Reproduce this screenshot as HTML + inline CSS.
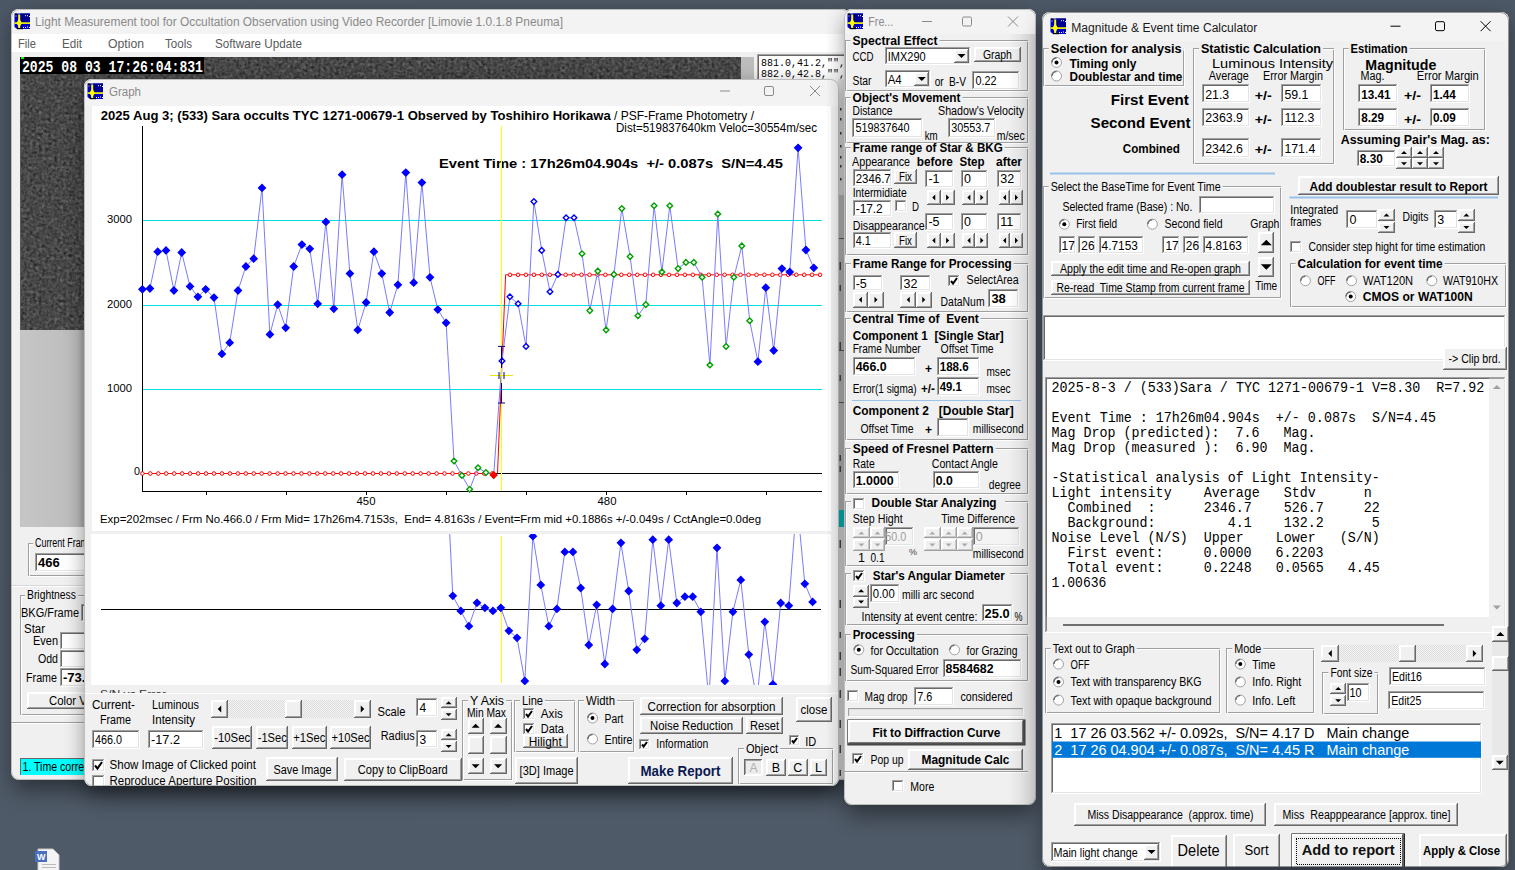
<!DOCTYPE html>
<html><head><meta charset="utf-8"><title>Limovie</title>
<style>
html,body{margin:0;padding:0;width:1515px;height:870px;overflow:hidden;background:#4b5664;}
svg{display:block;font-family:"Liberation Sans", sans-serif;} text{white-space:pre;}
</style></head><body>
<svg width="1515" height="870" viewBox="0 0 1515 870">
<defs>
<linearGradient id="desk" x1="0" y1="0" x2="0.3" y2="1">
<stop offset="0" stop-color="#4d5866"/><stop offset="1" stop-color="#4f5a68"/>
</linearGradient>
<filter id="shadow" x="-10%" y="-10%" width="120%" height="120%"><feGaussianBlur stdDeviation="11"/></filter>
<filter id="noise" x="0" y="0" width="100%" height="100%" color-interpolation-filters="sRGB">
<feTurbulence type="fractalNoise" baseFrequency="0.33" numOctaves="2" seed="3" result="t"/>
<feColorMatrix type="matrix" values="0.33 0.33 0.33 0 0  0.33 0.33 0.33 0 0  0.33 0.33 0.33 0 0  0 0 0 0 1"/>
<feComponentTransfer><feFuncR type="linear" slope="0.62" intercept="-0.025"/><feFuncG type="linear" slope="0.62" intercept="-0.025"/><feFuncB type="linear" slope="0.62" intercept="-0.025"/></feComponentTransfer>
</filter>
</defs>
<rect x="0" y="0" width="1515" height="870" fill="url(#desk)" />
<rect x="13" y="17" width="835" height="773" rx="8" fill="#000" opacity="0.45" filter="url(#shadow)"/>
<clipPath id="cmain"><rect x="11" y="9" width="839" height="771" rx="8"/></clipPath>
<g clip-path="url(#cmain)">
<rect x="11" y="9" width="839" height="771" fill="#f0f0f0" />
<rect x="11" y="9" width="839" height="25" fill="#f3f3f3" />
<g transform="translate(14,13) scale(1.0)"><path d="M0.5,0.5 H16 V16 H3 L0.5,14 Z" fill="#0000c0"/><rect x="6" y="0.5" width="10" height="9" fill="#000090"/><rect x="0.5" y="9.3" width="15.5" height="1.6" fill="#ffff00"/><rect x="4.2" y="1.5" width="2" height="14" fill="#ffff00"/><polygon points="5.2,5.5 8,10 5.2,14.5 2.4,10" fill="#ffff00"/><rect x="1" y="0.5" width="2" height="1.5" fill="#000"/><rect x="3" y="15" width="6" height="1.2" fill="#000"/><rect x="1.5" y="2.5" width="1" height="1" fill="#dde"/><rect x="11" y="2.2" width="1" height="1" fill="#fff"/><rect x="13" y="2.2" width="1" height="1" fill="#fff"/><rect x="15" y="3" width="1" height="1" fill="#fff"/><rect x="9" y="14" width="1" height="1" fill="#fff"/><rect x="11" y="14" width="1" height="1" fill="#fff"/><rect x="13" y="13.5" width="1" height="1" fill="#fff"/><rect x="15" y="14" width="1" height="1" fill="#fff"/></g>
<text x="4" y="724" font-size="11" fill="#fff" font-weight="bold">G</text>
<text x="35.0" y="26.0" font-size="12.5" fill="#8a8a8a" textLength="528.0" lengthAdjust="spacingAndGlyphs" >Light Measurement tool for Occultation Observation using Video Recorder [Limovie 1.0.1.8 Pneuma]</text>
<rect x="11" y="34" width="839" height="18" fill="#ffffff" />
<text x="18.0" y="47.8" font-size="12" fill="#5a5a5a" textLength="18.0" lengthAdjust="spacingAndGlyphs" >File</text>
<text x="62.0" y="47.8" font-size="12" fill="#5a5a5a" textLength="20.0" lengthAdjust="spacingAndGlyphs" >Edit</text>
<text x="108.0" y="47.8" font-size="12" fill="#5a5a5a" textLength="36.0" lengthAdjust="spacingAndGlyphs" >Option</text>
<text x="165.0" y="47.8" font-size="12" fill="#5a5a5a" textLength="27.0" lengthAdjust="spacingAndGlyphs" >Tools</text>
<text x="215.0" y="47.8" font-size="12" fill="#5a5a5a" textLength="87.0" lengthAdjust="spacingAndGlyphs" >Software Update</text>
<rect x="20" y="57" width="721" height="273" fill="#3a3a3a" />
<rect x="20" y="57" width="721" height="273" fill="#fff" filter="url(#noise)"/>
<rect x="20" y="57" width="1" height="470" fill="#5a5a5a" />
<rect x="20" y="330" width="721" height="197" fill="#c2c2c2" />
<linearGradient id="vgr" x1="0" x2="1"><stop offset="0" stop-color="#c6c6c6"/><stop offset="0.9" stop-color="#bcbcbc"/><stop offset="1" stop-color="#a8a8a8"/></linearGradient>
<rect x="21" y="330" width="63" height="197" fill="url(#vgr)" />
<rect x="741" y="57" width="13" height="273" fill="#bdbdbd" />
<rect x="20" y="57" width="184" height="17" fill="#000" />
<text x="22.0" y="71.8" font-size="16" fill="#fff" font-weight="bold" font-family="'Liberation Mono', monospace" textLength="181.0" lengthAdjust="spacingAndGlyphs" >2025 08 03 17:26:04:831</text>
<rect x="21" y="57" width="3" height="2" fill="#00ff00"/>
<rect x="757" y="54" width="93" height="276" fill="#fff" />
<rect x="757" y="54" width="93" height="1" fill="#a0a0a0" />
<rect x="757" y="54" width="1" height="276" fill="#a0a0a0" />
<rect x="757" y="329" width="93" height="1" fill="#fff" />
<rect x="849" y="54" width="1" height="276" fill="#fff" />
<rect x="758" y="55" width="91" height="1" fill="#696969" />
<rect x="758" y="55" width="1" height="274" fill="#696969" />
<rect x="758" y="328" width="91" height="1" fill="#e3e3e3" />
<rect x="848" y="55" width="1" height="274" fill="#e3e3e3" />
<text x="761.0" y="66.0" font-size="11" fill="#000" font-family="'Liberation Mono', monospace" textLength="84.0" lengthAdjust="spacingAndGlyphs" >881.0,41.2,"",</text>
<text x="761.0" y="76.5" font-size="11" fill="#000" font-family="'Liberation Mono', monospace" textLength="84.0" lengthAdjust="spacingAndGlyphs" >882.0,42.8,"",</text>
<rect x="838" y="79" width="6" height="116" fill="#ececec" />
<rect x="840" y="108" width="1.5" height="2.5" fill="#404040" />
<rect x="840" y="118" width="1.5" height="2.5" fill="#404040" />
<rect x="840" y="132" width="1.5" height="2.5" fill="#404040" />
<rect x="840" y="145" width="1.5" height="2.5" fill="#404040" />
<rect x="840" y="156" width="1.5" height="2.5" fill="#404040" />
<rect x="840" y="165" width="1.5" height="2.5" fill="#404040" />
<rect x="840" y="178" width="1.5" height="2.5" fill="#404040" />
<rect x="838" y="195" width="6" height="332" fill="#c8c8c8" />
<rect x="838" y="195" width="1" height="332" fill="#a0a0a0" />
<rect x="838" y="238" width="6" height="1" fill="#606060" />
<rect x="838" y="350" width="6" height="1" fill="#606060" />
<rect x="838" y="402" width="6" height="1" fill="#606060" />
<rect x="838" y="527" width="6" height="256" fill="#ececec" />
<rect x="839.5" y="262" width="1.5" height="8" fill="#505050" />
<rect x="839.5" y="285" width="1.5" height="6" fill="#505050" />
<rect x="839.5" y="342" width="1.5" height="8" fill="#505050" />
<rect x="839.5" y="375" width="1.5" height="6" fill="#505050" />
<rect x="839.5" y="455" width="1.5" height="6" fill="#505050" />
<rect x="839.5" y="466" width="1.5" height="6" fill="#505050" />
<rect x="839.5" y="540" width="1.5" height="8" fill="#505050" />
<rect x="839.5" y="600" width="1.5" height="8" fill="#505050" />
<rect x="839.5" y="632" width="1.5" height="6" fill="#505050" />
<rect x="839.5" y="652" width="1.5" height="8" fill="#505050" />
<rect x="839.5" y="668" width="1.5" height="8" fill="#505050" />
<rect x="839.5" y="690" width="1.5" height="8" fill="#505050" />
<rect x="839.5" y="720" width="1.5" height="8" fill="#505050" />
<rect x="839.5" y="745" width="1.5" height="8" fill="#505050" />
<rect x="839.5" y="770" width="1.5" height="6" fill="#505050" />
<rect x="838" y="510" width="6" height="17" fill="#00c8c8" />
<rect x="28" y="543" width="71" height="32" fill="none" stroke="#a0a0a0" stroke-width="1" shape-rendering="crispEdges" transform="translate(0.5,0.5)"/>
<rect x="29" y="544" width="71" height="32" fill="none" stroke="#ffffff" stroke-width="1" shape-rendering="crispEdges" transform="translate(0.5,0.5)" stroke-opacity="0.9"/>
<rect x="33" y="541" width="62" height="5" fill="#f0f0f0" />
<text x="35.0" y="547.3" font-size="12" fill="#000" textLength="58.0" lengthAdjust="spacingAndGlyphs" >Current Frame</text>
<rect x="35" y="553" width="65" height="19" fill="#fff" />
<rect x="35" y="553" width="65" height="1" fill="#a0a0a0" />
<rect x="35" y="553" width="1" height="19" fill="#a0a0a0" />
<rect x="35" y="571" width="65" height="1" fill="#ffffff" />
<rect x="99" y="553" width="1" height="19" fill="#ffffff" />
<rect x="36" y="554" width="63" height="1" fill="#696969" />
<rect x="36" y="554" width="1" height="17" fill="#696969" />
<rect x="36" y="570" width="63" height="1" fill="#e3e3e3" />
<rect x="98" y="554" width="1" height="17" fill="#e3e3e3" />
<text x="38.0" y="567.2" font-size="13" fill="#000" font-weight="bold" >466</text>
<rect x="11" y="585" width="73" height="1" fill="#d8d8d8" />
<rect x="11" y="586" width="73" height="1" fill="#fff" />
<rect x="20" y="595" width="79" height="119" fill="none" stroke="#a0a0a0" stroke-width="1" shape-rendering="crispEdges" transform="translate(0.5,0.5)"/>
<rect x="21" y="596" width="79" height="119" fill="none" stroke="#ffffff" stroke-width="1" shape-rendering="crispEdges" transform="translate(0.5,0.5)" stroke-opacity="0.9"/>
<rect x="25" y="593" width="53" height="5" fill="#f0f0f0" />
<text x="27.0" y="599.3" font-size="12" fill="#000" textLength="49.0" lengthAdjust="spacingAndGlyphs" >Brightness</text>
<text x="21.0" y="616.9" font-size="12" fill="#000" textLength="58.0" lengthAdjust="spacingAndGlyphs" >BKG/Frame</text>
<rect x="81" y="604" width="19" height="18" fill="#fff" />
<rect x="81" y="604" width="19" height="1" fill="#a0a0a0" />
<rect x="81" y="604" width="1" height="18" fill="#a0a0a0" />
<rect x="81" y="621" width="19" height="1" fill="#ffffff" />
<rect x="99" y="604" width="1" height="18" fill="#ffffff" />
<rect x="82" y="605" width="17" height="1" fill="#696969" />
<rect x="82" y="605" width="1" height="16" fill="#696969" />
<rect x="82" y="620" width="17" height="1" fill="#e3e3e3" />
<rect x="98" y="605" width="1" height="16" fill="#e3e3e3" />
<text x="24.0" y="632.9" font-size="12" fill="#000" textLength="21.0" lengthAdjust="spacingAndGlyphs" >Star</text>
<text x="33.0" y="645.3" font-size="12" fill="#000" textLength="25.0" lengthAdjust="spacingAndGlyphs" >Even</text>
<rect x="60" y="632" width="40" height="18" fill="#fff" />
<rect x="60" y="632" width="40" height="1" fill="#a0a0a0" />
<rect x="60" y="632" width="1" height="18" fill="#a0a0a0" />
<rect x="60" y="649" width="40" height="1" fill="#ffffff" />
<rect x="99" y="632" width="1" height="18" fill="#ffffff" />
<rect x="61" y="633" width="38" height="1" fill="#696969" />
<rect x="61" y="633" width="1" height="16" fill="#696969" />
<rect x="61" y="648" width="38" height="1" fill="#e3e3e3" />
<rect x="98" y="633" width="1" height="16" fill="#e3e3e3" />
<text x="38.0" y="663.3" font-size="12" fill="#000" textLength="20.0" lengthAdjust="spacingAndGlyphs" >Odd</text>
<rect x="60" y="650" width="40" height="18" fill="#fff" />
<rect x="60" y="650" width="40" height="1" fill="#a0a0a0" />
<rect x="60" y="650" width="1" height="18" fill="#a0a0a0" />
<rect x="60" y="667" width="40" height="1" fill="#ffffff" />
<rect x="99" y="650" width="1" height="18" fill="#ffffff" />
<rect x="61" y="651" width="38" height="1" fill="#696969" />
<rect x="61" y="651" width="1" height="16" fill="#696969" />
<rect x="61" y="666" width="38" height="1" fill="#e3e3e3" />
<rect x="98" y="651" width="1" height="16" fill="#e3e3e3" />
<text x="26.0" y="682.1" font-size="12" fill="#000" textLength="31.0" lengthAdjust="spacingAndGlyphs" >Frame</text>
<rect x="60" y="668" width="40" height="19" fill="#fff" />
<rect x="60" y="668" width="40" height="1" fill="#a0a0a0" />
<rect x="60" y="668" width="1" height="19" fill="#a0a0a0" />
<rect x="60" y="686" width="40" height="1" fill="#ffffff" />
<rect x="99" y="668" width="1" height="19" fill="#ffffff" />
<rect x="61" y="669" width="38" height="1" fill="#696969" />
<rect x="61" y="669" width="1" height="17" fill="#696969" />
<rect x="61" y="685" width="38" height="1" fill="#e3e3e3" />
<rect x="98" y="669" width="1" height="17" fill="#e3e3e3" />
<text x="63.0" y="682.2" font-size="13" fill="#000" font-weight="bold" >-73.</text>
<rect x="27" y="692" width="83" height="17" fill="#f0f0f0" />
<rect x="27" y="692" width="83" height="1" fill="#ffffff" />
<rect x="27" y="692" width="1" height="17" fill="#ffffff" />
<rect x="27" y="708" width="83" height="1" fill="#696969" />
<rect x="109" y="692" width="1" height="17" fill="#696969" />
<rect x="28" y="693" width="81" height="1" fill="#ffffff" />
<rect x="28" y="693" width="1" height="15" fill="#ffffff" />
<rect x="28" y="707" width="81" height="1" fill="#a0a0a0" />
<rect x="108" y="693" width="1" height="15" fill="#a0a0a0" />
<text x="49.0" y="705.0" font-size="12.5" fill="#000" textLength="40.0" lengthAdjust="spacingAndGlyphs" >Color V.</text>
<rect x="11" y="722" width="73" height="1" fill="#a0a0a0" />
<rect x="11" y="723" width="73" height="1" fill="#fff" />
<rect x="20" y="758" width="64" height="17" fill="#00ffff" />
<rect x="20" y="758" width="64" height="1" fill="#696969" />
<rect x="20" y="758" width="1" height="17" fill="#696969" />
<text x="22.5" y="771.3" font-size="12" fill="#000" textLength="84.0" lengthAdjust="spacingAndGlyphs" >1. Time correction</text>
</g>
<rect x="11.5" y="9.5" width="838" height="770" rx="8" fill="none" stroke="#9a9a9a" stroke-opacity="0.6"/>
<rect x="86" y="87" width="751" height="709" rx="8" fill="#000" opacity="0.45" filter="url(#shadow)"/>
<clipPath id="cgraph"><rect x="84" y="79" width="755" height="707" rx="8"/></clipPath>
<g clip-path="url(#cgraph)">
<rect x="84" y="79" width="755" height="707" fill="#f0f0f0" />
<rect x="84" y="79" width="755" height="27" fill="#f3f3f3" />
<g transform="translate(87,83) scale(1.0)"><path d="M0.5,0.5 H16 V16 H3 L0.5,14 Z" fill="#0000c0"/><rect x="6" y="0.5" width="10" height="9" fill="#000090"/><rect x="0.5" y="9.3" width="15.5" height="1.6" fill="#ffff00"/><rect x="4.2" y="1.5" width="2" height="14" fill="#ffff00"/><polygon points="5.2,5.5 8,10 5.2,14.5 2.4,10" fill="#ffff00"/><rect x="1" y="0.5" width="2" height="1.5" fill="#000"/><rect x="3" y="15" width="6" height="1.2" fill="#000"/><rect x="1.5" y="2.5" width="1" height="1" fill="#dde"/><rect x="11" y="2.2" width="1" height="1" fill="#fff"/><rect x="13" y="2.2" width="1" height="1" fill="#fff"/><rect x="15" y="3" width="1" height="1" fill="#fff"/><rect x="9" y="14" width="1" height="1" fill="#fff"/><rect x="11" y="14" width="1" height="1" fill="#fff"/><rect x="13" y="13.5" width="1" height="1" fill="#fff"/><rect x="15" y="14" width="1" height="1" fill="#fff"/></g>
<text x="109.0" y="96.0" font-size="12.5" fill="#8a8a8a" textLength="32.0" lengthAdjust="spacingAndGlyphs" >Graph</text>
<line x1="720" y1="91" x2="730" y2="91" stroke="#8a8a8a" stroke-width="1"/>
<rect x="764.5" y="86.5" width="9" height="9" rx="1.5" fill="none" stroke="#8a8a8a" stroke-width="1"/>
<path d="M810,86 L820,96 M820,86 L810,96" stroke="#8a8a8a" stroke-width="1"/>
<rect x="92" y="106" width="739" height="425" fill="#fff" />
<text x="100.8" y="120.0" font-size="12" fill="#000" font-weight="bold" textLength="510.0" lengthAdjust="spacingAndGlyphs" >2025 Aug 3; (533) Sara occults TYC 1271-00679-1 Observed by Toshihiro Horikawa</text>
<text x="614.0" y="120.0" font-size="12" fill="#000" textLength="140.0" lengthAdjust="spacingAndGlyphs" >/ PSF-Frame Photometry /</text>
<text x="616.0" y="132.3" font-size="12" fill="#000" textLength="201.0" lengthAdjust="spacingAndGlyphs" >Dist=519837640km Veloc=30554m/sec</text>
<text x="439.0" y="167.7" font-size="13" fill="#000" font-weight="bold" textLength="344.0" lengthAdjust="spacingAndGlyphs" >Event Time : 17h26m04.904s  +/- 0.087s  S/N=4.45</text>
<line x1="142" y1="220.5" x2="822" y2="220.5" stroke="#00e0e0" stroke-width="1" />
<text x="107.0" y="223.2" font-size="11" fill="#000" textLength="25.0" lengthAdjust="spacingAndGlyphs" >3000</text>
<line x1="142" y1="305.5" x2="822" y2="305.5" stroke="#00e0e0" stroke-width="1" />
<text x="107.0" y="307.6" font-size="11" fill="#000" textLength="25.0" lengthAdjust="spacingAndGlyphs" >2000</text>
<line x1="142" y1="389.5" x2="822" y2="389.5" stroke="#00e0e0" stroke-width="1" />
<text x="107.0" y="392.0" font-size="11" fill="#000" textLength="25.0" lengthAdjust="spacingAndGlyphs" >1000</text>
<text x="134.0" y="475.0" font-size="11" fill="#000" textLength="6.0" lengthAdjust="spacingAndGlyphs" >0</text>
<line x1="142.5" y1="126" x2="142.5" y2="491" stroke="#000" stroke-width="1" />
<line x1="142" y1="491.5" x2="822" y2="491.5" stroke="#000" stroke-width="1" />
<line x1="206.5" y1="491" x2="206.5" y2="495" stroke="#000" stroke-width="1" />
<line x1="286.5" y1="491" x2="286.5" y2="495" stroke="#000" stroke-width="1" />
<line x1="366.5" y1="491" x2="366.5" y2="495" stroke="#000" stroke-width="1" />
<line x1="446.5" y1="491" x2="446.5" y2="495" stroke="#000" stroke-width="1" />
<line x1="526.5" y1="491" x2="526.5" y2="495" stroke="#000" stroke-width="1" />
<line x1="606.5" y1="491" x2="606.5" y2="495" stroke="#000" stroke-width="1" />
<line x1="686.5" y1="491" x2="686.5" y2="495" stroke="#000" stroke-width="1" />
<line x1="766.5" y1="491" x2="766.5" y2="495" stroke="#000" stroke-width="1" />
<text x="366.0" y="505.0" font-size="11" fill="#000" text-anchor="middle" textLength="19.0" lengthAdjust="spacingAndGlyphs" >450</text>
<text x="607.0" y="505.0" font-size="11" fill="#000" text-anchor="middle" textLength="19.0" lengthAdjust="spacingAndGlyphs" >480</text>
<line x1="142" y1="473.5" x2="497.5" y2="473.5" stroke="#ff0000" stroke-width="1" />
<polyline points="497.5,473.5 505.6,274.8 822,274.8" fill="none" stroke="#ff0000" stroke-width="1"/>
<line x1="496" y1="473.5" x2="822" y2="473.5" stroke="#000" stroke-width="1" />
<circle cx="142.4" cy="473.5" r="1.8" fill="#fff" stroke="#ff0000" stroke-width="1"/>
<circle cx="150.3" cy="473.5" r="1.8" fill="#fff" stroke="#ff0000" stroke-width="1"/>
<circle cx="158.3" cy="473.5" r="1.8" fill="#fff" stroke="#ff0000" stroke-width="1"/>
<circle cx="166.2" cy="473.5" r="1.8" fill="#fff" stroke="#ff0000" stroke-width="1"/>
<circle cx="174.2" cy="473.5" r="1.8" fill="#fff" stroke="#ff0000" stroke-width="1"/>
<circle cx="182.2" cy="473.5" r="1.8" fill="#fff" stroke="#ff0000" stroke-width="1"/>
<circle cx="190.1" cy="473.5" r="1.8" fill="#fff" stroke="#ff0000" stroke-width="1"/>
<circle cx="198.1" cy="473.5" r="1.8" fill="#fff" stroke="#ff0000" stroke-width="1"/>
<circle cx="206.0" cy="473.5" r="1.8" fill="#fff" stroke="#ff0000" stroke-width="1"/>
<circle cx="213.9" cy="473.5" r="1.8" fill="#fff" stroke="#ff0000" stroke-width="1"/>
<circle cx="221.9" cy="473.5" r="1.8" fill="#fff" stroke="#ff0000" stroke-width="1"/>
<circle cx="229.9" cy="473.5" r="1.8" fill="#fff" stroke="#ff0000" stroke-width="1"/>
<circle cx="237.8" cy="473.5" r="1.8" fill="#fff" stroke="#ff0000" stroke-width="1"/>
<circle cx="245.8" cy="473.5" r="1.8" fill="#fff" stroke="#ff0000" stroke-width="1"/>
<circle cx="253.7" cy="473.5" r="1.8" fill="#fff" stroke="#ff0000" stroke-width="1"/>
<circle cx="261.6" cy="473.5" r="1.8" fill="#fff" stroke="#ff0000" stroke-width="1"/>
<circle cx="269.6" cy="473.5" r="1.8" fill="#fff" stroke="#ff0000" stroke-width="1"/>
<circle cx="277.6" cy="473.5" r="1.8" fill="#fff" stroke="#ff0000" stroke-width="1"/>
<circle cx="285.5" cy="473.5" r="1.8" fill="#fff" stroke="#ff0000" stroke-width="1"/>
<circle cx="293.5" cy="473.5" r="1.8" fill="#fff" stroke="#ff0000" stroke-width="1"/>
<circle cx="301.4" cy="473.5" r="1.8" fill="#fff" stroke="#ff0000" stroke-width="1"/>
<circle cx="309.4" cy="473.5" r="1.8" fill="#fff" stroke="#ff0000" stroke-width="1"/>
<circle cx="317.3" cy="473.5" r="1.8" fill="#fff" stroke="#ff0000" stroke-width="1"/>
<circle cx="325.2" cy="473.5" r="1.8" fill="#fff" stroke="#ff0000" stroke-width="1"/>
<circle cx="333.2" cy="473.5" r="1.8" fill="#fff" stroke="#ff0000" stroke-width="1"/>
<circle cx="341.1" cy="473.5" r="1.8" fill="#fff" stroke="#ff0000" stroke-width="1"/>
<circle cx="349.1" cy="473.5" r="1.8" fill="#fff" stroke="#ff0000" stroke-width="1"/>
<circle cx="357.1" cy="473.5" r="1.8" fill="#fff" stroke="#ff0000" stroke-width="1"/>
<circle cx="365.0" cy="473.5" r="1.8" fill="#fff" stroke="#ff0000" stroke-width="1"/>
<circle cx="373.0" cy="473.5" r="1.8" fill="#fff" stroke="#ff0000" stroke-width="1"/>
<circle cx="380.9" cy="473.5" r="1.8" fill="#fff" stroke="#ff0000" stroke-width="1"/>
<circle cx="388.9" cy="473.5" r="1.8" fill="#fff" stroke="#ff0000" stroke-width="1"/>
<circle cx="396.8" cy="473.5" r="1.8" fill="#fff" stroke="#ff0000" stroke-width="1"/>
<circle cx="404.8" cy="473.5" r="1.8" fill="#fff" stroke="#ff0000" stroke-width="1"/>
<circle cx="412.7" cy="473.5" r="1.8" fill="#fff" stroke="#ff0000" stroke-width="1"/>
<circle cx="420.6" cy="473.5" r="1.8" fill="#fff" stroke="#ff0000" stroke-width="1"/>
<circle cx="428.6" cy="473.5" r="1.8" fill="#fff" stroke="#ff0000" stroke-width="1"/>
<circle cx="436.6" cy="473.5" r="1.8" fill="#fff" stroke="#ff0000" stroke-width="1"/>
<circle cx="444.5" cy="473.5" r="1.8" fill="#fff" stroke="#ff0000" stroke-width="1"/>
<circle cx="452.5" cy="473.5" r="1.8" fill="#fff" stroke="#ff0000" stroke-width="1"/>
<circle cx="460.4" cy="473.5" r="1.8" fill="#fff" stroke="#ff0000" stroke-width="1"/>
<circle cx="468.4" cy="473.5" r="1.8" fill="#fff" stroke="#ff0000" stroke-width="1"/>
<circle cx="476.3" cy="473.5" r="1.8" fill="#fff" stroke="#ff0000" stroke-width="1"/>
<circle cx="484.2" cy="473.5" r="1.8" fill="#fff" stroke="#ff0000" stroke-width="1"/>
<circle cx="492.2" cy="473.5" r="1.8" fill="#fff" stroke="#ff0000" stroke-width="1"/>
<circle cx="510.0" cy="274.8" r="1.8" fill="#fff" stroke="#ff0000" stroke-width="1"/>
<circle cx="518.0" cy="274.8" r="1.8" fill="#fff" stroke="#ff0000" stroke-width="1"/>
<circle cx="525.9" cy="274.8" r="1.8" fill="#fff" stroke="#ff0000" stroke-width="1"/>
<circle cx="533.9" cy="274.8" r="1.8" fill="#fff" stroke="#ff0000" stroke-width="1"/>
<circle cx="541.8" cy="274.8" r="1.8" fill="#fff" stroke="#ff0000" stroke-width="1"/>
<circle cx="549.8" cy="274.8" r="1.8" fill="#fff" stroke="#ff0000" stroke-width="1"/>
<circle cx="557.7" cy="274.8" r="1.8" fill="#fff" stroke="#ff0000" stroke-width="1"/>
<circle cx="565.6" cy="274.8" r="1.8" fill="#fff" stroke="#ff0000" stroke-width="1"/>
<circle cx="573.6" cy="274.8" r="1.8" fill="#fff" stroke="#ff0000" stroke-width="1"/>
<circle cx="581.5" cy="274.8" r="1.8" fill="#fff" stroke="#ff0000" stroke-width="1"/>
<circle cx="589.5" cy="274.8" r="1.8" fill="#fff" stroke="#ff0000" stroke-width="1"/>
<circle cx="597.5" cy="274.8" r="1.8" fill="#fff" stroke="#ff0000" stroke-width="1"/>
<circle cx="605.4" cy="274.8" r="1.8" fill="#fff" stroke="#ff0000" stroke-width="1"/>
<circle cx="613.4" cy="274.8" r="1.8" fill="#fff" stroke="#ff0000" stroke-width="1"/>
<circle cx="621.3" cy="274.8" r="1.8" fill="#fff" stroke="#ff0000" stroke-width="1"/>
<circle cx="629.2" cy="274.8" r="1.8" fill="#fff" stroke="#ff0000" stroke-width="1"/>
<circle cx="637.2" cy="274.8" r="1.8" fill="#fff" stroke="#ff0000" stroke-width="1"/>
<circle cx="645.1" cy="274.8" r="1.8" fill="#fff" stroke="#ff0000" stroke-width="1"/>
<circle cx="653.1" cy="274.8" r="1.8" fill="#fff" stroke="#ff0000" stroke-width="1"/>
<circle cx="661.0" cy="274.8" r="1.8" fill="#fff" stroke="#ff0000" stroke-width="1"/>
<circle cx="669.0" cy="274.8" r="1.8" fill="#fff" stroke="#ff0000" stroke-width="1"/>
<circle cx="677.0" cy="274.8" r="1.8" fill="#fff" stroke="#ff0000" stroke-width="1"/>
<circle cx="684.9" cy="274.8" r="1.8" fill="#fff" stroke="#ff0000" stroke-width="1"/>
<circle cx="692.9" cy="274.8" r="1.8" fill="#fff" stroke="#ff0000" stroke-width="1"/>
<circle cx="700.8" cy="274.8" r="1.8" fill="#fff" stroke="#ff0000" stroke-width="1"/>
<circle cx="708.8" cy="274.8" r="1.8" fill="#fff" stroke="#ff0000" stroke-width="1"/>
<circle cx="716.7" cy="274.8" r="1.8" fill="#fff" stroke="#ff0000" stroke-width="1"/>
<circle cx="724.6" cy="274.8" r="1.8" fill="#fff" stroke="#ff0000" stroke-width="1"/>
<circle cx="732.6" cy="274.8" r="1.8" fill="#fff" stroke="#ff0000" stroke-width="1"/>
<circle cx="740.5" cy="274.8" r="1.8" fill="#fff" stroke="#ff0000" stroke-width="1"/>
<circle cx="748.5" cy="274.8" r="1.8" fill="#fff" stroke="#ff0000" stroke-width="1"/>
<circle cx="756.5" cy="274.8" r="1.8" fill="#fff" stroke="#ff0000" stroke-width="1"/>
<circle cx="764.4" cy="274.8" r="1.8" fill="#fff" stroke="#ff0000" stroke-width="1"/>
<circle cx="772.4" cy="274.8" r="1.8" fill="#fff" stroke="#ff0000" stroke-width="1"/>
<circle cx="780.3" cy="274.8" r="1.8" fill="#fff" stroke="#ff0000" stroke-width="1"/>
<circle cx="788.2" cy="274.8" r="1.8" fill="#fff" stroke="#ff0000" stroke-width="1"/>
<circle cx="796.2" cy="274.8" r="1.8" fill="#fff" stroke="#ff0000" stroke-width="1"/>
<circle cx="804.2" cy="274.8" r="1.8" fill="#fff" stroke="#ff0000" stroke-width="1"/>
<circle cx="812.1" cy="274.8" r="1.8" fill="#fff" stroke="#ff0000" stroke-width="1"/>
<circle cx="820.0" cy="274.8" r="1.8" fill="#fff" stroke="#ff0000" stroke-width="1"/>
<line x1="501.5" y1="126" x2="501.5" y2="491" stroke="#ffff00" stroke-width="1" />
<polyline points="142.4,289.3 149.9,288.5 157.7,251.7 166,250.4 173.9,290.5 181.7,252.5 190,286.4 197.9,296.8 205.7,289.3 214,297.6 221.9,353.9 229.7,342.7 238,290.5 245.9,266.5 253.7,258.7 262,187.9 269.9,334.4 277.7,304.6 285.7,327.8 293.7,266.5 301.9,244.6 309.8,248.8 317.7,303.8 325.9,221.9 333.8,308.8 342.1,174.7 349.9,273.6 357.8,329.9 366.1,302.5 373.9,251.7 381.8,273.6 389.7,312.5 397.9,284.8 405.8,172.6 413.7,282.7 421.9,182.6 430,277.3 437.8,309.6 446.1,322.8 454,461 461.9,475.5 469.7,489.2 478,467.7 485.9,472.6 493.7,475.1 502,360.9 509.9,296.8 518.1,303.8 526,346.4 533.9,201.6 541.7,250.4 550,291.8 557.9,274.4 566.1,217.7 574,217.7 582,253.7 589.8,310.6 597.8,271.1 606.1,329.9 613.9,274.4 621.8,208.6 630.1,256.6 637.9,315.8 645.8,304.6 654.1,205.7 661.9,271.9 669.8,205.7 678.1,268.6 685.9,262.4 693.8,262.4 702.1,277.3 709.9,365 717.8,214 726.1,346.4 733.9,277.3 741.8,245.9 749.7,320.8 757.9,361.7 765.8,287.7 773.7,350.5 781.9,268.6 789.8,271.9 798.1,147.8 805.9,250 813.8,267.8" fill="none" stroke="#7b7bff" stroke-width="1"/>
<polygon points="142.4,285.90000000000003 145.8,289.3 142.4,292.7 139.0,289.3" fill="#0000ff" stroke="#0000ff" stroke-width="1.4"/>
<polygon points="149.9,285.1 153.3,288.5 149.9,291.9 146.5,288.5" fill="#0000ff" stroke="#0000ff" stroke-width="1.4"/>
<polygon points="157.7,248.29999999999998 161.1,251.7 157.7,255.1 154.29999999999998,251.7" fill="#0000ff" stroke="#0000ff" stroke-width="1.4"/>
<polygon points="166,247.0 169.4,250.4 166,253.8 162.6,250.4" fill="#0000ff" stroke="#0000ff" stroke-width="1.4"/>
<polygon points="173.9,287.1 177.3,290.5 173.9,293.9 170.5,290.5" fill="#0000ff" stroke="#0000ff" stroke-width="1.4"/>
<polygon points="181.7,249.1 185.1,252.5 181.7,255.9 178.29999999999998,252.5" fill="#0000ff" stroke="#0000ff" stroke-width="1.4"/>
<polygon points="190,283.0 193.4,286.4 190,289.79999999999995 186.6,286.4" fill="#0000ff" stroke="#0000ff" stroke-width="1.4"/>
<polygon points="197.9,293.40000000000003 201.3,296.8 197.9,300.2 194.5,296.8" fill="#0000ff" stroke="#0000ff" stroke-width="1.4"/>
<polygon points="205.7,285.90000000000003 209.1,289.3 205.7,292.7 202.29999999999998,289.3" fill="#0000ff" stroke="#0000ff" stroke-width="1.4"/>
<polygon points="214,294.20000000000005 217.4,297.6 214,301.0 210.6,297.6" fill="#0000ff" stroke="#0000ff" stroke-width="1.4"/>
<polygon points="221.9,350.5 225.3,353.9 221.9,357.29999999999995 218.5,353.9" fill="#0000ff" stroke="#0000ff" stroke-width="1.4"/>
<polygon points="229.7,339.3 233.1,342.7 229.7,346.09999999999997 226.29999999999998,342.7" fill="#0000ff" stroke="#0000ff" stroke-width="1.4"/>
<polygon points="238,287.1 241.4,290.5 238,293.9 234.6,290.5" fill="#0000ff" stroke="#0000ff" stroke-width="1.4"/>
<polygon points="245.9,263.1 249.3,266.5 245.9,269.9 242.5,266.5" fill="#0000ff" stroke="#0000ff" stroke-width="1.4"/>
<polygon points="253.7,255.29999999999998 257.09999999999997,258.7 253.7,262.09999999999997 250.29999999999998,258.7" fill="#0000ff" stroke="#0000ff" stroke-width="1.4"/>
<polygon points="262,184.5 265.4,187.9 262,191.3 258.6,187.9" fill="#0000ff" stroke="#0000ff" stroke-width="1.4"/>
<polygon points="269.9,331.0 273.29999999999995,334.4 269.9,337.79999999999995 266.5,334.4" fill="#0000ff" stroke="#0000ff" stroke-width="1.4"/>
<polygon points="277.7,301.20000000000005 281.09999999999997,304.6 277.7,308.0 274.3,304.6" fill="#0000ff" stroke="#0000ff" stroke-width="1.4"/>
<polygon points="285.7,324.40000000000003 289.09999999999997,327.8 285.7,331.2 282.3,327.8" fill="#0000ff" stroke="#0000ff" stroke-width="1.4"/>
<polygon points="293.7,263.1 297.09999999999997,266.5 293.7,269.9 290.3,266.5" fill="#0000ff" stroke="#0000ff" stroke-width="1.4"/>
<polygon points="301.9,241.2 305.29999999999995,244.6 301.9,248.0 298.5,244.6" fill="#0000ff" stroke="#0000ff" stroke-width="1.4"/>
<polygon points="309.8,245.4 313.2,248.8 309.8,252.20000000000002 306.40000000000003,248.8" fill="#0000ff" stroke="#0000ff" stroke-width="1.4"/>
<polygon points="317.7,300.40000000000003 321.09999999999997,303.8 317.7,307.2 314.3,303.8" fill="#0000ff" stroke="#0000ff" stroke-width="1.4"/>
<polygon points="325.9,218.5 329.29999999999995,221.9 325.9,225.3 322.5,221.9" fill="#0000ff" stroke="#0000ff" stroke-width="1.4"/>
<polygon points="333.8,305.40000000000003 337.2,308.8 333.8,312.2 330.40000000000003,308.8" fill="#0000ff" stroke="#0000ff" stroke-width="1.4"/>
<polygon points="342.1,171.29999999999998 345.5,174.7 342.1,178.1 338.70000000000005,174.7" fill="#0000ff" stroke="#0000ff" stroke-width="1.4"/>
<polygon points="349.9,270.20000000000005 353.29999999999995,273.6 349.9,277.0 346.5,273.6" fill="#0000ff" stroke="#0000ff" stroke-width="1.4"/>
<polygon points="357.8,326.5 361.2,329.9 357.8,333.29999999999995 354.40000000000003,329.9" fill="#0000ff" stroke="#0000ff" stroke-width="1.4"/>
<polygon points="366.1,299.1 369.5,302.5 366.1,305.9 362.70000000000005,302.5" fill="#0000ff" stroke="#0000ff" stroke-width="1.4"/>
<polygon points="373.9,248.29999999999998 377.29999999999995,251.7 373.9,255.1 370.5,251.7" fill="#0000ff" stroke="#0000ff" stroke-width="1.4"/>
<polygon points="381.8,270.20000000000005 385.2,273.6 381.8,277.0 378.40000000000003,273.6" fill="#0000ff" stroke="#0000ff" stroke-width="1.4"/>
<polygon points="389.7,309.1 393.09999999999997,312.5 389.7,315.9 386.3,312.5" fill="#0000ff" stroke="#0000ff" stroke-width="1.4"/>
<polygon points="397.9,281.40000000000003 401.29999999999995,284.8 397.9,288.2 394.5,284.8" fill="#0000ff" stroke="#0000ff" stroke-width="1.4"/>
<polygon points="405.8,169.2 409.2,172.6 405.8,176.0 402.40000000000003,172.6" fill="#0000ff" stroke="#0000ff" stroke-width="1.4"/>
<polygon points="413.7,279.3 417.09999999999997,282.7 413.7,286.09999999999997 410.3,282.7" fill="#0000ff" stroke="#0000ff" stroke-width="1.4"/>
<polygon points="421.9,179.2 425.29999999999995,182.6 421.9,186.0 418.5,182.6" fill="#0000ff" stroke="#0000ff" stroke-width="1.4"/>
<polygon points="430,273.90000000000003 433.4,277.3 430,280.7 426.6,277.3" fill="#0000ff" stroke="#0000ff" stroke-width="1.4"/>
<polygon points="437.8,306.20000000000005 441.2,309.6 437.8,313.0 434.40000000000003,309.6" fill="#0000ff" stroke="#0000ff" stroke-width="1.4"/>
<polygon points="446.1,319.40000000000003 449.5,322.8 446.1,326.2 442.70000000000005,322.8" fill="#0000ff" stroke="#0000ff" stroke-width="1.4"/>
<polygon points="454,458.2 456.8,461 454,463.8 451.2,461" fill="#fff" stroke="#00a000" stroke-width="1.4"/>
<polygon points="461.9,472.7 464.7,475.5 461.9,478.3 459.09999999999997,475.5" fill="#fff" stroke="#00a000" stroke-width="1.4"/>
<polygon points="469.7,486.4 472.5,489.2 469.7,492.0 466.9,489.2" fill="#fff" stroke="#00a000" stroke-width="1.4"/>
<polygon points="478,464.9 480.8,467.7 478,470.5 475.2,467.7" fill="#fff" stroke="#00a000" stroke-width="1.4"/>
<polygon points="485.9,469.8 488.7,472.6 485.9,475.40000000000003 483.09999999999997,472.6" fill="#fff" stroke="#00a000" stroke-width="1.4"/>
<polygon points="493.7,472.3 496.5,475.1 493.7,477.90000000000003 490.9,475.1" fill="#fff" stroke="#00a000" stroke-width="1.4"/>
<polygon points="502,358.09999999999997 504.8,360.9 502,363.7 499.2,360.9" fill="#fff" stroke="#0000ff" stroke-width="1.4"/>
<polygon points="509.9,294.0 512.6999999999999,296.8 509.9,299.6 507.09999999999997,296.8" fill="#fff" stroke="#0000ff" stroke-width="1.4"/>
<polygon points="518.1,301.0 520.9,303.8 518.1,306.6 515.3000000000001,303.8" fill="#fff" stroke="#0000ff" stroke-width="1.4"/>
<polygon points="526,343.59999999999997 528.8,346.4 526,349.2 523.2,346.4" fill="#fff" stroke="#0000ff" stroke-width="1.4"/>
<polygon points="533.9,198.79999999999998 536.6999999999999,201.6 533.9,204.4 531.1,201.6" fill="#fff" stroke="#0000ff" stroke-width="1.4"/>
<polygon points="541.7,247.6 544.5,250.4 541.7,253.20000000000002 538.9000000000001,250.4" fill="#fff" stroke="#0000ff" stroke-width="1.4"/>
<polygon points="550,289.0 552.8,291.8 550,294.6 547.2,291.8" fill="#fff" stroke="#0000ff" stroke-width="1.4"/>
<polygon points="557.9,271.59999999999997 560.6999999999999,274.4 557.9,277.2 555.1,274.4" fill="#fff" stroke="#0000ff" stroke-width="1.4"/>
<polygon points="566.1,214.89999999999998 568.9,217.7 566.1,220.5 563.3000000000001,217.7" fill="#fff" stroke="#0000ff" stroke-width="1.4"/>
<polygon points="574,214.89999999999998 576.8,217.7 574,220.5 571.2,217.7" fill="#fff" stroke="#0000ff" stroke-width="1.4"/>
<polygon points="582,250.89999999999998 584.8,253.7 582,256.5 579.2,253.7" fill="#fff" stroke="#00a000" stroke-width="1.4"/>
<polygon points="589.8,307.8 592.5999999999999,310.6 589.8,313.40000000000003 587.0,310.6" fill="#fff" stroke="#00a000" stroke-width="1.4"/>
<polygon points="597.8,268.3 600.5999999999999,271.1 597.8,273.90000000000003 595.0,271.1" fill="#fff" stroke="#00a000" stroke-width="1.4"/>
<polygon points="606.1,327.09999999999997 608.9,329.9 606.1,332.7 603.3000000000001,329.9" fill="#fff" stroke="#00a000" stroke-width="1.4"/>
<polygon points="613.9,271.59999999999997 616.6999999999999,274.4 613.9,277.2 611.1,274.4" fill="#fff" stroke="#00a000" stroke-width="1.4"/>
<polygon points="621.8,205.79999999999998 624.5999999999999,208.6 621.8,211.4 619.0,208.6" fill="#fff" stroke="#00a000" stroke-width="1.4"/>
<polygon points="630.1,253.8 632.9,256.6 630.1,259.40000000000003 627.3000000000001,256.6" fill="#fff" stroke="#00a000" stroke-width="1.4"/>
<polygon points="637.9,313.0 640.6999999999999,315.8 637.9,318.6 635.1,315.8" fill="#fff" stroke="#00a000" stroke-width="1.4"/>
<polygon points="645.8,301.8 648.5999999999999,304.6 645.8,307.40000000000003 643.0,304.6" fill="#fff" stroke="#00a000" stroke-width="1.4"/>
<polygon points="654.1,202.89999999999998 656.9,205.7 654.1,208.5 651.3000000000001,205.7" fill="#fff" stroke="#00a000" stroke-width="1.4"/>
<polygon points="661.9,269.09999999999997 664.6999999999999,271.9 661.9,274.7 659.1,271.9" fill="#fff" stroke="#00a000" stroke-width="1.4"/>
<polygon points="669.8,202.89999999999998 672.5999999999999,205.7 669.8,208.5 667.0,205.7" fill="#fff" stroke="#00a000" stroke-width="1.4"/>
<polygon points="678.1,265.8 680.9,268.6 678.1,271.40000000000003 675.3000000000001,268.6" fill="#fff" stroke="#00a000" stroke-width="1.4"/>
<polygon points="685.9,259.59999999999997 688.6999999999999,262.4 685.9,265.2 683.1,262.4" fill="#fff" stroke="#00a000" stroke-width="1.4"/>
<polygon points="693.8,259.59999999999997 696.5999999999999,262.4 693.8,265.2 691.0,262.4" fill="#fff" stroke="#00a000" stroke-width="1.4"/>
<polygon points="702.1,274.5 704.9,277.3 702.1,280.1 699.3000000000001,277.3" fill="#fff" stroke="#00a000" stroke-width="1.4"/>
<polygon points="709.9,362.2 712.6999999999999,365 709.9,367.8 707.1,365" fill="#fff" stroke="#00a000" stroke-width="1.4"/>
<polygon points="717.8,211.2 720.5999999999999,214 717.8,216.8 715.0,214" fill="#fff" stroke="#00a000" stroke-width="1.4"/>
<polygon points="726.1,343.59999999999997 728.9,346.4 726.1,349.2 723.3000000000001,346.4" fill="#fff" stroke="#00a000" stroke-width="1.4"/>
<polygon points="733.9,274.5 736.6999999999999,277.3 733.9,280.1 731.1,277.3" fill="#fff" stroke="#00a000" stroke-width="1.4"/>
<polygon points="741.8,243.1 744.5999999999999,245.9 741.8,248.70000000000002 739.0,245.9" fill="#fff" stroke="#00a000" stroke-width="1.4"/>
<polygon points="749.7,318.0 752.5,320.8 749.7,323.6 746.9000000000001,320.8" fill="#fff" stroke="#00a000" stroke-width="1.4"/>
<polygon points="757.9,358.3 761.3,361.7 757.9,365.09999999999997 754.5,361.7" fill="#0000ff" stroke="#0000ff" stroke-width="1.4"/>
<polygon points="765.8,284.3 769.1999999999999,287.7 765.8,291.09999999999997 762.4,287.7" fill="#0000ff" stroke="#0000ff" stroke-width="1.4"/>
<polygon points="773.7,347.1 777.1,350.5 773.7,353.9 770.3000000000001,350.5" fill="#0000ff" stroke="#0000ff" stroke-width="1.4"/>
<polygon points="781.9,265.20000000000005 785.3,268.6 781.9,272.0 778.5,268.6" fill="#0000ff" stroke="#0000ff" stroke-width="1.4"/>
<polygon points="789.8,268.5 793.1999999999999,271.9 789.8,275.29999999999995 786.4,271.9" fill="#0000ff" stroke="#0000ff" stroke-width="1.4"/>
<polygon points="798.1,144.4 801.5,147.8 798.1,151.20000000000002 794.7,147.8" fill="#0000ff" stroke="#0000ff" stroke-width="1.4"/>
<polygon points="805.9,246.6 809.3,250 805.9,253.4 802.5,250" fill="#0000ff" stroke="#0000ff" stroke-width="1.4"/>
<polygon points="813.8,264.40000000000003 817.1999999999999,267.8 813.8,271.2 810.4,267.8" fill="#0000ff" stroke="#0000ff" stroke-width="1.4"/>
<polygon points="493.7,471.90000000000003 496.9,475.1 493.7,478.3 490.5,475.1" fill="#ff0000" stroke="#ff0000" stroke-width="1.4"/>
<path d="M501.5,346.4 V403 M498,346.4 H505 M498,403 H505" stroke="#000080" stroke-width="1" fill="none"/>
<path d="M490,375.5 H513 M501.5,368 V383" stroke="#e8e800" stroke-width="1" fill="none"/>
<path d="M499,372 V379 M504,372 V379" stroke="#000080" stroke-width="1" fill="none"/>
<text x="100.0" y="523.1" font-size="11.5" fill="#000" textLength="661.0" lengthAdjust="spacingAndGlyphs" >Exp=202msec / Frm No.466.0 / Frm Mid= 17h26m4.7153s,  End= 4.8163s / Event=Frm mid +0.1886s +/-0.049s / CctAngle=0.0deg</text>
<rect x="91" y="534" width="740" height="151" fill="#fff" />
<line x1="101" y1="609.5" x2="821" y2="609.5" stroke="#000" stroke-width="1" />
<line x1="501.5" y1="536" x2="501.5" y2="683" stroke="#ffff00" stroke-width="1" />
<clipPath id="clow"><rect x="91" y="534" width="740" height="151"/></clipPath><g clip-path="url(#clow)">
<polyline points="446,500 449.7,533 452.8,595.8 460.8,610.9 468.9,626.2 477,602.8 484.9,607.8 492.9,610.9 500.8,607.8 508.9,630.8 517,637.8 524.8,681 532.9,536.2 540.8,584.9 548.8,626.2 556.9,608.9 564.8,551.9 572.9,551.9 580.7,588 588.8,645 596.7,604.8 604.8,664 612.6,608.9 620.9,542.8 628.7,591 636.8,649.8 644.7,638.8 652.8,539.7 660.8,605.7 668.7,539.7 676.8,603 684.9,596.7 692.7,596.7 700.8,611.8 708.9,700 717,547.8 724.8,681 732.9,611.8 740.8,579.9 748.8,654.6 756.9,700 764.8,621.8 772.9,684.3 780.7,603 788.8,605.7 796.9,500 804.8,583.8 812.6,601.9" fill="none" stroke="#7b7bff" stroke-width="1"/>
<polygon points="452.8,592.4 456.2,595.8 452.8,599.1999999999999 449.40000000000003,595.8" fill="#0000ff" stroke="#0000ff" stroke-width="1.4"/>
<polygon points="460.8,607.5 464.2,610.9 460.8,614.3 457.40000000000003,610.9" fill="#0000ff" stroke="#0000ff" stroke-width="1.4"/>
<polygon points="468.9,622.8000000000001 472.29999999999995,626.2 468.9,629.6 465.5,626.2" fill="#0000ff" stroke="#0000ff" stroke-width="1.4"/>
<polygon points="477,599.4 480.4,602.8 477,606.1999999999999 473.6,602.8" fill="#0000ff" stroke="#0000ff" stroke-width="1.4"/>
<polygon points="484.9,604.4 488.29999999999995,607.8 484.9,611.1999999999999 481.5,607.8" fill="#0000ff" stroke="#0000ff" stroke-width="1.4"/>
<polygon points="492.9,607.5 496.29999999999995,610.9 492.9,614.3 489.5,610.9" fill="#0000ff" stroke="#0000ff" stroke-width="1.4"/>
<polygon points="500.8,604.4 504.2,607.8 500.8,611.1999999999999 497.40000000000003,607.8" fill="#0000ff" stroke="#0000ff" stroke-width="1.4"/>
<polygon points="508.9,627.4 512.3,630.8 508.9,634.1999999999999 505.5,630.8" fill="#0000ff" stroke="#0000ff" stroke-width="1.4"/>
<polygon points="517,634.4 520.4,637.8 517,641.1999999999999 513.6,637.8" fill="#0000ff" stroke="#0000ff" stroke-width="1.4"/>
<polygon points="524.8,677.6 528.1999999999999,681 524.8,684.4 521.4,681" fill="#0000ff" stroke="#0000ff" stroke-width="1.4"/>
<polygon points="532.9,532.8000000000001 536.3,536.2 532.9,539.6 529.5,536.2" fill="#0000ff" stroke="#0000ff" stroke-width="1.4"/>
<polygon points="540.8,581.5 544.1999999999999,584.9 540.8,588.3 537.4,584.9" fill="#0000ff" stroke="#0000ff" stroke-width="1.4"/>
<polygon points="548.8,622.8000000000001 552.1999999999999,626.2 548.8,629.6 545.4,626.2" fill="#0000ff" stroke="#0000ff" stroke-width="1.4"/>
<polygon points="556.9,605.5 560.3,608.9 556.9,612.3 553.5,608.9" fill="#0000ff" stroke="#0000ff" stroke-width="1.4"/>
<polygon points="564.8,548.5 568.1999999999999,551.9 564.8,555.3 561.4,551.9" fill="#0000ff" stroke="#0000ff" stroke-width="1.4"/>
<polygon points="572.9,548.5 576.3,551.9 572.9,555.3 569.5,551.9" fill="#0000ff" stroke="#0000ff" stroke-width="1.4"/>
<polygon points="580.7,584.6 584.1,588 580.7,591.4 577.3000000000001,588" fill="#0000ff" stroke="#0000ff" stroke-width="1.4"/>
<polygon points="588.8,641.6 592.1999999999999,645 588.8,648.4 585.4,645" fill="#0000ff" stroke="#0000ff" stroke-width="1.4"/>
<polygon points="596.7,601.4 600.1,604.8 596.7,608.1999999999999 593.3000000000001,604.8" fill="#0000ff" stroke="#0000ff" stroke-width="1.4"/>
<polygon points="604.8,660.6 608.1999999999999,664 604.8,667.4 601.4,664" fill="#0000ff" stroke="#0000ff" stroke-width="1.4"/>
<polygon points="612.6,605.5 616.0,608.9 612.6,612.3 609.2,608.9" fill="#0000ff" stroke="#0000ff" stroke-width="1.4"/>
<polygon points="620.9,539.4 624.3,542.8 620.9,546.1999999999999 617.5,542.8" fill="#0000ff" stroke="#0000ff" stroke-width="1.4"/>
<polygon points="628.7,587.6 632.1,591 628.7,594.4 625.3000000000001,591" fill="#0000ff" stroke="#0000ff" stroke-width="1.4"/>
<polygon points="636.8,646.4 640.1999999999999,649.8 636.8,653.1999999999999 633.4,649.8" fill="#0000ff" stroke="#0000ff" stroke-width="1.4"/>
<polygon points="644.7,635.4 648.1,638.8 644.7,642.1999999999999 641.3000000000001,638.8" fill="#0000ff" stroke="#0000ff" stroke-width="1.4"/>
<polygon points="652.8,536.3000000000001 656.1999999999999,539.7 652.8,543.1 649.4,539.7" fill="#0000ff" stroke="#0000ff" stroke-width="1.4"/>
<polygon points="660.8,602.3000000000001 664.1999999999999,605.7 660.8,609.1 657.4,605.7" fill="#0000ff" stroke="#0000ff" stroke-width="1.4"/>
<polygon points="668.7,536.3000000000001 672.1,539.7 668.7,543.1 665.3000000000001,539.7" fill="#0000ff" stroke="#0000ff" stroke-width="1.4"/>
<polygon points="676.8,599.6 680.1999999999999,603 676.8,606.4 673.4,603" fill="#0000ff" stroke="#0000ff" stroke-width="1.4"/>
<polygon points="684.9,593.3000000000001 688.3,596.7 684.9,600.1 681.5,596.7" fill="#0000ff" stroke="#0000ff" stroke-width="1.4"/>
<polygon points="692.7,593.3000000000001 696.1,596.7 692.7,600.1 689.3000000000001,596.7" fill="#0000ff" stroke="#0000ff" stroke-width="1.4"/>
<polygon points="700.8,608.4 704.1999999999999,611.8 700.8,615.1999999999999 697.4,611.8" fill="#0000ff" stroke="#0000ff" stroke-width="1.4"/>
<polygon points="717,544.4 720.4,547.8 717,551.1999999999999 713.6,547.8" fill="#0000ff" stroke="#0000ff" stroke-width="1.4"/>
<polygon points="724.8,677.6 728.1999999999999,681 724.8,684.4 721.4,681" fill="#0000ff" stroke="#0000ff" stroke-width="1.4"/>
<polygon points="732.9,608.4 736.3,611.8 732.9,615.1999999999999 729.5,611.8" fill="#0000ff" stroke="#0000ff" stroke-width="1.4"/>
<polygon points="740.8,576.5 744.1999999999999,579.9 740.8,583.3 737.4,579.9" fill="#0000ff" stroke="#0000ff" stroke-width="1.4"/>
<polygon points="748.8,651.2 752.1999999999999,654.6 748.8,658.0 745.4,654.6" fill="#0000ff" stroke="#0000ff" stroke-width="1.4"/>
<polygon points="764.8,618.4 768.1999999999999,621.8 764.8,625.1999999999999 761.4,621.8" fill="#0000ff" stroke="#0000ff" stroke-width="1.4"/>
<polygon points="772.9,680.9 776.3,684.3 772.9,687.6999999999999 769.5,684.3" fill="#0000ff" stroke="#0000ff" stroke-width="1.4"/>
<polygon points="780.7,599.6 784.1,603 780.7,606.4 777.3000000000001,603" fill="#0000ff" stroke="#0000ff" stroke-width="1.4"/>
<polygon points="788.8,602.3000000000001 792.1999999999999,605.7 788.8,609.1 785.4,605.7" fill="#0000ff" stroke="#0000ff" stroke-width="1.4"/>
<polygon points="804.8,580.4 808.1999999999999,583.8 804.8,587.1999999999999 801.4,583.8" fill="#0000ff" stroke="#0000ff" stroke-width="1.4"/>
<polygon points="812.6,598.5 816.0,601.9 812.6,605.3 809.2,601.9" fill="#0000ff" stroke="#0000ff" stroke-width="1.4"/>
</g>
<text x="100.0" y="698.0" font-size="11" fill="#333" textLength="66.0" lengthAdjust="spacingAndGlyphs" >S/N vs Error</text>
<rect x="85" y="693" width="754" height="93" fill="#f0f0f0" />
<rect x="85" y="693" width="754" height="1" fill="#fff" />
<text x="92.0" y="708.5" font-size="12.5" fill="#000" textLength="43.0" lengthAdjust="spacingAndGlyphs" >Current-</text>
<text x="100.0" y="723.9" font-size="12.5" fill="#000" textLength="31.0" lengthAdjust="spacingAndGlyphs" >Frame</text>
<text x="152.0" y="708.5" font-size="12.5" fill="#000" textLength="47.0" lengthAdjust="spacingAndGlyphs" >Luminous</text>
<text x="152.0" y="723.9" font-size="12.5" fill="#000" textLength="43.0" lengthAdjust="spacingAndGlyphs" >Intensity</text>
<rect x="92" y="730" width="48" height="19" fill="#fff" />
<rect x="92" y="730" width="48" height="1" fill="#a0a0a0" />
<rect x="92" y="730" width="1" height="19" fill="#a0a0a0" />
<rect x="92" y="748" width="48" height="1" fill="#ffffff" />
<rect x="139" y="730" width="1" height="19" fill="#ffffff" />
<rect x="93" y="731" width="46" height="1" fill="#696969" />
<rect x="93" y="731" width="1" height="17" fill="#696969" />
<rect x="93" y="747" width="46" height="1" fill="#e3e3e3" />
<rect x="138" y="731" width="1" height="17" fill="#e3e3e3" />
<text x="95.0" y="744.1" font-size="12" fill="#000" textLength="27.0" lengthAdjust="spacingAndGlyphs" >466.0</text>
<rect x="148" y="730" width="56" height="19" fill="#fff" />
<rect x="148" y="730" width="56" height="1" fill="#a0a0a0" />
<rect x="148" y="730" width="1" height="19" fill="#a0a0a0" />
<rect x="148" y="748" width="56" height="1" fill="#ffffff" />
<rect x="203" y="730" width="1" height="19" fill="#ffffff" />
<rect x="149" y="731" width="54" height="1" fill="#696969" />
<rect x="149" y="731" width="1" height="17" fill="#696969" />
<rect x="149" y="747" width="54" height="1" fill="#e3e3e3" />
<rect x="202" y="731" width="1" height="17" fill="#e3e3e3" />
<text x="151.0" y="744.1" font-size="12" fill="#000" textLength="29.0" lengthAdjust="spacingAndGlyphs" >-17.2</text>
<rect x="211" y="700" width="160" height="18" fill="#e8e8e8" />
<pattern id="dith" width="2" height="2" patternUnits="userSpaceOnUse"><rect width="2" height="2" fill="#f4f4f4"/><rect width="1" height="1" fill="#dcdcdc"/><rect x="1" y="1" width="1" height="1" fill="#dcdcdc"/></pattern>
<rect x="211" y="700" width="160" height="18" fill="url(#dith)" />
<rect x="211" y="700" width="17" height="18" fill="#f0f0f0" />
<rect x="211" y="700" width="17" height="1" fill="#ffffff" />
<rect x="211" y="700" width="1" height="18" fill="#ffffff" />
<rect x="211" y="717" width="17" height="1" fill="#696969" />
<rect x="227" y="700" width="1" height="18" fill="#696969" />
<rect x="212" y="701" width="15" height="1" fill="#ffffff" />
<rect x="212" y="701" width="1" height="16" fill="#ffffff" />
<rect x="212" y="716" width="15" height="1" fill="#a0a0a0" />
<rect x="226" y="701" width="1" height="16" fill="#a0a0a0" />
<polygon points="221.25,705.5 221.25,712.5 217.75,709.0" fill="#000"/>
<rect x="285" y="700" width="17" height="18" fill="#f0f0f0" />
<rect x="285" y="700" width="17" height="1" fill="#ffffff" />
<rect x="285" y="700" width="1" height="18" fill="#ffffff" />
<rect x="285" y="717" width="17" height="1" fill="#696969" />
<rect x="301" y="700" width="1" height="18" fill="#696969" />
<rect x="286" y="701" width="15" height="1" fill="#ffffff" />
<rect x="286" y="701" width="1" height="16" fill="#ffffff" />
<rect x="286" y="716" width="15" height="1" fill="#a0a0a0" />
<rect x="300" y="701" width="1" height="16" fill="#a0a0a0" />
<rect x="354" y="700" width="17" height="18" fill="#f0f0f0" />
<rect x="354" y="700" width="17" height="1" fill="#ffffff" />
<rect x="354" y="700" width="1" height="18" fill="#ffffff" />
<rect x="354" y="717" width="17" height="1" fill="#696969" />
<rect x="370" y="700" width="1" height="18" fill="#696969" />
<rect x="355" y="701" width="15" height="1" fill="#ffffff" />
<rect x="355" y="701" width="1" height="16" fill="#ffffff" />
<rect x="355" y="716" width="15" height="1" fill="#a0a0a0" />
<rect x="369" y="701" width="1" height="16" fill="#a0a0a0" />
<polygon points="360.75,705.5 360.75,712.5 364.25,709.0" fill="#000"/>
<rect x="212" y="726" width="40" height="23" fill="#f0f0f0" />
<rect x="212" y="726" width="40" height="1" fill="#ffffff" />
<rect x="212" y="726" width="1" height="23" fill="#ffffff" />
<rect x="212" y="748" width="40" height="1" fill="#696969" />
<rect x="251" y="726" width="1" height="23" fill="#696969" />
<rect x="213" y="727" width="38" height="1" fill="#ffffff" />
<rect x="213" y="727" width="1" height="21" fill="#ffffff" />
<rect x="213" y="747" width="38" height="1" fill="#a0a0a0" />
<rect x="250" y="727" width="1" height="21" fill="#a0a0a0" />
<text x="232.2" y="742.0" font-size="12.5" fill="#000" text-anchor="middle" textLength="36.0" lengthAdjust="spacingAndGlyphs" >-10Sec</text>
<rect x="256" y="726" width="32" height="23" fill="#f0f0f0" />
<rect x="256" y="726" width="32" height="1" fill="#ffffff" />
<rect x="256" y="726" width="1" height="23" fill="#ffffff" />
<rect x="256" y="748" width="32" height="1" fill="#696969" />
<rect x="287" y="726" width="1" height="23" fill="#696969" />
<rect x="257" y="727" width="30" height="1" fill="#ffffff" />
<rect x="257" y="727" width="1" height="21" fill="#ffffff" />
<rect x="257" y="747" width="30" height="1" fill="#a0a0a0" />
<rect x="286" y="727" width="1" height="21" fill="#a0a0a0" />
<text x="272.2" y="742.0" font-size="12.5" fill="#000" text-anchor="middle" textLength="29.0" lengthAdjust="spacingAndGlyphs" >-1Sec</text>
<rect x="292" y="726" width="35" height="23" fill="#f0f0f0" />
<rect x="292" y="726" width="35" height="1" fill="#ffffff" />
<rect x="292" y="726" width="1" height="23" fill="#ffffff" />
<rect x="292" y="748" width="35" height="1" fill="#696969" />
<rect x="326" y="726" width="1" height="23" fill="#696969" />
<rect x="293" y="727" width="33" height="1" fill="#ffffff" />
<rect x="293" y="727" width="1" height="21" fill="#ffffff" />
<rect x="293" y="747" width="33" height="1" fill="#a0a0a0" />
<rect x="325" y="727" width="1" height="21" fill="#a0a0a0" />
<text x="309.3" y="742.0" font-size="12.5" fill="#000" text-anchor="middle" textLength="32.0" lengthAdjust="spacingAndGlyphs" >+1Sec</text>
<rect x="330" y="726" width="41" height="23" fill="#f0f0f0" />
<rect x="330" y="726" width="41" height="1" fill="#ffffff" />
<rect x="330" y="726" width="1" height="23" fill="#ffffff" />
<rect x="330" y="748" width="41" height="1" fill="#696969" />
<rect x="370" y="726" width="1" height="23" fill="#696969" />
<rect x="331" y="727" width="39" height="1" fill="#ffffff" />
<rect x="331" y="727" width="1" height="21" fill="#ffffff" />
<rect x="331" y="747" width="39" height="1" fill="#a0a0a0" />
<rect x="369" y="727" width="1" height="21" fill="#a0a0a0" />
<text x="350.5" y="742.0" font-size="12.5" fill="#000" text-anchor="middle" textLength="38.0" lengthAdjust="spacingAndGlyphs" >+10Sec</text>
<text x="377.5" y="716.0" font-size="12.5" fill="#000" textLength="28.0" lengthAdjust="spacingAndGlyphs" >Scale</text>
<text x="380.7" y="740.3" font-size="12.5" fill="#000" textLength="34.0" lengthAdjust="spacingAndGlyphs" >Radius</text>
<rect x="416" y="698" width="22" height="19" fill="#fff" />
<rect x="416" y="698" width="22" height="1" fill="#a0a0a0" />
<rect x="416" y="698" width="1" height="19" fill="#a0a0a0" />
<rect x="416" y="716" width="22" height="1" fill="#ffffff" />
<rect x="437" y="698" width="1" height="19" fill="#ffffff" />
<rect x="417" y="699" width="20" height="1" fill="#696969" />
<rect x="417" y="699" width="1" height="17" fill="#696969" />
<rect x="417" y="715" width="20" height="1" fill="#e3e3e3" />
<rect x="436" y="699" width="1" height="17" fill="#e3e3e3" />
<text x="419.5" y="712.1" font-size="12" fill="#000" >4</text>
<rect x="441" y="697" width="16" height="11" fill="#f0f0f0" />
<rect x="441" y="697" width="16" height="1" fill="#ffffff" />
<rect x="441" y="697" width="1" height="11" fill="#ffffff" />
<rect x="441" y="707" width="16" height="1" fill="#696969" />
<rect x="456" y="697" width="1" height="11" fill="#696969" />
<rect x="442" y="698" width="14" height="1" fill="#ffffff" />
<rect x="442" y="698" width="1" height="9" fill="#ffffff" />
<rect x="442" y="706" width="14" height="1" fill="#a0a0a0" />
<rect x="455" y="698" width="1" height="9" fill="#a0a0a0" />
<polygon points="445.6,704.25 451.6,704.25 448.6,701.25" fill="#000"/>
<rect x="441" y="709" width="16" height="11" fill="#f0f0f0" />
<rect x="441" y="709" width="16" height="1" fill="#ffffff" />
<rect x="441" y="709" width="1" height="11" fill="#ffffff" />
<rect x="441" y="719" width="16" height="1" fill="#696969" />
<rect x="456" y="709" width="1" height="11" fill="#696969" />
<rect x="442" y="710" width="14" height="1" fill="#ffffff" />
<rect x="442" y="710" width="1" height="9" fill="#ffffff" />
<rect x="442" y="718" width="14" height="1" fill="#a0a0a0" />
<rect x="455" y="710" width="1" height="9" fill="#a0a0a0" />
<polygon points="445.6,713.25 451.6,713.25 448.6,716.25" fill="#000"/>
<rect x="416" y="730" width="22" height="18" fill="#fff" />
<rect x="416" y="730" width="22" height="1" fill="#a0a0a0" />
<rect x="416" y="730" width="1" height="18" fill="#a0a0a0" />
<rect x="416" y="747" width="22" height="1" fill="#ffffff" />
<rect x="437" y="730" width="1" height="18" fill="#ffffff" />
<rect x="417" y="731" width="20" height="1" fill="#696969" />
<rect x="417" y="731" width="1" height="16" fill="#696969" />
<rect x="417" y="746" width="20" height="1" fill="#e3e3e3" />
<rect x="436" y="731" width="1" height="16" fill="#e3e3e3" />
<text x="419.5" y="743.6" font-size="12" fill="#000" >3</text>
<rect x="441" y="729" width="16" height="11" fill="#f0f0f0" />
<rect x="441" y="729" width="16" height="1" fill="#ffffff" />
<rect x="441" y="729" width="1" height="11" fill="#ffffff" />
<rect x="441" y="739" width="16" height="1" fill="#696969" />
<rect x="456" y="729" width="1" height="11" fill="#696969" />
<rect x="442" y="730" width="14" height="1" fill="#ffffff" />
<rect x="442" y="730" width="1" height="9" fill="#ffffff" />
<rect x="442" y="738" width="14" height="1" fill="#a0a0a0" />
<rect x="455" y="730" width="1" height="9" fill="#a0a0a0" />
<polygon points="445.6,736.25 451.6,736.25 448.6,733.25" fill="#000"/>
<rect x="441" y="741" width="16" height="11" fill="#f0f0f0" />
<rect x="441" y="741" width="16" height="1" fill="#ffffff" />
<rect x="441" y="741" width="1" height="11" fill="#ffffff" />
<rect x="441" y="751" width="16" height="1" fill="#696969" />
<rect x="456" y="741" width="1" height="11" fill="#696969" />
<rect x="442" y="742" width="14" height="1" fill="#ffffff" />
<rect x="442" y="742" width="1" height="9" fill="#ffffff" />
<rect x="442" y="750" width="14" height="1" fill="#a0a0a0" />
<rect x="455" y="742" width="1" height="9" fill="#a0a0a0" />
<polygon points="445.6,745.0 451.6,745.0 448.6,748.0" fill="#000"/>
<rect x="92" y="759" width="13" height="13" fill="#fff" />
<rect x="92" y="759" width="13" height="1" fill="#a0a0a0" />
<rect x="92" y="759" width="1" height="13" fill="#a0a0a0" />
<rect x="92" y="771" width="13" height="1" fill="#ffffff" />
<rect x="104" y="759" width="1" height="13" fill="#ffffff" />
<rect x="93" y="760" width="11" height="1" fill="#696969" />
<rect x="93" y="760" width="1" height="11" fill="#696969" />
<rect x="93" y="770" width="11" height="1" fill="#e3e3e3" />
<rect x="103" y="760" width="1" height="11" fill="#e3e3e3" />
<path d="M95,765.5 L97.46,768.5 L102,762" fill="none" stroke="#000" stroke-width="2"/>
<text x="109.5" y="769.3" font-size="12" fill="#000" textLength="146.5" lengthAdjust="spacingAndGlyphs" >Show Image of Clicked point</text>
<rect x="92" y="775" width="13" height="13" fill="#fff" />
<rect x="92" y="775" width="13" height="1" fill="#a0a0a0" />
<rect x="92" y="775" width="1" height="13" fill="#a0a0a0" />
<rect x="92" y="787" width="13" height="1" fill="#ffffff" />
<rect x="104" y="775" width="1" height="13" fill="#ffffff" />
<rect x="93" y="776" width="11" height="1" fill="#696969" />
<rect x="93" y="776" width="1" height="11" fill="#696969" />
<rect x="93" y="786" width="11" height="1" fill="#e3e3e3" />
<rect x="103" y="776" width="1" height="11" fill="#e3e3e3" />
<text x="109.5" y="785.3" font-size="12" fill="#000" textLength="147.0" lengthAdjust="spacingAndGlyphs" >Reproduce Aperture Position</text>
<rect x="266" y="757" width="72" height="24" fill="#f0f0f0" />
<rect x="266" y="757" width="72" height="1" fill="#ffffff" />
<rect x="266" y="757" width="1" height="24" fill="#ffffff" />
<rect x="266" y="780" width="72" height="1" fill="#696969" />
<rect x="337" y="757" width="1" height="24" fill="#696969" />
<rect x="267" y="758" width="70" height="1" fill="#ffffff" />
<rect x="267" y="758" width="1" height="22" fill="#ffffff" />
<rect x="267" y="779" width="70" height="1" fill="#a0a0a0" />
<rect x="336" y="758" width="1" height="22" fill="#a0a0a0" />
<text x="302.5" y="773.7" font-size="12.5" fill="#000" text-anchor="middle" textLength="58.0" lengthAdjust="spacingAndGlyphs" >Save Image</text>
<rect x="344" y="758" width="118" height="23" fill="#f0f0f0" />
<rect x="344" y="758" width="118" height="1" fill="#ffffff" />
<rect x="344" y="758" width="1" height="23" fill="#ffffff" />
<rect x="344" y="780" width="118" height="1" fill="#696969" />
<rect x="461" y="758" width="1" height="23" fill="#696969" />
<rect x="345" y="759" width="116" height="1" fill="#ffffff" />
<rect x="345" y="759" width="1" height="21" fill="#ffffff" />
<rect x="345" y="779" width="116" height="1" fill="#a0a0a0" />
<rect x="460" y="759" width="1" height="21" fill="#a0a0a0" />
<text x="402.8" y="773.7" font-size="12.5" fill="#000" text-anchor="middle" textLength="90.0" lengthAdjust="spacingAndGlyphs" >Copy to ClipBoard</text>
<rect x="462" y="700" width="49" height="79" fill="none" stroke="#a0a0a0" stroke-width="1" shape-rendering="crispEdges" transform="translate(0.5,0.5)"/>
<rect x="463" y="701" width="49" height="79" fill="none" stroke="#ffffff" stroke-width="1" shape-rendering="crispEdges" transform="translate(0.5,0.5)" stroke-opacity="0.9"/>
<rect x="468" y="698" width="38" height="5" fill="#f0f0f0" />
<text x="470.0" y="704.5" font-size="12.5" fill="#000" textLength="34.0" lengthAdjust="spacingAndGlyphs" >Y Axis</text>
<text x="467.0" y="716.7" font-size="12.5" fill="#000" textLength="39.0" lengthAdjust="spacingAndGlyphs" >Min Max</text>
<rect x="468" y="718" width="16" height="16" fill="#f0f0f0" />
<rect x="468" y="718" width="16" height="1" fill="#ffffff" />
<rect x="468" y="718" width="1" height="16" fill="#ffffff" />
<rect x="468" y="733" width="16" height="1" fill="#696969" />
<rect x="483" y="718" width="1" height="16" fill="#696969" />
<rect x="469" y="719" width="14" height="1" fill="#ffffff" />
<rect x="469" y="719" width="1" height="14" fill="#ffffff" />
<rect x="469" y="732" width="14" height="1" fill="#a0a0a0" />
<rect x="482" y="719" width="1" height="14" fill="#a0a0a0" />
<polygon points="471.6,727.75 479.6,727.75 475.6,723.75" fill="#000"/>
<rect x="468" y="736" width="16" height="18" fill="#f0f0f0" />
<rect x="468" y="736" width="16" height="1" fill="#ffffff" />
<rect x="468" y="736" width="1" height="18" fill="#ffffff" />
<rect x="468" y="753" width="16" height="1" fill="#696969" />
<rect x="483" y="736" width="1" height="18" fill="#696969" />
<rect x="469" y="737" width="14" height="1" fill="#ffffff" />
<rect x="469" y="737" width="1" height="16" fill="#ffffff" />
<rect x="469" y="752" width="14" height="1" fill="#a0a0a0" />
<rect x="482" y="737" width="1" height="16" fill="#a0a0a0" />
<rect x="468" y="758" width="16" height="16" fill="#f0f0f0" />
<rect x="468" y="758" width="16" height="1" fill="#ffffff" />
<rect x="468" y="758" width="1" height="16" fill="#ffffff" />
<rect x="468" y="773" width="16" height="1" fill="#696969" />
<rect x="483" y="758" width="1" height="16" fill="#696969" />
<rect x="469" y="759" width="14" height="1" fill="#ffffff" />
<rect x="469" y="759" width="1" height="14" fill="#ffffff" />
<rect x="469" y="772" width="14" height="1" fill="#a0a0a0" />
<rect x="482" y="759" width="1" height="14" fill="#a0a0a0" />
<polygon points="471.6,764.2 479.6,764.2 475.6,768.2" fill="#000"/>
<rect x="490" y="718" width="17" height="16" fill="#f0f0f0" />
<rect x="490" y="718" width="17" height="1" fill="#ffffff" />
<rect x="490" y="718" width="1" height="16" fill="#ffffff" />
<rect x="490" y="733" width="17" height="1" fill="#696969" />
<rect x="506" y="718" width="1" height="16" fill="#696969" />
<rect x="491" y="719" width="15" height="1" fill="#ffffff" />
<rect x="491" y="719" width="1" height="14" fill="#ffffff" />
<rect x="491" y="732" width="15" height="1" fill="#a0a0a0" />
<rect x="505" y="719" width="1" height="14" fill="#a0a0a0" />
<polygon points="494.1,727.75 502.1,727.75 498.1,723.75" fill="#000"/>
<rect x="490" y="736" width="17" height="18" fill="#f0f0f0" />
<rect x="490" y="736" width="17" height="1" fill="#ffffff" />
<rect x="490" y="736" width="1" height="18" fill="#ffffff" />
<rect x="490" y="753" width="17" height="1" fill="#696969" />
<rect x="506" y="736" width="1" height="18" fill="#696969" />
<rect x="491" y="737" width="15" height="1" fill="#ffffff" />
<rect x="491" y="737" width="1" height="16" fill="#ffffff" />
<rect x="491" y="752" width="15" height="1" fill="#a0a0a0" />
<rect x="505" y="737" width="1" height="16" fill="#a0a0a0" />
<rect x="490" y="758" width="17" height="16" fill="#f0f0f0" />
<rect x="490" y="758" width="17" height="1" fill="#ffffff" />
<rect x="490" y="758" width="1" height="16" fill="#ffffff" />
<rect x="490" y="773" width="17" height="1" fill="#696969" />
<rect x="506" y="758" width="1" height="16" fill="#696969" />
<rect x="491" y="759" width="15" height="1" fill="#ffffff" />
<rect x="491" y="759" width="1" height="14" fill="#ffffff" />
<rect x="491" y="772" width="15" height="1" fill="#a0a0a0" />
<rect x="505" y="759" width="1" height="14" fill="#a0a0a0" />
<polygon points="494.1,764.2 502.1,764.2 498.1,768.2" fill="#000"/>
<rect x="514" y="700" width="60" height="51" fill="none" stroke="#a0a0a0" stroke-width="1" shape-rendering="crispEdges" transform="translate(0.5,0.5)"/>
<rect x="515" y="701" width="60" height="51" fill="none" stroke="#ffffff" stroke-width="1" shape-rendering="crispEdges" transform="translate(0.5,0.5)" stroke-opacity="0.9"/>
<rect x="520" y="698" width="25" height="5" fill="#f0f0f0" />
<text x="522.0" y="704.5" font-size="12.5" fill="#000" textLength="21.0" lengthAdjust="spacingAndGlyphs" >Line</text>
<rect x="523" y="708" width="12" height="12" fill="#fff" />
<rect x="523" y="708" width="12" height="1" fill="#a0a0a0" />
<rect x="523" y="708" width="1" height="12" fill="#a0a0a0" />
<rect x="523" y="719" width="12" height="1" fill="#ffffff" />
<rect x="534" y="708" width="1" height="12" fill="#ffffff" />
<rect x="524" y="709" width="10" height="1" fill="#696969" />
<rect x="524" y="709" width="1" height="10" fill="#696969" />
<rect x="524" y="718" width="10" height="1" fill="#e3e3e3" />
<rect x="533" y="709" width="1" height="10" fill="#e3e3e3" />
<path d="M526,714.0 L528.04,716.5 L532,711" fill="none" stroke="#000" stroke-width="2"/>
<text x="540.8" y="717.5" font-size="12.5" fill="#000" textLength="22.0" lengthAdjust="spacingAndGlyphs" >Axis</text>
<rect x="523" y="723" width="12" height="12" fill="#fff" />
<rect x="523" y="723" width="12" height="1" fill="#a0a0a0" />
<rect x="523" y="723" width="1" height="12" fill="#a0a0a0" />
<rect x="523" y="734" width="12" height="1" fill="#ffffff" />
<rect x="534" y="723" width="1" height="12" fill="#ffffff" />
<rect x="524" y="724" width="10" height="1" fill="#696969" />
<rect x="524" y="724" width="1" height="10" fill="#696969" />
<rect x="524" y="733" width="10" height="1" fill="#e3e3e3" />
<rect x="533" y="724" width="1" height="10" fill="#e3e3e3" />
<path d="M526,729.0 L528.04,731.5 L532,726" fill="none" stroke="#000" stroke-width="2"/>
<text x="540.8" y="732.5" font-size="12.5" fill="#000" textLength="23.0" lengthAdjust="spacingAndGlyphs" >Data</text>
<rect x="523" y="734" width="45" height="14" fill="#f0f0f0" />
<rect x="523" y="734" width="45" height="1" fill="#ffffff" />
<rect x="523" y="734" width="1" height="14" fill="#ffffff" />
<rect x="523" y="747" width="45" height="1" fill="#696969" />
<rect x="567" y="734" width="1" height="14" fill="#696969" />
<rect x="524" y="735" width="43" height="1" fill="#ffffff" />
<rect x="524" y="735" width="1" height="12" fill="#ffffff" />
<rect x="524" y="746" width="43" height="1" fill="#a0a0a0" />
<rect x="566" y="735" width="1" height="12" fill="#a0a0a0" />
<text x="545.2" y="746.0" font-size="12.5" fill="#000" text-anchor="middle" textLength="33.0" lengthAdjust="spacingAndGlyphs" >Hilight</text>
<rect x="515" y="757" width="63" height="27" fill="#f0f0f0" />
<rect x="515" y="757" width="63" height="1" fill="#ffffff" />
<rect x="515" y="757" width="1" height="27" fill="#ffffff" />
<rect x="515" y="783" width="63" height="1" fill="#696969" />
<rect x="577" y="757" width="1" height="27" fill="#696969" />
<rect x="516" y="758" width="61" height="1" fill="#ffffff" />
<rect x="516" y="758" width="1" height="25" fill="#ffffff" />
<rect x="516" y="782" width="61" height="1" fill="#a0a0a0" />
<rect x="576" y="758" width="1" height="25" fill="#a0a0a0" />
<text x="546.6" y="775.1" font-size="12.5" fill="#000" text-anchor="middle" textLength="54.0" lengthAdjust="spacingAndGlyphs" >[3D] Image</text>
<rect x="578" y="700" width="55" height="51" fill="none" stroke="#a0a0a0" stroke-width="1" shape-rendering="crispEdges" transform="translate(0.5,0.5)"/>
<rect x="579" y="701" width="55" height="51" fill="none" stroke="#ffffff" stroke-width="1" shape-rendering="crispEdges" transform="translate(0.5,0.5)" stroke-opacity="0.9"/>
<rect x="584" y="698" width="33" height="5" fill="#f0f0f0" />
<text x="586.0" y="704.5" font-size="12.5" fill="#000" textLength="29.0" lengthAdjust="spacingAndGlyphs" >Width</text>
<circle cx="592.5" cy="718" r="5" fill="#fff" stroke="#a0a0a0" stroke-width="1"/>
<path d="M588.0,718 A4.5,4.5 0 0 1 592.5,713.5" fill="none" stroke="#696969" stroke-width="1.5"/>
<circle cx="592.5" cy="718" r="2" fill="#000"/>
<text x="604.5" y="722.5" font-size="12.5" fill="#000" textLength="19.0" lengthAdjust="spacingAndGlyphs" >Part</text>
<circle cx="592.5" cy="739" r="5" fill="#fff" stroke="#a0a0a0" stroke-width="1"/>
<path d="M588.0,739 A4.5,4.5 0 0 1 592.5,734.5" fill="none" stroke="#696969" stroke-width="1.5"/>
<text x="604.5" y="743.5" font-size="12.5" fill="#000" textLength="28.0" lengthAdjust="spacingAndGlyphs" >Entire</text>
<rect x="640" y="697" width="143" height="18" fill="#f0f0f0" />
<rect x="640" y="697" width="143" height="1" fill="#ffffff" />
<rect x="640" y="697" width="1" height="18" fill="#ffffff" />
<rect x="640" y="714" width="143" height="1" fill="#696969" />
<rect x="782" y="697" width="1" height="18" fill="#696969" />
<rect x="641" y="698" width="141" height="1" fill="#ffffff" />
<rect x="641" y="698" width="1" height="16" fill="#ffffff" />
<rect x="641" y="713" width="141" height="1" fill="#a0a0a0" />
<rect x="781" y="698" width="1" height="16" fill="#a0a0a0" />
<text x="711.5" y="710.5" font-size="12.5" fill="#000" text-anchor="middle" textLength="128.0" lengthAdjust="spacingAndGlyphs" >Correction for absorption</text>
<rect x="640" y="717" width="103" height="17" fill="#f0f0f0" />
<rect x="640" y="717" width="103" height="1" fill="#ffffff" />
<rect x="640" y="717" width="1" height="17" fill="#ffffff" />
<rect x="640" y="733" width="103" height="1" fill="#696969" />
<rect x="742" y="717" width="1" height="17" fill="#696969" />
<rect x="641" y="718" width="101" height="1" fill="#ffffff" />
<rect x="641" y="718" width="1" height="15" fill="#ffffff" />
<rect x="641" y="732" width="101" height="1" fill="#a0a0a0" />
<rect x="741" y="718" width="1" height="15" fill="#a0a0a0" />
<text x="691.5" y="730.4" font-size="12.5" fill="#000" text-anchor="middle" textLength="83.0" lengthAdjust="spacingAndGlyphs" >Noise Reduction</text>
<rect x="746" y="717" width="37" height="17" fill="#f0f0f0" />
<rect x="746" y="717" width="37" height="1" fill="#ffffff" />
<rect x="746" y="717" width="1" height="17" fill="#ffffff" />
<rect x="746" y="733" width="37" height="1" fill="#696969" />
<rect x="782" y="717" width="1" height="17" fill="#696969" />
<rect x="747" y="718" width="35" height="1" fill="#ffffff" />
<rect x="747" y="718" width="1" height="15" fill="#ffffff" />
<rect x="747" y="732" width="35" height="1" fill="#a0a0a0" />
<rect x="781" y="718" width="1" height="15" fill="#a0a0a0" />
<text x="764.5" y="730.4" font-size="12.5" fill="#000" text-anchor="middle" textLength="29.0" lengthAdjust="spacingAndGlyphs" >Reset</text>
<rect x="796" y="697" width="36" height="25" fill="#f0f0f0" />
<rect x="796" y="697" width="36" height="1" fill="#ffffff" />
<rect x="796" y="697" width="1" height="25" fill="#ffffff" />
<rect x="796" y="721" width="36" height="1" fill="#696969" />
<rect x="831" y="697" width="1" height="25" fill="#696969" />
<rect x="797" y="698" width="34" height="1" fill="#ffffff" />
<rect x="797" y="698" width="1" height="23" fill="#ffffff" />
<rect x="797" y="720" width="34" height="1" fill="#a0a0a0" />
<rect x="830" y="698" width="1" height="23" fill="#a0a0a0" />
<text x="814.0" y="714.0" font-size="12.5" fill="#000" text-anchor="middle" textLength="27.0" lengthAdjust="spacingAndGlyphs" >close</text>
<rect x="639" y="739" width="11" height="11" fill="#fff" />
<rect x="639" y="739" width="11" height="1" fill="#a0a0a0" />
<rect x="639" y="739" width="1" height="11" fill="#a0a0a0" />
<rect x="639" y="749" width="11" height="1" fill="#ffffff" />
<rect x="649" y="739" width="1" height="11" fill="#ffffff" />
<rect x="640" y="740" width="9" height="1" fill="#696969" />
<rect x="640" y="740" width="1" height="9" fill="#696969" />
<rect x="640" y="748" width="9" height="1" fill="#e3e3e3" />
<rect x="648" y="740" width="1" height="9" fill="#e3e3e3" />
<path d="M642,744.5 L643.62,746.5 L647,742" fill="none" stroke="#000" stroke-width="2"/>
<text x="656.3" y="748.1" font-size="12.5" fill="#000" textLength="52.0" lengthAdjust="spacingAndGlyphs" >Information</text>
<rect x="789" y="735" width="11" height="11" fill="#fff" />
<rect x="789" y="735" width="11" height="1" fill="#a0a0a0" />
<rect x="789" y="735" width="1" height="11" fill="#a0a0a0" />
<rect x="789" y="745" width="11" height="1" fill="#ffffff" />
<rect x="799" y="735" width="1" height="11" fill="#ffffff" />
<rect x="790" y="736" width="9" height="1" fill="#696969" />
<rect x="790" y="736" width="1" height="9" fill="#696969" />
<rect x="790" y="744" width="9" height="1" fill="#e3e3e3" />
<rect x="798" y="736" width="1" height="9" fill="#e3e3e3" />
<path d="M792,740.5 L793.62,742.5 L797,738" fill="none" stroke="#000" stroke-width="2"/>
<text x="805.3" y="745.5" font-size="12.5" fill="#000" textLength="11.0" lengthAdjust="spacingAndGlyphs" >ID</text>
<rect x="628" y="757" width="105" height="27" fill="#f0f0f0" />
<rect x="628" y="757" width="105" height="1" fill="#ffffff" />
<rect x="628" y="757" width="1" height="27" fill="#ffffff" />
<rect x="628" y="783" width="105" height="1" fill="#696969" />
<rect x="732" y="757" width="1" height="27" fill="#696969" />
<rect x="629" y="758" width="103" height="1" fill="#ffffff" />
<rect x="629" y="758" width="1" height="25" fill="#ffffff" />
<rect x="629" y="782" width="103" height="1" fill="#a0a0a0" />
<rect x="731" y="758" width="1" height="25" fill="#a0a0a0" />
<text x="680.5" y="775.7" font-size="14" fill="#0a1a50" font-weight="bold" text-anchor="middle" textLength="80.0" lengthAdjust="spacingAndGlyphs" >Make Report</text>
<rect x="738" y="748" width="94" height="35" fill="none" stroke="#a0a0a0" stroke-width="1" shape-rendering="crispEdges" transform="translate(0.5,0.5)"/>
<rect x="739" y="749" width="94" height="35" fill="none" stroke="#ffffff" stroke-width="1" shape-rendering="crispEdges" transform="translate(0.5,0.5)" stroke-opacity="0.9"/>
<rect x="744" y="746" width="36" height="5" fill="#f0f0f0" />
<text x="746.0" y="752.5" font-size="12.5" fill="#000" textLength="32.0" lengthAdjust="spacingAndGlyphs" >Object</text>
<rect x="744.3" y="759" width="18.700000000000045" height="16.799999999999955" fill="#e4e4e4" />
<rect x="744" y="759" width="19" height="17" fill="#ececec" />
<rect x="744" y="759" width="19" height="1" fill="#696969" />
<rect x="744" y="759" width="1" height="17" fill="#696969" />
<rect x="744" y="775" width="19" height="1" fill="#fff" />
<rect x="762" y="759" width="1" height="17" fill="#fff" />
<rect x="745" y="760" width="17" height="1" fill="#a0a0a0" />
<rect x="745" y="760" width="1" height="15" fill="#a0a0a0" />
<rect x="745" y="774" width="17" height="1" fill="#fff" />
<rect x="761" y="760" width="1" height="15" fill="#fff" />
<text x="753.6" y="771.7" font-size="12" fill="#b0b0b0" text-anchor="middle" >A</text>
<rect x="766" y="759" width="20" height="17" fill="#f0f0f0" />
<rect x="766" y="759" width="20" height="1" fill="#ffffff" />
<rect x="766" y="759" width="1" height="17" fill="#ffffff" />
<rect x="766" y="775" width="20" height="1" fill="#696969" />
<rect x="785" y="759" width="1" height="17" fill="#696969" />
<rect x="767" y="760" width="18" height="1" fill="#ffffff" />
<rect x="767" y="760" width="1" height="15" fill="#ffffff" />
<rect x="767" y="774" width="18" height="1" fill="#a0a0a0" />
<rect x="784" y="760" width="1" height="15" fill="#a0a0a0" />
<text x="775.9" y="771.9" font-size="12.5" fill="#000" text-anchor="middle" >B</text>
<rect x="788" y="759" width="20" height="17" fill="#f0f0f0" />
<rect x="788" y="759" width="20" height="1" fill="#ffffff" />
<rect x="788" y="759" width="1" height="17" fill="#ffffff" />
<rect x="788" y="775" width="20" height="1" fill="#696969" />
<rect x="807" y="759" width="1" height="17" fill="#696969" />
<rect x="789" y="760" width="18" height="1" fill="#ffffff" />
<rect x="789" y="760" width="1" height="15" fill="#ffffff" />
<rect x="789" y="774" width="18" height="1" fill="#a0a0a0" />
<rect x="806" y="760" width="1" height="15" fill="#a0a0a0" />
<text x="797.8" y="771.9" font-size="12.5" fill="#000" text-anchor="middle" >C</text>
<rect x="810" y="759" width="17" height="17" fill="#f0f0f0" />
<rect x="810" y="759" width="17" height="1" fill="#ffffff" />
<rect x="810" y="759" width="1" height="17" fill="#ffffff" />
<rect x="810" y="775" width="17" height="1" fill="#696969" />
<rect x="826" y="759" width="1" height="17" fill="#696969" />
<rect x="811" y="760" width="15" height="1" fill="#ffffff" />
<rect x="811" y="760" width="1" height="15" fill="#ffffff" />
<rect x="811" y="774" width="15" height="1" fill="#a0a0a0" />
<rect x="825" y="760" width="1" height="15" fill="#a0a0a0" />
<text x="818.5" y="771.9" font-size="12.5" fill="#000" text-anchor="middle" >L</text>
</g>
<rect x="84.5" y="79.5" width="754" height="706" rx="8" fill="none" stroke="#9a9a9a" stroke-opacity="0.6"/>
<rect x="846" y="17" width="188" height="798" rx="8" fill="#000" opacity="0.45" filter="url(#shadow)"/>
<clipPath id="cfres"><rect x="844" y="9" width="192" height="796" rx="8"/></clipPath>
<g clip-path="url(#cfres)">
<rect x="844" y="9" width="192" height="796" fill="#f0f0f0" />
<rect x="844" y="9" width="192" height="25" fill="#f3f3f3" />
<g transform="translate(847,13) scale(1.0)"><path d="M0.5,0.5 H16 V16 H3 L0.5,14 Z" fill="#0000c0"/><rect x="6" y="0.5" width="10" height="9" fill="#000090"/><rect x="0.5" y="9.3" width="15.5" height="1.6" fill="#ffff00"/><rect x="4.2" y="1.5" width="2" height="14" fill="#ffff00"/><polygon points="5.2,5.5 8,10 5.2,14.5 2.4,10" fill="#ffff00"/><rect x="1" y="0.5" width="2" height="1.5" fill="#000"/><rect x="3" y="15" width="6" height="1.2" fill="#000"/><rect x="1.5" y="2.5" width="1" height="1" fill="#dde"/><rect x="11" y="2.2" width="1" height="1" fill="#fff"/><rect x="13" y="2.2" width="1" height="1" fill="#fff"/><rect x="15" y="3" width="1" height="1" fill="#fff"/><rect x="9" y="14" width="1" height="1" fill="#fff"/><rect x="11" y="14" width="1" height="1" fill="#fff"/><rect x="13" y="13.5" width="1" height="1" fill="#fff"/><rect x="15" y="14" width="1" height="1" fill="#fff"/></g>
<text x="868.3" y="26.2" font-size="12.5" fill="#8a8a8a" textLength="25.0" lengthAdjust="spacingAndGlyphs" >Fre...</text>
<line x1="922" y1="21.5" x2="932" y2="21.5" stroke="#8a8a8a" stroke-width="1"/>
<rect x="962.5" y="17.0" width="9" height="9" rx="1.5" fill="none" stroke="#8a8a8a" stroke-width="1"/>
<path d="M1008,16.5 L1018,26.5 M1018,16.5 L1008,26.5" stroke="#8a8a8a" stroke-width="1"/>
<rect x="845" y="40" width="182" height="50" fill="none" stroke="#a0a0a0" stroke-width="1" shape-rendering="crispEdges" transform="translate(0.5,0.5)"/>
<rect x="846" y="41" width="182" height="50" fill="none" stroke="#ffffff" stroke-width="1" shape-rendering="crispEdges" transform="translate(0.5,0.5)" stroke-opacity="0.9"/>
<rect x="850.5" y="38" width="89.0" height="5" fill="#f0f0f0" />
<text x="852.5" y="44.7" font-size="13" fill="#000" font-weight="bold" textLength="85.0" lengthAdjust="spacingAndGlyphs" >Spectral Effect</text>
<text x="852.5" y="61.2" font-size="12.5" fill="#000" textLength="21.0" lengthAdjust="spacingAndGlyphs" >CCD</text>
<rect x="885" y="47" width="86" height="18" fill="#fff" />
<rect x="885" y="47" width="86" height="1" fill="#a0a0a0" />
<rect x="885" y="47" width="1" height="18" fill="#a0a0a0" />
<rect x="885" y="64" width="86" height="1" fill="#ffffff" />
<rect x="970" y="47" width="1" height="18" fill="#ffffff" />
<rect x="886" y="48" width="84" height="1" fill="#696969" />
<rect x="886" y="48" width="1" height="16" fill="#696969" />
<rect x="886" y="63" width="84" height="1" fill="#e3e3e3" />
<rect x="969" y="48" width="1" height="16" fill="#e3e3e3" />
<text x="887.7" y="60.5" font-size="12.5" fill="#000" textLength="38.0" lengthAdjust="spacingAndGlyphs" >IMX290</text>
<rect x="954" y="49" width="15" height="14" fill="#f0f0f0" />
<rect x="954" y="49" width="15" height="1" fill="#ffffff" />
<rect x="954" y="49" width="1" height="14" fill="#ffffff" />
<rect x="954" y="62" width="15" height="1" fill="#696969" />
<rect x="968" y="49" width="1" height="14" fill="#696969" />
<rect x="955" y="50" width="13" height="1" fill="#ffffff" />
<rect x="955" y="50" width="1" height="12" fill="#ffffff" />
<rect x="955" y="61" width="13" height="1" fill="#a0a0a0" />
<rect x="967" y="50" width="1" height="12" fill="#a0a0a0" />
<polygon points="957.5,54.0 965.5,54.0 961.5,58.0" fill="#000"/>
<rect x="974" y="47" width="47" height="15" fill="#f0f0f0" />
<rect x="974" y="47" width="47" height="1" fill="#ffffff" />
<rect x="974" y="47" width="1" height="15" fill="#ffffff" />
<rect x="974" y="61" width="47" height="1" fill="#696969" />
<rect x="1020" y="47" width="1" height="15" fill="#696969" />
<rect x="975" y="48" width="45" height="1" fill="#ffffff" />
<rect x="975" y="48" width="1" height="13" fill="#ffffff" />
<rect x="975" y="60" width="45" height="1" fill="#a0a0a0" />
<rect x="1019" y="48" width="1" height="13" fill="#a0a0a0" />
<text x="997.4" y="59.1" font-size="12.5" fill="#000" text-anchor="middle" textLength="29.0" lengthAdjust="spacingAndGlyphs" >Graph</text>
<text x="852.5" y="85.3" font-size="12.5" fill="#000" textLength="19.0" lengthAdjust="spacingAndGlyphs" >Star</text>
<rect x="885" y="70" width="46" height="18" fill="#fff" />
<rect x="885" y="70" width="46" height="1" fill="#a0a0a0" />
<rect x="885" y="70" width="1" height="18" fill="#a0a0a0" />
<rect x="885" y="87" width="46" height="1" fill="#ffffff" />
<rect x="930" y="70" width="1" height="18" fill="#ffffff" />
<rect x="886" y="71" width="44" height="1" fill="#696969" />
<rect x="886" y="71" width="1" height="16" fill="#696969" />
<rect x="886" y="86" width="44" height="1" fill="#e3e3e3" />
<rect x="929" y="71" width="1" height="16" fill="#e3e3e3" />
<text x="887.7" y="83.5" font-size="12.5" fill="#000" textLength="14.0" lengthAdjust="spacingAndGlyphs" >A4</text>
<rect x="914" y="72" width="15" height="14" fill="#f0f0f0" />
<rect x="914" y="72" width="15" height="1" fill="#ffffff" />
<rect x="914" y="72" width="1" height="14" fill="#ffffff" />
<rect x="914" y="85" width="15" height="1" fill="#696969" />
<rect x="928" y="72" width="1" height="14" fill="#696969" />
<rect x="915" y="73" width="13" height="1" fill="#ffffff" />
<rect x="915" y="73" width="1" height="12" fill="#ffffff" />
<rect x="915" y="84" width="13" height="1" fill="#a0a0a0" />
<rect x="927" y="73" width="1" height="12" fill="#a0a0a0" />
<polygon points="917.75,77.0 925.75,77.0 921.75,81.0" fill="#000"/>
<text x="934.7" y="86.0" font-size="12.5" fill="#000" textLength="9.0" lengthAdjust="spacingAndGlyphs" >or</text>
<text x="949.0" y="85.5" font-size="12.5" fill="#000" textLength="17.0" lengthAdjust="spacingAndGlyphs" >B-V</text>
<rect x="972" y="71" width="48" height="19" fill="#fff" />
<rect x="972" y="71" width="48" height="1" fill="#a0a0a0" />
<rect x="972" y="71" width="1" height="19" fill="#a0a0a0" />
<rect x="972" y="89" width="48" height="1" fill="#ffffff" />
<rect x="1019" y="71" width="1" height="19" fill="#ffffff" />
<rect x="973" y="72" width="46" height="1" fill="#696969" />
<rect x="973" y="72" width="1" height="17" fill="#696969" />
<rect x="973" y="88" width="46" height="1" fill="#e3e3e3" />
<rect x="1018" y="72" width="1" height="17" fill="#e3e3e3" />
<text x="975.5" y="84.8" font-size="12.5" fill="#000" textLength="21.0" lengthAdjust="spacingAndGlyphs" >0.22</text>
<rect x="845" y="97" width="182" height="45" fill="none" stroke="#a0a0a0" stroke-width="1" shape-rendering="crispEdges" transform="translate(0.5,0.5)"/>
<rect x="846" y="98" width="182" height="45" fill="none" stroke="#ffffff" stroke-width="1" shape-rendering="crispEdges" transform="translate(0.5,0.5)" stroke-opacity="0.9"/>
<rect x="850.5" y="95" width="112.0" height="5" fill="#f0f0f0" />
<text x="852.5" y="101.7" font-size="13" fill="#000" font-weight="bold" textLength="108.0" lengthAdjust="spacingAndGlyphs" >Object's Movement</text>
<text x="852.5" y="115.3" font-size="12.5" fill="#000" textLength="40.0" lengthAdjust="spacingAndGlyphs" >Distance</text>
<text x="938.0" y="115.3" font-size="12.5" fill="#000" textLength="86.0" lengthAdjust="spacingAndGlyphs" >Shadow's Velocity</text>
<rect x="852" y="118" width="71" height="20" fill="#fff" />
<rect x="852" y="118" width="71" height="1" fill="#a0a0a0" />
<rect x="852" y="118" width="1" height="20" fill="#a0a0a0" />
<rect x="852" y="137" width="71" height="1" fill="#ffffff" />
<rect x="922" y="118" width="1" height="20" fill="#ffffff" />
<rect x="853" y="119" width="69" height="1" fill="#696969" />
<rect x="853" y="119" width="1" height="18" fill="#696969" />
<rect x="853" y="136" width="69" height="1" fill="#e3e3e3" />
<rect x="921" y="119" width="1" height="18" fill="#e3e3e3" />
<text x="855.5" y="132.4" font-size="12.5" fill="#000" textLength="54.0" lengthAdjust="spacingAndGlyphs" >519837640</text>
<text x="924.7" y="139.5" font-size="12.5" fill="#000" textLength="13.0" lengthAdjust="spacingAndGlyphs" >km</text>
<rect x="948" y="118" width="48" height="20" fill="#fff" />
<rect x="948" y="118" width="48" height="1" fill="#a0a0a0" />
<rect x="948" y="118" width="1" height="20" fill="#a0a0a0" />
<rect x="948" y="137" width="48" height="1" fill="#ffffff" />
<rect x="995" y="118" width="1" height="20" fill="#ffffff" />
<rect x="949" y="119" width="46" height="1" fill="#696969" />
<rect x="949" y="119" width="1" height="18" fill="#696969" />
<rect x="949" y="136" width="46" height="1" fill="#e3e3e3" />
<rect x="994" y="119" width="1" height="18" fill="#e3e3e3" />
<text x="951.3" y="132.4" font-size="12.5" fill="#000" textLength="39.0" lengthAdjust="spacingAndGlyphs" >30553.7</text>
<text x="996.7" y="139.5" font-size="12.5" fill="#000" textLength="28.0" lengthAdjust="spacingAndGlyphs" >m/sec</text>
<rect x="845" y="147" width="182" height="107" fill="none" stroke="#a0a0a0" stroke-width="1" shape-rendering="crispEdges" transform="translate(0.5,0.5)"/>
<rect x="846" y="148" width="182" height="107" fill="none" stroke="#ffffff" stroke-width="1" shape-rendering="crispEdges" transform="translate(0.5,0.5)" stroke-opacity="0.9"/>
<rect x="850.7" y="145" width="154.0" height="5" fill="#f0f0f0" />
<text x="852.7" y="151.7" font-size="13" fill="#000" font-weight="bold" textLength="150.0" lengthAdjust="spacingAndGlyphs" >Frame range of Star &amp; BKG</text>
<text x="852.0" y="165.5" font-size="12.5" fill="#000" textLength="58.0" lengthAdjust="spacingAndGlyphs" >Appearance</text>
<text x="916.8" y="166.2" font-size="13" fill="#000" font-weight="bold" textLength="36.0" lengthAdjust="spacingAndGlyphs" >before</text>
<text x="959.5" y="166.2" font-size="13" fill="#000" font-weight="bold" textLength="25.0" lengthAdjust="spacingAndGlyphs" >Step</text>
<text x="996.0" y="166.2" font-size="13" fill="#000" font-weight="bold" textLength="26.0" lengthAdjust="spacingAndGlyphs" >after</text>
<rect x="853" y="169" width="39" height="18" fill="#fff" />
<rect x="853" y="169" width="39" height="1" fill="#a0a0a0" />
<rect x="853" y="169" width="1" height="18" fill="#a0a0a0" />
<rect x="853" y="186" width="39" height="1" fill="#ffffff" />
<rect x="891" y="169" width="1" height="18" fill="#ffffff" />
<rect x="854" y="170" width="37" height="1" fill="#696969" />
<rect x="854" y="170" width="1" height="16" fill="#696969" />
<rect x="854" y="185" width="37" height="1" fill="#e3e3e3" />
<rect x="890" y="170" width="1" height="16" fill="#e3e3e3" />
<text x="855.7" y="182.6" font-size="12.5" fill="#000" textLength="35.0" lengthAdjust="spacingAndGlyphs" >2346.7</text>
<rect x="894" y="169" width="23" height="15" fill="#f0f0f0" />
<rect x="894" y="169" width="23" height="1" fill="#ffffff" />
<rect x="894" y="169" width="1" height="15" fill="#ffffff" />
<rect x="894" y="183" width="23" height="1" fill="#696969" />
<rect x="916" y="169" width="1" height="15" fill="#696969" />
<rect x="895" y="170" width="21" height="1" fill="#ffffff" />
<rect x="895" y="170" width="1" height="13" fill="#ffffff" />
<rect x="895" y="182" width="21" height="1" fill="#a0a0a0" />
<rect x="915" y="170" width="1" height="13" fill="#a0a0a0" />
<text x="905.5" y="181.2" font-size="12.5" fill="#000" text-anchor="middle" textLength="13.0" lengthAdjust="spacingAndGlyphs" >Fix</text>
<rect x="925" y="170" width="29" height="18" fill="#fff" />
<rect x="925" y="170" width="29" height="1" fill="#a0a0a0" />
<rect x="925" y="170" width="1" height="18" fill="#a0a0a0" />
<rect x="925" y="187" width="29" height="1" fill="#ffffff" />
<rect x="953" y="170" width="1" height="18" fill="#ffffff" />
<rect x="926" y="171" width="27" height="1" fill="#696969" />
<rect x="926" y="171" width="1" height="16" fill="#696969" />
<rect x="926" y="186" width="27" height="1" fill="#e3e3e3" />
<rect x="952" y="171" width="1" height="16" fill="#e3e3e3" />
<text x="928.4" y="183.3" font-size="12.5" fill="#000" >-1</text>
<rect x="925" y="213" width="29" height="18" fill="#fff" />
<rect x="925" y="213" width="29" height="1" fill="#a0a0a0" />
<rect x="925" y="213" width="1" height="18" fill="#a0a0a0" />
<rect x="925" y="230" width="29" height="1" fill="#ffffff" />
<rect x="953" y="213" width="1" height="18" fill="#ffffff" />
<rect x="926" y="214" width="27" height="1" fill="#696969" />
<rect x="926" y="214" width="1" height="16" fill="#696969" />
<rect x="926" y="229" width="27" height="1" fill="#e3e3e3" />
<rect x="952" y="214" width="1" height="16" fill="#e3e3e3" />
<text x="928.4" y="226.2" font-size="12.5" fill="#000" >-5</text>
<rect x="927" y="190" width="14" height="15" fill="#f0f0f0" />
<rect x="927" y="190" width="14" height="1" fill="#ffffff" />
<rect x="927" y="190" width="1" height="15" fill="#ffffff" />
<rect x="927" y="204" width="14" height="1" fill="#696969" />
<rect x="940" y="190" width="1" height="15" fill="#696969" />
<rect x="928" y="191" width="12" height="1" fill="#ffffff" />
<rect x="928" y="191" width="1" height="13" fill="#ffffff" />
<rect x="928" y="203" width="12" height="1" fill="#a0a0a0" />
<rect x="939" y="191" width="1" height="13" fill="#a0a0a0" />
<polygon points="935.2249999999999,194.60000000000002 935.2249999999999,200.60000000000002 932.2249999999999,197.60000000000002" fill="#000"/>
<rect x="941" y="190" width="14" height="15" fill="#f0f0f0" />
<rect x="941" y="190" width="14" height="1" fill="#ffffff" />
<rect x="941" y="190" width="1" height="15" fill="#ffffff" />
<rect x="941" y="204" width="14" height="1" fill="#696969" />
<rect x="954" y="190" width="1" height="15" fill="#696969" />
<rect x="942" y="191" width="12" height="1" fill="#ffffff" />
<rect x="942" y="191" width="1" height="13" fill="#ffffff" />
<rect x="942" y="203" width="12" height="1" fill="#a0a0a0" />
<rect x="953" y="191" width="1" height="13" fill="#a0a0a0" />
<polygon points="946.125,194.60000000000002 946.125,200.60000000000002 949.125,197.60000000000002" fill="#000"/>
<rect x="927" y="233" width="14" height="15" fill="#f0f0f0" />
<rect x="927" y="233" width="14" height="1" fill="#ffffff" />
<rect x="927" y="233" width="1" height="15" fill="#ffffff" />
<rect x="927" y="247" width="14" height="1" fill="#696969" />
<rect x="940" y="233" width="1" height="15" fill="#696969" />
<rect x="928" y="234" width="12" height="1" fill="#ffffff" />
<rect x="928" y="234" width="1" height="13" fill="#ffffff" />
<rect x="928" y="246" width="12" height="1" fill="#a0a0a0" />
<rect x="939" y="234" width="1" height="13" fill="#a0a0a0" />
<polygon points="935.2249999999999,237.60000000000002 935.2249999999999,243.60000000000002 932.2249999999999,240.60000000000002" fill="#000"/>
<rect x="941" y="233" width="14" height="15" fill="#f0f0f0" />
<rect x="941" y="233" width="14" height="1" fill="#ffffff" />
<rect x="941" y="233" width="1" height="15" fill="#ffffff" />
<rect x="941" y="247" width="14" height="1" fill="#696969" />
<rect x="954" y="233" width="1" height="15" fill="#696969" />
<rect x="942" y="234" width="12" height="1" fill="#ffffff" />
<rect x="942" y="234" width="1" height="13" fill="#ffffff" />
<rect x="942" y="246" width="12" height="1" fill="#a0a0a0" />
<rect x="953" y="234" width="1" height="13" fill="#a0a0a0" />
<polygon points="946.125,237.60000000000002 946.125,243.60000000000002 949.125,240.60000000000002" fill="#000"/>
<rect x="961" y="170" width="27" height="18" fill="#fff" />
<rect x="961" y="170" width="27" height="1" fill="#a0a0a0" />
<rect x="961" y="170" width="1" height="18" fill="#a0a0a0" />
<rect x="961" y="187" width="27" height="1" fill="#ffffff" />
<rect x="987" y="170" width="1" height="18" fill="#ffffff" />
<rect x="962" y="171" width="25" height="1" fill="#696969" />
<rect x="962" y="171" width="1" height="16" fill="#696969" />
<rect x="962" y="186" width="25" height="1" fill="#e3e3e3" />
<rect x="986" y="171" width="1" height="16" fill="#e3e3e3" />
<text x="964.0" y="183.3" font-size="12.5" fill="#000" >0</text>
<rect x="961" y="213" width="27" height="18" fill="#fff" />
<rect x="961" y="213" width="27" height="1" fill="#a0a0a0" />
<rect x="961" y="213" width="1" height="18" fill="#a0a0a0" />
<rect x="961" y="230" width="27" height="1" fill="#ffffff" />
<rect x="987" y="213" width="1" height="18" fill="#ffffff" />
<rect x="962" y="214" width="25" height="1" fill="#696969" />
<rect x="962" y="214" width="1" height="16" fill="#696969" />
<rect x="962" y="229" width="25" height="1" fill="#e3e3e3" />
<rect x="986" y="214" width="1" height="16" fill="#e3e3e3" />
<text x="964.0" y="226.2" font-size="12.5" fill="#000" >0</text>
<rect x="962" y="190" width="13" height="15" fill="#f0f0f0" />
<rect x="962" y="190" width="13" height="1" fill="#ffffff" />
<rect x="962" y="190" width="1" height="15" fill="#ffffff" />
<rect x="962" y="204" width="13" height="1" fill="#696969" />
<rect x="974" y="190" width="1" height="15" fill="#696969" />
<rect x="963" y="191" width="11" height="1" fill="#ffffff" />
<rect x="963" y="191" width="1" height="13" fill="#ffffff" />
<rect x="963" y="203" width="11" height="1" fill="#a0a0a0" />
<rect x="973" y="191" width="1" height="13" fill="#a0a0a0" />
<polygon points="970.375,194.60000000000002 970.375,200.60000000000002 967.375,197.60000000000002" fill="#000"/>
<rect x="975" y="190" width="13" height="15" fill="#f0f0f0" />
<rect x="975" y="190" width="13" height="1" fill="#ffffff" />
<rect x="975" y="190" width="1" height="15" fill="#ffffff" />
<rect x="975" y="204" width="13" height="1" fill="#696969" />
<rect x="987" y="190" width="1" height="15" fill="#696969" />
<rect x="976" y="191" width="11" height="1" fill="#ffffff" />
<rect x="976" y="191" width="1" height="13" fill="#ffffff" />
<rect x="976" y="203" width="11" height="1" fill="#a0a0a0" />
<rect x="986" y="191" width="1" height="13" fill="#a0a0a0" />
<polygon points="980.375,194.60000000000002 980.375,200.60000000000002 983.375,197.60000000000002" fill="#000"/>
<rect x="962" y="233" width="13" height="15" fill="#f0f0f0" />
<rect x="962" y="233" width="13" height="1" fill="#ffffff" />
<rect x="962" y="233" width="1" height="15" fill="#ffffff" />
<rect x="962" y="247" width="13" height="1" fill="#696969" />
<rect x="974" y="233" width="1" height="15" fill="#696969" />
<rect x="963" y="234" width="11" height="1" fill="#ffffff" />
<rect x="963" y="234" width="1" height="13" fill="#ffffff" />
<rect x="963" y="246" width="11" height="1" fill="#a0a0a0" />
<rect x="973" y="234" width="1" height="13" fill="#a0a0a0" />
<polygon points="970.375,237.60000000000002 970.375,243.60000000000002 967.375,240.60000000000002" fill="#000"/>
<rect x="975" y="233" width="13" height="15" fill="#f0f0f0" />
<rect x="975" y="233" width="13" height="1" fill="#ffffff" />
<rect x="975" y="233" width="1" height="15" fill="#ffffff" />
<rect x="975" y="247" width="13" height="1" fill="#696969" />
<rect x="987" y="233" width="1" height="15" fill="#696969" />
<rect x="976" y="234" width="11" height="1" fill="#ffffff" />
<rect x="976" y="234" width="1" height="13" fill="#ffffff" />
<rect x="976" y="246" width="11" height="1" fill="#a0a0a0" />
<rect x="986" y="234" width="1" height="13" fill="#a0a0a0" />
<polygon points="980.375,237.60000000000002 980.375,243.60000000000002 983.375,240.60000000000002" fill="#000"/>
<rect x="997" y="170" width="25" height="18" fill="#fff" />
<rect x="997" y="170" width="25" height="1" fill="#a0a0a0" />
<rect x="997" y="170" width="1" height="18" fill="#a0a0a0" />
<rect x="997" y="187" width="25" height="1" fill="#ffffff" />
<rect x="1021" y="170" width="1" height="18" fill="#ffffff" />
<rect x="998" y="171" width="23" height="1" fill="#696969" />
<rect x="998" y="171" width="1" height="16" fill="#696969" />
<rect x="998" y="186" width="23" height="1" fill="#e3e3e3" />
<rect x="1020" y="171" width="1" height="16" fill="#e3e3e3" />
<text x="1000.2" y="183.3" font-size="12.5" fill="#000" >32</text>
<rect x="997" y="213" width="25" height="18" fill="#fff" />
<rect x="997" y="213" width="25" height="1" fill="#a0a0a0" />
<rect x="997" y="213" width="1" height="18" fill="#a0a0a0" />
<rect x="997" y="230" width="25" height="1" fill="#ffffff" />
<rect x="1021" y="213" width="1" height="18" fill="#ffffff" />
<rect x="998" y="214" width="23" height="1" fill="#696969" />
<rect x="998" y="214" width="1" height="16" fill="#696969" />
<rect x="998" y="229" width="23" height="1" fill="#e3e3e3" />
<rect x="1020" y="214" width="1" height="16" fill="#e3e3e3" />
<text x="1000.2" y="226.2" font-size="12.5" fill="#000" >11</text>
<rect x="999" y="190" width="11" height="15" fill="#f0f0f0" />
<rect x="999" y="190" width="11" height="1" fill="#ffffff" />
<rect x="999" y="190" width="1" height="15" fill="#ffffff" />
<rect x="999" y="204" width="11" height="1" fill="#696969" />
<rect x="1009" y="190" width="1" height="15" fill="#696969" />
<rect x="1000" y="191" width="9" height="1" fill="#ffffff" />
<rect x="1000" y="191" width="1" height="13" fill="#ffffff" />
<rect x="1000" y="203" width="9" height="1" fill="#a0a0a0" />
<rect x="1008" y="191" width="1" height="13" fill="#a0a0a0" />
<polygon points="1006.0500000000001,194.60000000000002 1006.0500000000001,200.60000000000002 1003.0500000000001,197.60000000000002" fill="#000"/>
<rect x="1010" y="190" width="13" height="15" fill="#f0f0f0" />
<rect x="1010" y="190" width="13" height="1" fill="#ffffff" />
<rect x="1010" y="190" width="1" height="15" fill="#ffffff" />
<rect x="1010" y="204" width="13" height="1" fill="#696969" />
<rect x="1022" y="190" width="1" height="15" fill="#696969" />
<rect x="1011" y="191" width="11" height="1" fill="#ffffff" />
<rect x="1011" y="191" width="1" height="13" fill="#ffffff" />
<rect x="1011" y="203" width="11" height="1" fill="#a0a0a0" />
<rect x="1021" y="191" width="1" height="13" fill="#a0a0a0" />
<polygon points="1015.0,194.60000000000002 1015.0,200.60000000000002 1018.0,197.60000000000002" fill="#000"/>
<rect x="999" y="233" width="11" height="15" fill="#f0f0f0" />
<rect x="999" y="233" width="11" height="1" fill="#ffffff" />
<rect x="999" y="233" width="1" height="15" fill="#ffffff" />
<rect x="999" y="247" width="11" height="1" fill="#696969" />
<rect x="1009" y="233" width="1" height="15" fill="#696969" />
<rect x="1000" y="234" width="9" height="1" fill="#ffffff" />
<rect x="1000" y="234" width="1" height="13" fill="#ffffff" />
<rect x="1000" y="246" width="9" height="1" fill="#a0a0a0" />
<rect x="1008" y="234" width="1" height="13" fill="#a0a0a0" />
<polygon points="1006.0500000000001,237.60000000000002 1006.0500000000001,243.60000000000002 1003.0500000000001,240.60000000000002" fill="#000"/>
<rect x="1010" y="233" width="13" height="15" fill="#f0f0f0" />
<rect x="1010" y="233" width="13" height="1" fill="#ffffff" />
<rect x="1010" y="233" width="1" height="15" fill="#ffffff" />
<rect x="1010" y="247" width="13" height="1" fill="#696969" />
<rect x="1022" y="233" width="1" height="15" fill="#696969" />
<rect x="1011" y="234" width="11" height="1" fill="#ffffff" />
<rect x="1011" y="234" width="1" height="13" fill="#ffffff" />
<rect x="1011" y="246" width="11" height="1" fill="#a0a0a0" />
<rect x="1021" y="234" width="1" height="13" fill="#a0a0a0" />
<polygon points="1015.0,237.60000000000002 1015.0,243.60000000000002 1018.0,240.60000000000002" fill="#000"/>
<text x="852.7" y="197.2" font-size="12.5" fill="#000" textLength="54.0" lengthAdjust="spacingAndGlyphs" >Intermidiate</text>
<rect x="853" y="200" width="39" height="17" fill="#fff" />
<rect x="853" y="200" width="39" height="1" fill="#a0a0a0" />
<rect x="853" y="200" width="1" height="17" fill="#a0a0a0" />
<rect x="853" y="216" width="39" height="1" fill="#ffffff" />
<rect x="891" y="200" width="1" height="17" fill="#ffffff" />
<rect x="854" y="201" width="37" height="1" fill="#696969" />
<rect x="854" y="201" width="1" height="15" fill="#696969" />
<rect x="854" y="215" width="37" height="1" fill="#e3e3e3" />
<rect x="890" y="201" width="1" height="15" fill="#e3e3e3" />
<text x="855.7" y="212.8" font-size="12.5" fill="#000" textLength="27.0" lengthAdjust="spacingAndGlyphs" >-17.2</text>
<rect x="895" y="200" width="12" height="12" fill="#fff" />
<rect x="895" y="200" width="12" height="1" fill="#a0a0a0" />
<rect x="895" y="200" width="1" height="12" fill="#a0a0a0" />
<rect x="895" y="211" width="12" height="1" fill="#ffffff" />
<rect x="906" y="200" width="1" height="12" fill="#ffffff" />
<rect x="896" y="201" width="10" height="1" fill="#696969" />
<rect x="896" y="201" width="1" height="10" fill="#696969" />
<rect x="896" y="210" width="10" height="1" fill="#e3e3e3" />
<rect x="905" y="201" width="1" height="10" fill="#e3e3e3" />
<text x="912.0" y="211.0" font-size="12.5" fill="#000" textLength="7.0" lengthAdjust="spacingAndGlyphs" >D</text>
<text x="852.7" y="229.5" font-size="12.5" fill="#000" textLength="72.0" lengthAdjust="spacingAndGlyphs" >Disappearance</text>
<rect x="853" y="232" width="39" height="17" fill="#fff" />
<rect x="853" y="232" width="39" height="1" fill="#a0a0a0" />
<rect x="853" y="232" width="1" height="17" fill="#a0a0a0" />
<rect x="853" y="248" width="39" height="1" fill="#ffffff" />
<rect x="891" y="232" width="1" height="17" fill="#ffffff" />
<rect x="854" y="233" width="37" height="1" fill="#696969" />
<rect x="854" y="233" width="1" height="15" fill="#696969" />
<rect x="854" y="247" width="37" height="1" fill="#e3e3e3" />
<rect x="890" y="233" width="1" height="15" fill="#e3e3e3" />
<text x="855.7" y="245.1" font-size="12.5" fill="#000" textLength="15.0" lengthAdjust="spacingAndGlyphs" >4.1</text>
<rect x="894" y="232" width="23" height="16" fill="#f0f0f0" />
<rect x="894" y="232" width="23" height="1" fill="#ffffff" />
<rect x="894" y="232" width="1" height="16" fill="#ffffff" />
<rect x="894" y="247" width="23" height="1" fill="#696969" />
<rect x="916" y="232" width="1" height="16" fill="#696969" />
<rect x="895" y="233" width="21" height="1" fill="#ffffff" />
<rect x="895" y="233" width="1" height="14" fill="#ffffff" />
<rect x="895" y="246" width="21" height="1" fill="#a0a0a0" />
<rect x="915" y="233" width="1" height="14" fill="#a0a0a0" />
<text x="905.5" y="244.7" font-size="12.5" fill="#000" text-anchor="middle" textLength="13.0" lengthAdjust="spacingAndGlyphs" >Fix</text>
<rect x="845" y="263" width="182" height="48" fill="none" stroke="#a0a0a0" stroke-width="1" shape-rendering="crispEdges" transform="translate(0.5,0.5)"/>
<rect x="846" y="264" width="182" height="48" fill="none" stroke="#ffffff" stroke-width="1" shape-rendering="crispEdges" transform="translate(0.5,0.5)" stroke-opacity="0.9"/>
<rect x="850.7" y="261" width="163.0" height="5" fill="#f0f0f0" />
<text x="852.7" y="267.7" font-size="13" fill="#000" font-weight="bold" textLength="159.0" lengthAdjust="spacingAndGlyphs" >Frame Range for Processing</text>
<rect x="853" y="275" width="30" height="16" fill="#fff" />
<rect x="853" y="275" width="30" height="1" fill="#a0a0a0" />
<rect x="853" y="275" width="1" height="16" fill="#a0a0a0" />
<rect x="853" y="290" width="30" height="1" fill="#ffffff" />
<rect x="882" y="275" width="1" height="16" fill="#ffffff" />
<rect x="854" y="276" width="28" height="1" fill="#696969" />
<rect x="854" y="276" width="1" height="14" fill="#696969" />
<rect x="854" y="289" width="28" height="1" fill="#e3e3e3" />
<rect x="881" y="276" width="1" height="14" fill="#e3e3e3" />
<text x="855.7" y="287.6" font-size="12.5" fill="#000" >-5</text>
<rect x="853" y="292" width="15" height="16" fill="#f0f0f0" />
<rect x="853" y="292" width="15" height="1" fill="#ffffff" />
<rect x="853" y="292" width="1" height="16" fill="#ffffff" />
<rect x="853" y="307" width="15" height="1" fill="#696969" />
<rect x="867" y="292" width="1" height="16" fill="#696969" />
<rect x="854" y="293" width="13" height="1" fill="#ffffff" />
<rect x="854" y="293" width="1" height="14" fill="#ffffff" />
<rect x="854" y="306" width="13" height="1" fill="#a0a0a0" />
<rect x="866" y="293" width="1" height="14" fill="#a0a0a0" />
<polygon points="861.85,296.8 861.85,302.8 858.85,299.8" fill="#000"/>
<rect x="868" y="292" width="16" height="16" fill="#f0f0f0" />
<rect x="868" y="292" width="16" height="1" fill="#ffffff" />
<rect x="868" y="292" width="1" height="16" fill="#ffffff" />
<rect x="868" y="307" width="16" height="1" fill="#696969" />
<rect x="883" y="292" width="1" height="16" fill="#696969" />
<rect x="869" y="293" width="14" height="1" fill="#ffffff" />
<rect x="869" y="293" width="1" height="14" fill="#ffffff" />
<rect x="869" y="306" width="14" height="1" fill="#a0a0a0" />
<rect x="882" y="293" width="1" height="14" fill="#a0a0a0" />
<polygon points="874.5,296.8 874.5,302.8 877.5,299.8" fill="#000"/>
<rect x="900" y="275" width="31" height="16" fill="#fff" />
<rect x="900" y="275" width="31" height="1" fill="#a0a0a0" />
<rect x="900" y="275" width="1" height="16" fill="#a0a0a0" />
<rect x="900" y="290" width="31" height="1" fill="#ffffff" />
<rect x="930" y="275" width="1" height="16" fill="#ffffff" />
<rect x="901" y="276" width="29" height="1" fill="#696969" />
<rect x="901" y="276" width="1" height="14" fill="#696969" />
<rect x="901" y="289" width="29" height="1" fill="#e3e3e3" />
<rect x="929" y="276" width="1" height="14" fill="#e3e3e3" />
<text x="903.5" y="287.6" font-size="12.5" fill="#000" >32</text>
<rect x="900" y="292" width="16" height="16" fill="#f0f0f0" />
<rect x="900" y="292" width="16" height="1" fill="#ffffff" />
<rect x="900" y="292" width="1" height="16" fill="#ffffff" />
<rect x="900" y="307" width="16" height="1" fill="#696969" />
<rect x="915" y="292" width="1" height="16" fill="#696969" />
<rect x="901" y="293" width="14" height="1" fill="#ffffff" />
<rect x="901" y="293" width="1" height="14" fill="#ffffff" />
<rect x="901" y="306" width="14" height="1" fill="#a0a0a0" />
<rect x="914" y="293" width="1" height="14" fill="#a0a0a0" />
<polygon points="909.75,296.8 909.75,302.8 906.75,299.8" fill="#000"/>
<rect x="916" y="292" width="16" height="16" fill="#f0f0f0" />
<rect x="916" y="292" width="16" height="1" fill="#ffffff" />
<rect x="916" y="292" width="1" height="16" fill="#ffffff" />
<rect x="916" y="307" width="16" height="1" fill="#696969" />
<rect x="931" y="292" width="1" height="16" fill="#696969" />
<rect x="917" y="293" width="14" height="1" fill="#ffffff" />
<rect x="917" y="293" width="1" height="14" fill="#ffffff" />
<rect x="917" y="306" width="14" height="1" fill="#a0a0a0" />
<rect x="930" y="293" width="1" height="14" fill="#a0a0a0" />
<polygon points="922.25,296.8 922.25,302.8 925.25,299.8" fill="#000"/>
<rect x="948" y="275" width="12" height="12" fill="#fff" />
<rect x="948" y="275" width="12" height="1" fill="#a0a0a0" />
<rect x="948" y="275" width="1" height="12" fill="#a0a0a0" />
<rect x="948" y="286" width="12" height="1" fill="#ffffff" />
<rect x="959" y="275" width="1" height="12" fill="#ffffff" />
<rect x="949" y="276" width="10" height="1" fill="#696969" />
<rect x="949" y="276" width="1" height="10" fill="#696969" />
<rect x="949" y="285" width="10" height="1" fill="#e3e3e3" />
<rect x="958" y="276" width="1" height="10" fill="#e3e3e3" />
<path d="M951,281.0 L953.04,283.5 L957,278" fill="none" stroke="#000" stroke-width="2"/>
<text x="966.6" y="284.1" font-size="12.5" fill="#000" textLength="52.0" lengthAdjust="spacingAndGlyphs" >SelectArea</text>
<text x="940.6" y="305.5" font-size="12.5" fill="#000" textLength="44.0" lengthAdjust="spacingAndGlyphs" >DataNum</text>
<rect x="988" y="289" width="31" height="19" fill="#fff" />
<rect x="988" y="289" width="31" height="1" fill="#a0a0a0" />
<rect x="988" y="289" width="1" height="19" fill="#a0a0a0" />
<rect x="988" y="307" width="31" height="1" fill="#ffffff" />
<rect x="1018" y="289" width="1" height="19" fill="#ffffff" />
<rect x="989" y="290" width="29" height="1" fill="#696969" />
<rect x="989" y="290" width="1" height="17" fill="#696969" />
<rect x="989" y="306" width="29" height="1" fill="#e3e3e3" />
<rect x="1017" y="290" width="1" height="17" fill="#e3e3e3" />
<text x="991.4" y="302.9" font-size="13" fill="#000" font-weight="bold" >38</text>
<rect x="845" y="318" width="182" height="121" fill="none" stroke="#a0a0a0" stroke-width="1" shape-rendering="crispEdges" transform="translate(0.5,0.5)"/>
<rect x="846" y="319" width="182" height="121" fill="none" stroke="#ffffff" stroke-width="1" shape-rendering="crispEdges" transform="translate(0.5,0.5)" stroke-opacity="0.9"/>
<rect x="850.7" y="316" width="130.0" height="5" fill="#f0f0f0" />
<text x="852.7" y="322.7" font-size="13" fill="#000" font-weight="bold" textLength="126.0" lengthAdjust="spacingAndGlyphs" >Central Time of  Event</text>
<text x="852.7" y="339.9" font-size="13" fill="#000" font-weight="bold" textLength="151.0" lengthAdjust="spacingAndGlyphs" >Component 1  [Single Star]</text>
<text x="852.7" y="353.3" font-size="12.5" fill="#000" textLength="68.0" lengthAdjust="spacingAndGlyphs" >Frame Number</text>
<text x="940.6" y="353.3" font-size="12.5" fill="#000" textLength="53.0" lengthAdjust="spacingAndGlyphs" >Offset Time</text>
<rect x="853" y="357" width="63" height="19" fill="#fff" />
<rect x="853" y="357" width="63" height="1" fill="#a0a0a0" />
<rect x="853" y="357" width="1" height="19" fill="#a0a0a0" />
<rect x="853" y="375" width="63" height="1" fill="#ffffff" />
<rect x="915" y="357" width="1" height="19" fill="#ffffff" />
<rect x="854" y="358" width="61" height="1" fill="#696969" />
<rect x="854" y="358" width="1" height="17" fill="#696969" />
<rect x="854" y="374" width="61" height="1" fill="#e3e3e3" />
<rect x="914" y="358" width="1" height="17" fill="#e3e3e3" />
<text x="855.7" y="370.9" font-size="13" fill="#000" font-weight="bold" textLength="31.0" lengthAdjust="spacingAndGlyphs" >466.0</text>
<text x="925.0" y="372.8" font-size="12" fill="#000" font-weight="bold" >+</text>
<rect x="937" y="357" width="43" height="19" fill="#fff" />
<rect x="937" y="357" width="43" height="1" fill="#a0a0a0" />
<rect x="937" y="357" width="1" height="19" fill="#a0a0a0" />
<rect x="937" y="375" width="43" height="1" fill="#ffffff" />
<rect x="979" y="357" width="1" height="19" fill="#ffffff" />
<rect x="938" y="358" width="41" height="1" fill="#696969" />
<rect x="938" y="358" width="1" height="17" fill="#696969" />
<rect x="938" y="374" width="41" height="1" fill="#e3e3e3" />
<rect x="978" y="358" width="1" height="17" fill="#e3e3e3" />
<text x="939.7" y="370.9" font-size="13" fill="#000" font-weight="bold" textLength="29.0" lengthAdjust="spacingAndGlyphs" >188.6</text>
<text x="986.5" y="375.8" font-size="12.5" fill="#000" textLength="24.0" lengthAdjust="spacingAndGlyphs" >msec</text>
<text x="852.7" y="393.4" font-size="12.5" fill="#000" textLength="64.0" lengthAdjust="spacingAndGlyphs" >Error(1 sigma)</text>
<text x="921.0" y="393.2" font-size="12" fill="#000" font-weight="bold" textLength="14.0" lengthAdjust="spacingAndGlyphs" >+/-</text>
<rect x="937" y="377" width="43" height="19" fill="#fff" />
<rect x="937" y="377" width="43" height="1" fill="#a0a0a0" />
<rect x="937" y="377" width="1" height="19" fill="#a0a0a0" />
<rect x="937" y="395" width="43" height="1" fill="#ffffff" />
<rect x="979" y="377" width="1" height="19" fill="#ffffff" />
<rect x="938" y="378" width="41" height="1" fill="#696969" />
<rect x="938" y="378" width="1" height="17" fill="#696969" />
<rect x="938" y="394" width="41" height="1" fill="#e3e3e3" />
<rect x="978" y="378" width="1" height="17" fill="#e3e3e3" />
<text x="939.7" y="391.1" font-size="13" fill="#000" font-weight="bold" textLength="22.0" lengthAdjust="spacingAndGlyphs" >49.1</text>
<text x="986.5" y="393.4" font-size="12.5" fill="#000" textLength="24.0" lengthAdjust="spacingAndGlyphs" >msec</text>
<line x1="852" y1="400.5" x2="1021" y2="400.5" stroke="#99c2e8" stroke-width="1" />
<text x="852.7" y="414.5" font-size="13" fill="#000" font-weight="bold" textLength="161.0" lengthAdjust="spacingAndGlyphs" >Component 2   [Double Star]</text>
<text x="860.5" y="433.4" font-size="12.5" fill="#000" textLength="53.0" lengthAdjust="spacingAndGlyphs" >Offset Time</text>
<text x="925.0" y="433.8" font-size="12" fill="#000" font-weight="bold" >+</text>
<rect x="937" y="418" width="32" height="19" fill="#fff" />
<rect x="937" y="418" width="32" height="1" fill="#a0a0a0" />
<rect x="937" y="418" width="1" height="19" fill="#a0a0a0" />
<rect x="937" y="436" width="32" height="1" fill="#ffffff" />
<rect x="968" y="418" width="1" height="19" fill="#ffffff" />
<rect x="938" y="419" width="30" height="1" fill="#696969" />
<rect x="938" y="419" width="1" height="17" fill="#696969" />
<rect x="938" y="435" width="30" height="1" fill="#e3e3e3" />
<rect x="967" y="419" width="1" height="17" fill="#e3e3e3" />
<text x="972.8" y="433.4" font-size="12.5" fill="#000" textLength="51.0" lengthAdjust="spacingAndGlyphs" >millisecond</text>
<rect x="845" y="448" width="182" height="45" fill="none" stroke="#a0a0a0" stroke-width="1" shape-rendering="crispEdges" transform="translate(0.5,0.5)"/>
<rect x="846" y="449" width="182" height="45" fill="none" stroke="#ffffff" stroke-width="1" shape-rendering="crispEdges" transform="translate(0.5,0.5)" stroke-opacity="0.9"/>
<rect x="850.7" y="446" width="145.0" height="5" fill="#f0f0f0" />
<text x="852.7" y="452.7" font-size="13" fill="#000" font-weight="bold" textLength="141.0" lengthAdjust="spacingAndGlyphs" >Speed of Fresnel Pattern</text>
<text x="852.7" y="468.2" font-size="12.5" fill="#000" textLength="22.0" lengthAdjust="spacingAndGlyphs" >Rate</text>
<text x="931.8" y="468.2" font-size="12.5" fill="#000" textLength="66.0" lengthAdjust="spacingAndGlyphs" >Contact Angle</text>
<rect x="853" y="471" width="47" height="18" fill="#fff" />
<rect x="853" y="471" width="47" height="1" fill="#a0a0a0" />
<rect x="853" y="471" width="1" height="18" fill="#a0a0a0" />
<rect x="853" y="488" width="47" height="1" fill="#ffffff" />
<rect x="899" y="471" width="1" height="18" fill="#ffffff" />
<rect x="854" y="472" width="45" height="1" fill="#696969" />
<rect x="854" y="472" width="1" height="16" fill="#696969" />
<rect x="854" y="487" width="45" height="1" fill="#e3e3e3" />
<rect x="898" y="472" width="1" height="16" fill="#e3e3e3" />
<text x="855.7" y="484.7" font-size="13" fill="#000" font-weight="bold" textLength="38.0" lengthAdjust="spacingAndGlyphs" >1.0000</text>
<rect x="933" y="471" width="47" height="18" fill="#fff" />
<rect x="933" y="471" width="47" height="1" fill="#a0a0a0" />
<rect x="933" y="471" width="1" height="18" fill="#a0a0a0" />
<rect x="933" y="488" width="47" height="1" fill="#ffffff" />
<rect x="979" y="471" width="1" height="18" fill="#ffffff" />
<rect x="934" y="472" width="45" height="1" fill="#696969" />
<rect x="934" y="472" width="1" height="16" fill="#696969" />
<rect x="934" y="487" width="45" height="1" fill="#e3e3e3" />
<rect x="978" y="472" width="1" height="16" fill="#e3e3e3" />
<text x="935.8" y="484.7" font-size="13" fill="#000" font-weight="bold" textLength="17.0" lengthAdjust="spacingAndGlyphs" >0.0</text>
<text x="988.8" y="488.9" font-size="12.5" fill="#000" textLength="32.0" lengthAdjust="spacingAndGlyphs" >degree</text>
<rect x="845" y="501" width="182" height="64" fill="none" stroke="#a0a0a0" stroke-width="1" shape-rendering="crispEdges" transform="translate(0.5,0.5)"/>
<rect x="846" y="502" width="182" height="64" fill="none" stroke="#ffffff" stroke-width="1" shape-rendering="crispEdges" transform="translate(0.5,0.5)" stroke-opacity="0.9"/>
<rect x="851" y="496" width="154" height="10" fill="#f0f0f0" />
<rect x="853" y="498" width="12" height="12" fill="#fff" />
<rect x="853" y="498" width="12" height="1" fill="#a0a0a0" />
<rect x="853" y="498" width="1" height="12" fill="#a0a0a0" />
<rect x="853" y="509" width="12" height="1" fill="#ffffff" />
<rect x="864" y="498" width="1" height="12" fill="#ffffff" />
<rect x="854" y="499" width="10" height="1" fill="#696969" />
<rect x="854" y="499" width="1" height="10" fill="#696969" />
<rect x="854" y="508" width="10" height="1" fill="#e3e3e3" />
<rect x="863" y="499" width="1" height="10" fill="#e3e3e3" />
<text x="871.6" y="507.3" font-size="13" fill="#000" font-weight="bold" textLength="125.0" lengthAdjust="spacingAndGlyphs" >Double Star Analyzing</text>
<text x="852.7" y="522.5" font-size="12.5" fill="#000" textLength="50.0" lengthAdjust="spacingAndGlyphs" >Step Hight</text>
<text x="941.2" y="522.5" font-size="12.5" fill="#000" textLength="74.0" lengthAdjust="spacingAndGlyphs" >Time Difference</text>
<rect x="853" y="527" width="17" height="11" fill="#f0f0f0" />
<rect x="853" y="527" width="17" height="1" fill="#fff" />
<rect x="853" y="527" width="1" height="11" fill="#fff" />
<rect x="853" y="537" width="17" height="1" fill="#a0a0a0" />
<rect x="869" y="527" width="1" height="11" fill="#a0a0a0" />
<rect x="854" y="528" width="15" height="1" fill="#fff" />
<rect x="854" y="528" width="1" height="9" fill="#fff" />
<rect x="854" y="536" width="15" height="1" fill="#c8c8c8" />
<rect x="868" y="528" width="1" height="9" fill="#c8c8c8" />
<polygon points="858.35,534.45 864.35,534.45 861.35,531.45" fill="#a8a8a8"/>
<rect x="853" y="539" width="17" height="12" fill="#f0f0f0" />
<rect x="853" y="539" width="17" height="1" fill="#fff" />
<rect x="853" y="539" width="1" height="12" fill="#fff" />
<rect x="853" y="550" width="17" height="1" fill="#a0a0a0" />
<rect x="869" y="539" width="1" height="12" fill="#a0a0a0" />
<rect x="854" y="540" width="15" height="1" fill="#fff" />
<rect x="854" y="540" width="1" height="10" fill="#fff" />
<rect x="854" y="549" width="15" height="1" fill="#c8c8c8" />
<rect x="868" y="540" width="1" height="10" fill="#c8c8c8" />
<polygon points="858.35,543.4 864.35,543.4 861.35,546.4" fill="#a8a8a8"/>
<rect x="870" y="527" width="15" height="11" fill="#f0f0f0" />
<rect x="870" y="527" width="15" height="1" fill="#fff" />
<rect x="870" y="527" width="1" height="11" fill="#fff" />
<rect x="870" y="537" width="15" height="1" fill="#a0a0a0" />
<rect x="884" y="527" width="1" height="11" fill="#a0a0a0" />
<rect x="871" y="528" width="13" height="1" fill="#fff" />
<rect x="871" y="528" width="1" height="9" fill="#fff" />
<rect x="871" y="536" width="13" height="1" fill="#c8c8c8" />
<rect x="883" y="528" width="1" height="9" fill="#c8c8c8" />
<polygon points="874.5,534.45 880.5,534.45 877.5,531.45" fill="#a8a8a8"/>
<rect x="870" y="539" width="15" height="12" fill="#f0f0f0" />
<rect x="870" y="539" width="15" height="1" fill="#fff" />
<rect x="870" y="539" width="1" height="12" fill="#fff" />
<rect x="870" y="550" width="15" height="1" fill="#a0a0a0" />
<rect x="884" y="539" width="1" height="12" fill="#a0a0a0" />
<rect x="871" y="540" width="13" height="1" fill="#fff" />
<rect x="871" y="540" width="1" height="10" fill="#fff" />
<rect x="871" y="549" width="13" height="1" fill="#c8c8c8" />
<rect x="883" y="540" width="1" height="10" fill="#c8c8c8" />
<polygon points="874.5,543.4 880.5,543.4 877.5,546.4" fill="#a8a8a8"/>
<rect x="885" y="527" width="29" height="19" fill="#f4f4f4" />
<rect x="885" y="527" width="29" height="1" fill="#a0a0a0" />
<rect x="885" y="527" width="1" height="19" fill="#a0a0a0" />
<rect x="885" y="545" width="29" height="1" fill="#ffffff" />
<rect x="913" y="527" width="1" height="19" fill="#ffffff" />
<rect x="886" y="528" width="27" height="1" fill="#696969" />
<rect x="886" y="528" width="1" height="17" fill="#696969" />
<rect x="886" y="544" width="27" height="1" fill="#e3e3e3" />
<rect x="912" y="528" width="1" height="17" fill="#e3e3e3" />
<text x="885.3" y="541.2" font-size="12.5" fill="#a0a0a0" textLength="21.0" lengthAdjust="spacingAndGlyphs" >50.0</text>
<text x="909.0" y="555.2" font-size="9" fill="#444" >%</text>
<rect x="924" y="527" width="17" height="11" fill="#f0f0f0" />
<rect x="924" y="527" width="17" height="1" fill="#fff" />
<rect x="924" y="527" width="1" height="11" fill="#fff" />
<rect x="924" y="537" width="17" height="1" fill="#a0a0a0" />
<rect x="940" y="527" width="1" height="11" fill="#a0a0a0" />
<rect x="925" y="528" width="15" height="1" fill="#fff" />
<rect x="925" y="528" width="1" height="9" fill="#fff" />
<rect x="925" y="536" width="15" height="1" fill="#c8c8c8" />
<rect x="939" y="528" width="1" height="9" fill="#c8c8c8" />
<polygon points="929.3,534.45 935.3,534.45 932.3,531.45" fill="#a8a8a8"/>
<rect x="924" y="539" width="17" height="12" fill="#f0f0f0" />
<rect x="924" y="539" width="17" height="1" fill="#fff" />
<rect x="924" y="539" width="1" height="12" fill="#fff" />
<rect x="924" y="550" width="17" height="1" fill="#a0a0a0" />
<rect x="940" y="539" width="1" height="12" fill="#a0a0a0" />
<rect x="925" y="540" width="15" height="1" fill="#fff" />
<rect x="925" y="540" width="1" height="10" fill="#fff" />
<rect x="925" y="549" width="15" height="1" fill="#c8c8c8" />
<rect x="939" y="540" width="1" height="10" fill="#c8c8c8" />
<polygon points="929.3,543.4 935.3,543.4 932.3,546.4" fill="#a8a8a8"/>
<rect x="941" y="527" width="16" height="11" fill="#f0f0f0" />
<rect x="941" y="527" width="16" height="1" fill="#fff" />
<rect x="941" y="527" width="1" height="11" fill="#fff" />
<rect x="941" y="537" width="16" height="1" fill="#a0a0a0" />
<rect x="956" y="527" width="1" height="11" fill="#a0a0a0" />
<rect x="942" y="528" width="14" height="1" fill="#fff" />
<rect x="942" y="528" width="1" height="9" fill="#fff" />
<rect x="942" y="536" width="14" height="1" fill="#c8c8c8" />
<rect x="955" y="528" width="1" height="9" fill="#c8c8c8" />
<polygon points="945.6,534.45 951.6,534.45 948.6,531.45" fill="#a8a8a8"/>
<rect x="941" y="539" width="16" height="12" fill="#f0f0f0" />
<rect x="941" y="539" width="16" height="1" fill="#fff" />
<rect x="941" y="539" width="1" height="12" fill="#fff" />
<rect x="941" y="550" width="16" height="1" fill="#a0a0a0" />
<rect x="956" y="539" width="1" height="12" fill="#a0a0a0" />
<rect x="942" y="540" width="14" height="1" fill="#fff" />
<rect x="942" y="540" width="1" height="10" fill="#fff" />
<rect x="942" y="549" width="14" height="1" fill="#c8c8c8" />
<rect x="955" y="540" width="1" height="10" fill="#c8c8c8" />
<polygon points="945.6,543.4 951.6,543.4 948.6,546.4" fill="#a8a8a8"/>
<rect x="957" y="527" width="16" height="11" fill="#f0f0f0" />
<rect x="957" y="527" width="16" height="1" fill="#fff" />
<rect x="957" y="527" width="1" height="11" fill="#fff" />
<rect x="957" y="537" width="16" height="1" fill="#a0a0a0" />
<rect x="972" y="527" width="1" height="11" fill="#a0a0a0" />
<rect x="958" y="528" width="14" height="1" fill="#fff" />
<rect x="958" y="528" width="1" height="9" fill="#fff" />
<rect x="958" y="536" width="14" height="1" fill="#c8c8c8" />
<rect x="971" y="528" width="1" height="9" fill="#c8c8c8" />
<polygon points="961.7,534.45 967.7,534.45 964.7,531.45" fill="#a8a8a8"/>
<rect x="957" y="539" width="16" height="12" fill="#f0f0f0" />
<rect x="957" y="539" width="16" height="1" fill="#fff" />
<rect x="957" y="539" width="1" height="12" fill="#fff" />
<rect x="957" y="550" width="16" height="1" fill="#a0a0a0" />
<rect x="972" y="539" width="1" height="12" fill="#a0a0a0" />
<rect x="958" y="540" width="14" height="1" fill="#fff" />
<rect x="958" y="540" width="1" height="10" fill="#fff" />
<rect x="958" y="549" width="14" height="1" fill="#c8c8c8" />
<rect x="971" y="540" width="1" height="10" fill="#c8c8c8" />
<polygon points="961.7,543.4 967.7,543.4 964.7,546.4" fill="#a8a8a8"/>
<rect x="973" y="527" width="47" height="19" fill="#f4f4f4" />
<rect x="973" y="527" width="47" height="1" fill="#a0a0a0" />
<rect x="973" y="527" width="1" height="19" fill="#a0a0a0" />
<rect x="973" y="545" width="47" height="1" fill="#ffffff" />
<rect x="1019" y="527" width="1" height="19" fill="#ffffff" />
<rect x="974" y="528" width="45" height="1" fill="#696969" />
<rect x="974" y="528" width="1" height="17" fill="#696969" />
<rect x="974" y="544" width="45" height="1" fill="#e3e3e3" />
<rect x="1018" y="528" width="1" height="17" fill="#e3e3e3" />
<text x="975.8" y="541.2" font-size="12.5" fill="#a0a0a0" >0</text>
<text x="858.0" y="562.2" font-size="12.5" fill="#000" >1</text>
<text x="870.5" y="562.2" font-size="12.5" fill="#000" textLength="14.0" lengthAdjust="spacingAndGlyphs" >0.1</text>
<text x="972.8" y="558.2" font-size="12.5" fill="#000" textLength="51.0" lengthAdjust="spacingAndGlyphs" >millisecond</text>
<rect x="845" y="573" width="182" height="51" fill="none" stroke="#a0a0a0" stroke-width="1" shape-rendering="crispEdges" transform="translate(0.5,0.5)"/>
<rect x="846" y="574" width="182" height="51" fill="none" stroke="#ffffff" stroke-width="1" shape-rendering="crispEdges" transform="translate(0.5,0.5)" stroke-opacity="0.9"/>
<rect x="851" y="568" width="159" height="10" fill="#f0f0f0" />
<rect x="853" y="570" width="12" height="12" fill="#fff" />
<rect x="853" y="570" width="12" height="1" fill="#a0a0a0" />
<rect x="853" y="570" width="1" height="12" fill="#a0a0a0" />
<rect x="853" y="581" width="12" height="1" fill="#ffffff" />
<rect x="864" y="570" width="1" height="12" fill="#ffffff" />
<rect x="854" y="571" width="10" height="1" fill="#696969" />
<rect x="854" y="571" width="1" height="10" fill="#696969" />
<rect x="854" y="580" width="10" height="1" fill="#e3e3e3" />
<rect x="863" y="571" width="1" height="10" fill="#e3e3e3" />
<path d="M856,576.0 L858.04,578.5 L862,573" fill="none" stroke="#000" stroke-width="2"/>
<text x="872.8" y="579.5" font-size="13" fill="#000" font-weight="bold" textLength="132.0" lengthAdjust="spacingAndGlyphs" >Star's Angular Diameter</text>
<rect x="853" y="585" width="16" height="12" fill="#f0f0f0" />
<rect x="853" y="585" width="16" height="1" fill="#ffffff" />
<rect x="853" y="585" width="1" height="12" fill="#ffffff" />
<rect x="853" y="596" width="16" height="1" fill="#696969" />
<rect x="868" y="585" width="1" height="12" fill="#696969" />
<rect x="854" y="586" width="14" height="1" fill="#ffffff" />
<rect x="854" y="586" width="1" height="10" fill="#ffffff" />
<rect x="854" y="595" width="14" height="1" fill="#a0a0a0" />
<rect x="867" y="586" width="1" height="10" fill="#a0a0a0" />
<polygon points="858.0999999999999,592.1500000000001 864.0999999999999,592.1500000000001 861.0999999999999,589.1500000000001" fill="#000"/>
<rect x="853" y="597" width="16" height="11" fill="#f0f0f0" />
<rect x="853" y="597" width="16" height="1" fill="#ffffff" />
<rect x="853" y="597" width="1" height="11" fill="#ffffff" />
<rect x="853" y="607" width="16" height="1" fill="#696969" />
<rect x="868" y="597" width="1" height="11" fill="#696969" />
<rect x="854" y="598" width="14" height="1" fill="#ffffff" />
<rect x="854" y="598" width="1" height="9" fill="#ffffff" />
<rect x="854" y="606" width="14" height="1" fill="#a0a0a0" />
<rect x="867" y="598" width="1" height="9" fill="#a0a0a0" />
<polygon points="858.0999999999999,600.6 864.0999999999999,600.6 861.0999999999999,603.6" fill="#000"/>
<rect x="870" y="584" width="30" height="19" fill="#fff" />
<rect x="870" y="584" width="30" height="1" fill="#a0a0a0" />
<rect x="870" y="584" width="1" height="19" fill="#a0a0a0" />
<rect x="870" y="602" width="30" height="1" fill="#ffffff" />
<rect x="899" y="584" width="1" height="19" fill="#ffffff" />
<rect x="871" y="585" width="28" height="1" fill="#696969" />
<rect x="871" y="585" width="1" height="17" fill="#696969" />
<rect x="871" y="601" width="28" height="1" fill="#e3e3e3" />
<rect x="898" y="585" width="1" height="17" fill="#e3e3e3" />
<text x="872.7" y="597.8" font-size="12.5" fill="#000" textLength="22.0" lengthAdjust="spacingAndGlyphs" >0.00</text>
<text x="902.0" y="598.9" font-size="12.5" fill="#000" textLength="72.0" lengthAdjust="spacingAndGlyphs" >milli arc second</text>
<text x="861.5" y="620.7" font-size="12.5" fill="#000" textLength="116.0" lengthAdjust="spacingAndGlyphs" >Intensity at event centre:</text>
<rect x="982" y="604" width="31" height="18" fill="#fff" />
<rect x="982" y="604" width="31" height="1" fill="#a0a0a0" />
<rect x="982" y="604" width="1" height="18" fill="#a0a0a0" />
<rect x="982" y="621" width="31" height="1" fill="#ffffff" />
<rect x="1012" y="604" width="1" height="18" fill="#ffffff" />
<rect x="983" y="605" width="29" height="1" fill="#696969" />
<rect x="983" y="605" width="1" height="16" fill="#696969" />
<rect x="983" y="620" width="29" height="1" fill="#e3e3e3" />
<rect x="1011" y="605" width="1" height="16" fill="#e3e3e3" />
<text x="984.6" y="617.5" font-size="13" fill="#000" font-weight="bold" textLength="25.0" lengthAdjust="spacingAndGlyphs" >25.0</text>
<text x="1014.4" y="621.3" font-size="12" fill="#000" textLength="8.0" lengthAdjust="spacingAndGlyphs" >%</text>
<rect x="845" y="634" width="182" height="46" fill="none" stroke="#a0a0a0" stroke-width="1" shape-rendering="crispEdges" transform="translate(0.5,0.5)"/>
<rect x="846" y="635" width="182" height="46" fill="none" stroke="#ffffff" stroke-width="1" shape-rendering="crispEdges" transform="translate(0.5,0.5)" stroke-opacity="0.9"/>
<rect x="850.7" y="632" width="66.0" height="5" fill="#f0f0f0" />
<text x="852.7" y="638.7" font-size="13" fill="#000" font-weight="bold" textLength="62.0" lengthAdjust="spacingAndGlyphs" >Processing</text>
<circle cx="858.8" cy="649.8" r="5" fill="#fff" stroke="#a0a0a0" stroke-width="1"/>
<path d="M854.3,649.8 A4.5,4.5 0 0 1 858.8,645.3" fill="none" stroke="#696969" stroke-width="1.5"/>
<circle cx="858.8" cy="649.8" r="2" fill="#000"/>
<text x="870.6" y="654.5" font-size="12.5" fill="#000" textLength="68.0" lengthAdjust="spacingAndGlyphs" >for Occultation</text>
<circle cx="954.5" cy="649.8" r="5" fill="#fff" stroke="#a0a0a0" stroke-width="1"/>
<path d="M950.0,649.8 A4.5,4.5 0 0 1 954.5,645.3" fill="none" stroke="#696969" stroke-width="1.5"/>
<text x="966.6" y="654.5" font-size="12.5" fill="#000" textLength="51.0" lengthAdjust="spacingAndGlyphs" >for Grazing</text>
<text x="850.5" y="674.3" font-size="12.5" fill="#000" textLength="88.0" lengthAdjust="spacingAndGlyphs" >Sum-Squared Error</text>
<rect x="943" y="659" width="79" height="19" fill="#fff" />
<rect x="943" y="659" width="79" height="1" fill="#a0a0a0" />
<rect x="943" y="659" width="1" height="19" fill="#a0a0a0" />
<rect x="943" y="677" width="79" height="1" fill="#ffffff" />
<rect x="1021" y="659" width="1" height="19" fill="#ffffff" />
<rect x="944" y="660" width="77" height="1" fill="#696969" />
<rect x="944" y="660" width="1" height="17" fill="#696969" />
<rect x="944" y="676" width="77" height="1" fill="#e3e3e3" />
<rect x="1020" y="660" width="1" height="17" fill="#e3e3e3" />
<text x="945.6" y="673.1" font-size="13" fill="#000" font-weight="bold" textLength="48.0" lengthAdjust="spacingAndGlyphs" >8584682</text>
<rect x="847" y="690" width="12" height="12" fill="#fff" />
<rect x="847" y="690" width="12" height="1" fill="#a0a0a0" />
<rect x="847" y="690" width="1" height="12" fill="#a0a0a0" />
<rect x="847" y="701" width="12" height="1" fill="#ffffff" />
<rect x="858" y="690" width="1" height="12" fill="#ffffff" />
<rect x="848" y="691" width="10" height="1" fill="#696969" />
<rect x="848" y="691" width="1" height="10" fill="#696969" />
<rect x="848" y="700" width="10" height="1" fill="#e3e3e3" />
<rect x="857" y="691" width="1" height="10" fill="#e3e3e3" />
<text x="864.5" y="700.9" font-size="12.5" fill="#000" textLength="43.0" lengthAdjust="spacingAndGlyphs" >Mag drop</text>
<rect x="914" y="687" width="40" height="19" fill="#fff" />
<rect x="914" y="687" width="40" height="1" fill="#a0a0a0" />
<rect x="914" y="687" width="1" height="19" fill="#a0a0a0" />
<rect x="914" y="705" width="40" height="1" fill="#ffffff" />
<rect x="953" y="687" width="1" height="19" fill="#ffffff" />
<rect x="915" y="688" width="38" height="1" fill="#696969" />
<rect x="915" y="688" width="1" height="17" fill="#696969" />
<rect x="915" y="704" width="38" height="1" fill="#e3e3e3" />
<rect x="952" y="688" width="1" height="17" fill="#e3e3e3" />
<text x="917.2" y="700.6" font-size="12.5" fill="#000" textLength="15.0" lengthAdjust="spacingAndGlyphs" >7.6</text>
<text x="960.5" y="700.9" font-size="12.5" fill="#000" textLength="52.0" lengthAdjust="spacingAndGlyphs" >considered</text>
<rect x="848" y="708" width="176" height="9" fill="#ececec" />
<rect x="848" y="708" width="176" height="1" fill="#a0a0a0" />
<rect x="848" y="708" width="1" height="9" fill="#a0a0a0" />
<rect x="848" y="716" width="176" height="1" fill="#fff" />
<rect x="1023" y="708" width="1" height="9" fill="#fff" />
<rect x="849" y="709" width="174" height="1" fill="#e0e0e0" />
<rect x="849" y="709" width="1" height="7" fill="#e0e0e0" />
<rect x="849" y="715" width="174" height="1" fill="#e0e0e0" />
<rect x="1022" y="709" width="1" height="7" fill="#e0e0e0" />
<rect x="847.3" y="719.4" width="178.20000000000005" height="26.100000000000023" fill="#404040" />
<rect x="848" y="720" width="176" height="24" fill="#f0f0f0" />
<rect x="848" y="720" width="176" height="1" fill="#ffffff" />
<rect x="848" y="720" width="1" height="24" fill="#ffffff" />
<rect x="848" y="743" width="176" height="1" fill="#696969" />
<rect x="1023" y="720" width="1" height="24" fill="#696969" />
<rect x="849" y="721" width="174" height="1" fill="#ffffff" />
<rect x="849" y="721" width="1" height="22" fill="#ffffff" />
<rect x="849" y="742" width="174" height="1" fill="#a0a0a0" />
<rect x="1022" y="721" width="1" height="22" fill="#a0a0a0" />
<text x="936.4" y="737.3" font-size="13.5" fill="#000" font-weight="bold" text-anchor="middle" textLength="128.0" lengthAdjust="spacingAndGlyphs" >Fit to Diffraction Curve</text>
<rect x="1022.5" y="720.4" width="2.0" height="24.100000000000023" fill="#505050" />
<rect x="848.3" y="742.5" width="176.20000000000005" height="2.0" fill="#505050" />
<rect x="852" y="753" width="12" height="12" fill="#fff" />
<rect x="852" y="753" width="12" height="1" fill="#a0a0a0" />
<rect x="852" y="753" width="1" height="12" fill="#a0a0a0" />
<rect x="852" y="764" width="12" height="1" fill="#ffffff" />
<rect x="863" y="753" width="1" height="12" fill="#ffffff" />
<rect x="853" y="754" width="10" height="1" fill="#696969" />
<rect x="853" y="754" width="1" height="10" fill="#696969" />
<rect x="853" y="763" width="10" height="1" fill="#e3e3e3" />
<rect x="862" y="754" width="1" height="10" fill="#e3e3e3" />
<path d="M855,759.0 L857.04,761.5 L861,756" fill="none" stroke="#000" stroke-width="2"/>
<text x="870.6" y="763.5" font-size="12.5" fill="#000" textLength="33.0" lengthAdjust="spacingAndGlyphs" >Pop up</text>
<rect x="908" y="749" width="115" height="21" fill="#f0f0f0" />
<rect x="908" y="749" width="115" height="1" fill="#ffffff" />
<rect x="908" y="749" width="1" height="21" fill="#ffffff" />
<rect x="908" y="769" width="115" height="1" fill="#696969" />
<rect x="1022" y="749" width="1" height="21" fill="#696969" />
<rect x="909" y="750" width="113" height="1" fill="#ffffff" />
<rect x="909" y="750" width="1" height="19" fill="#ffffff" />
<rect x="909" y="768" width="113" height="1" fill="#a0a0a0" />
<rect x="1021" y="750" width="1" height="19" fill="#a0a0a0" />
<text x="965.5" y="764.1" font-size="13.5" fill="#000" font-weight="bold" text-anchor="middle" textLength="88.0" lengthAdjust="spacingAndGlyphs" >Magnitude Calc</text>
<rect x="844" y="771" width="184" height="1" fill="#a0a0a0" />
<rect x="844" y="772" width="184" height="1" fill="#fff" />
<rect x="892" y="780" width="12" height="12" fill="#fff" />
<rect x="892" y="780" width="12" height="1" fill="#a0a0a0" />
<rect x="892" y="780" width="1" height="12" fill="#a0a0a0" />
<rect x="892" y="791" width="12" height="1" fill="#ffffff" />
<rect x="903" y="780" width="1" height="12" fill="#ffffff" />
<rect x="893" y="781" width="10" height="1" fill="#696969" />
<rect x="893" y="781" width="1" height="10" fill="#696969" />
<rect x="893" y="790" width="10" height="1" fill="#e3e3e3" />
<rect x="902" y="781" width="1" height="10" fill="#e3e3e3" />
<text x="910.3" y="790.5" font-size="12.5" fill="#000" textLength="24.0" lengthAdjust="spacingAndGlyphs" >More</text>
<linearGradient id="fgr" x1="0" x2="1"><stop offset="0" stop-color="#000" stop-opacity="0"/><stop offset="1" stop-color="#000" stop-opacity="0.12"/></linearGradient>
<rect x="1008" y="34" width="28" height="771" fill="url(#fgr)" />
</g>
<rect x="844.5" y="9.5" width="191" height="795" rx="8" fill="none" stroke="#9a9a9a" stroke-opacity="0.6"/>
<rect x="1044" y="20" width="463" height="857" rx="8" fill="#000" opacity="0.45" filter="url(#shadow)"/>
<clipPath id="cmag"><rect x="1042" y="12" width="467" height="855" rx="8"/></clipPath>
<g clip-path="url(#cmag)">
<rect x="1042" y="12" width="467" height="855" fill="#f0f0f0" />
<rect x="1042" y="12" width="467" height="29" fill="#f3f3f3" />
<g transform="translate(1050,18) scale(1.0)"><path d="M0.5,0.5 H16 V16 H3 L0.5,14 Z" fill="#0000c0"/><rect x="6" y="0.5" width="10" height="9" fill="#000090"/><rect x="0.5" y="9.3" width="15.5" height="1.6" fill="#ffff00"/><rect x="4.2" y="1.5" width="2" height="14" fill="#ffff00"/><polygon points="5.2,5.5 8,10 5.2,14.5 2.4,10" fill="#ffff00"/><rect x="1" y="0.5" width="2" height="1.5" fill="#000"/><rect x="3" y="15" width="6" height="1.2" fill="#000"/><rect x="1.5" y="2.5" width="1" height="1" fill="#dde"/><rect x="11" y="2.2" width="1" height="1" fill="#fff"/><rect x="13" y="2.2" width="1" height="1" fill="#fff"/><rect x="15" y="3" width="1" height="1" fill="#fff"/><rect x="9" y="14" width="1" height="1" fill="#fff"/><rect x="11" y="14" width="1" height="1" fill="#fff"/><rect x="13" y="13.5" width="1" height="1" fill="#fff"/><rect x="15" y="14" width="1" height="1" fill="#fff"/></g>
<text x="1071.3" y="31.5" font-size="12.5" fill="#1a1a1a" textLength="186.0" lengthAdjust="spacingAndGlyphs" >Magnitude &amp; Event time Calculator</text>
<line x1="1390.5" y1="26.2" x2="1400.5" y2="26.2" stroke="#000" stroke-width="1"/>
<rect x="1435.5" y="21.7" width="9" height="9" rx="1.5" fill="none" stroke="#000" stroke-width="1"/>
<path d="M1480.6,21.2 L1490.6,31.2 M1490.6,21.2 L1480.6,31.2" stroke="#000" stroke-width="1"/>
<rect x="1043" y="48" width="140" height="37" fill="none" stroke="#a0a0a0" stroke-width="1" shape-rendering="crispEdges" transform="translate(0.5,0.5)"/>
<rect x="1044" y="49" width="140" height="37" fill="none" stroke="#ffffff" stroke-width="1" shape-rendering="crispEdges" transform="translate(0.5,0.5)" stroke-opacity="0.9"/>
<rect x="1048.7" y="46" width="135.0" height="5" fill="#f0f0f0" />
<text x="1050.7" y="52.7" font-size="13" fill="#000" font-weight="bold" textLength="131.0" lengthAdjust="spacingAndGlyphs" >Selection for analysis</text>
<circle cx="1056.5" cy="62.4" r="5" fill="#fff" stroke="#a0a0a0" stroke-width="1"/>
<path d="M1052.0,62.4 A4.5,4.5 0 0 1 1056.5,57.9" fill="none" stroke="#696969" stroke-width="1.5"/>
<circle cx="1056.5" cy="62.4" r="2" fill="#000"/>
<text x="1069.4" y="68.0" font-size="13" fill="#000" font-weight="bold" textLength="67.0" lengthAdjust="spacingAndGlyphs" >Timing only</text>
<circle cx="1056.5" cy="76" r="5" fill="#fff" stroke="#a0a0a0" stroke-width="1"/>
<path d="M1052.0,76 A4.5,4.5 0 0 1 1056.5,71.5" fill="none" stroke="#696969" stroke-width="1.5"/>
<text x="1069.4" y="81.3" font-size="13" fill="#000" font-weight="bold" textLength="113.0" lengthAdjust="spacingAndGlyphs" >Doublestar and time</text>
<rect x="1193" y="48" width="140" height="115" fill="none" stroke="#a0a0a0" stroke-width="1" shape-rendering="crispEdges" transform="translate(0.5,0.5)"/>
<rect x="1194" y="49" width="140" height="115" fill="none" stroke="#ffffff" stroke-width="1" shape-rendering="crispEdges" transform="translate(0.5,0.5)" stroke-opacity="0.9"/>
<rect x="1199" y="46" width="124" height="5" fill="#f0f0f0" />
<text x="1201.0" y="52.7" font-size="13" fill="#000" font-weight="bold" textLength="120.0" lengthAdjust="spacingAndGlyphs" >Statistic Calculation</text>
<text x="1212.0" y="68.2" font-size="13.5" fill="#000" textLength="121.0" lengthAdjust="spacingAndGlyphs" >Luminous Intensity</text>
<text x="1208.8" y="80.1" font-size="12" fill="#000" textLength="40.0" lengthAdjust="spacingAndGlyphs" >Average</text>
<text x="1263.0" y="80.1" font-size="12" fill="#000" textLength="60.0" lengthAdjust="spacingAndGlyphs" >Error Margin</text>
<text x="1110.8" y="104.6" font-size="14" fill="#000" font-weight="bold" textLength="78.0" lengthAdjust="spacingAndGlyphs" >First Event</text>
<text x="1090.6" y="128.1" font-size="14" fill="#000" font-weight="bold" textLength="100.0" lengthAdjust="spacingAndGlyphs" >Second Event</text>
<text x="1122.8" y="153.0" font-size="13" fill="#000" font-weight="bold" textLength="57.0" lengthAdjust="spacingAndGlyphs" >Combined</text>
<rect x="1202" y="84" width="48" height="19" fill="#fff" />
<rect x="1202" y="84" width="48" height="1" fill="#a0a0a0" />
<rect x="1202" y="84" width="1" height="19" fill="#a0a0a0" />
<rect x="1202" y="102" width="48" height="1" fill="#ffffff" />
<rect x="1249" y="84" width="1" height="19" fill="#ffffff" />
<rect x="1203" y="85" width="46" height="1" fill="#696969" />
<rect x="1203" y="85" width="1" height="17" fill="#696969" />
<rect x="1203" y="101" width="46" height="1" fill="#e3e3e3" />
<rect x="1248" y="85" width="1" height="17" fill="#e3e3e3" />
<text x="1205.2" y="98.6" font-size="13" fill="#000" textLength="24.0" lengthAdjust="spacingAndGlyphs" >21.3</text>
<text x="1254.8" y="100.3" font-size="12" fill="#000" font-weight="bold" textLength="17.0" lengthAdjust="spacingAndGlyphs" >+/-</text>
<rect x="1281" y="84" width="41" height="19" fill="#fff" />
<rect x="1281" y="84" width="41" height="1" fill="#a0a0a0" />
<rect x="1281" y="84" width="1" height="19" fill="#a0a0a0" />
<rect x="1281" y="102" width="41" height="1" fill="#ffffff" />
<rect x="1321" y="84" width="1" height="19" fill="#ffffff" />
<rect x="1282" y="85" width="39" height="1" fill="#696969" />
<rect x="1282" y="85" width="1" height="17" fill="#696969" />
<rect x="1282" y="101" width="39" height="1" fill="#e3e3e3" />
<rect x="1320" y="85" width="1" height="17" fill="#e3e3e3" />
<text x="1284.4" y="98.6" font-size="13" fill="#000" textLength="24.0" lengthAdjust="spacingAndGlyphs" >59.1</text>
<rect x="1202" y="108" width="48" height="19" fill="#fff" />
<rect x="1202" y="108" width="48" height="1" fill="#a0a0a0" />
<rect x="1202" y="108" width="1" height="19" fill="#a0a0a0" />
<rect x="1202" y="126" width="48" height="1" fill="#ffffff" />
<rect x="1249" y="108" width="1" height="19" fill="#ffffff" />
<rect x="1203" y="109" width="46" height="1" fill="#696969" />
<rect x="1203" y="109" width="1" height="17" fill="#696969" />
<rect x="1203" y="125" width="46" height="1" fill="#e3e3e3" />
<rect x="1248" y="109" width="1" height="17" fill="#e3e3e3" />
<text x="1205.2" y="121.8" font-size="13" fill="#000" textLength="37.8" lengthAdjust="spacingAndGlyphs" >2363.9</text>
<text x="1254.8" y="123.5" font-size="12" fill="#000" font-weight="bold" textLength="17.0" lengthAdjust="spacingAndGlyphs" >+/-</text>
<rect x="1281" y="108" width="41" height="19" fill="#fff" />
<rect x="1281" y="108" width="41" height="1" fill="#a0a0a0" />
<rect x="1281" y="108" width="1" height="19" fill="#a0a0a0" />
<rect x="1281" y="126" width="41" height="1" fill="#ffffff" />
<rect x="1321" y="108" width="1" height="19" fill="#ffffff" />
<rect x="1282" y="109" width="39" height="1" fill="#696969" />
<rect x="1282" y="109" width="1" height="17" fill="#696969" />
<rect x="1282" y="125" width="39" height="1" fill="#e3e3e3" />
<rect x="1320" y="109" width="1" height="17" fill="#e3e3e3" />
<text x="1284.4" y="121.8" font-size="13" fill="#000" textLength="30.0" lengthAdjust="spacingAndGlyphs" >112.3</text>
<rect x="1202" y="138" width="48" height="20" fill="#fff" />
<rect x="1202" y="138" width="48" height="1" fill="#a0a0a0" />
<rect x="1202" y="138" width="1" height="20" fill="#a0a0a0" />
<rect x="1202" y="157" width="48" height="1" fill="#ffffff" />
<rect x="1249" y="138" width="1" height="20" fill="#ffffff" />
<rect x="1203" y="139" width="46" height="1" fill="#696969" />
<rect x="1203" y="139" width="1" height="18" fill="#696969" />
<rect x="1203" y="156" width="46" height="1" fill="#e3e3e3" />
<rect x="1248" y="139" width="1" height="18" fill="#e3e3e3" />
<text x="1205.2" y="152.6" font-size="13" fill="#000" textLength="37.8" lengthAdjust="spacingAndGlyphs" >2342.6</text>
<text x="1254.8" y="154.3" font-size="12" fill="#000" font-weight="bold" textLength="17.0" lengthAdjust="spacingAndGlyphs" >+/-</text>
<rect x="1281" y="138" width="41" height="20" fill="#fff" />
<rect x="1281" y="138" width="41" height="1" fill="#a0a0a0" />
<rect x="1281" y="138" width="1" height="20" fill="#a0a0a0" />
<rect x="1281" y="157" width="41" height="1" fill="#ffffff" />
<rect x="1321" y="138" width="1" height="20" fill="#ffffff" />
<rect x="1282" y="139" width="39" height="1" fill="#696969" />
<rect x="1282" y="139" width="1" height="18" fill="#696969" />
<rect x="1282" y="156" width="39" height="1" fill="#e3e3e3" />
<rect x="1320" y="139" width="1" height="18" fill="#e3e3e3" />
<text x="1284.4" y="152.6" font-size="13" fill="#000" textLength="30.9" lengthAdjust="spacingAndGlyphs" >171.4</text>
<rect x="1343" y="48" width="141" height="81" fill="none" stroke="#a0a0a0" stroke-width="1" shape-rendering="crispEdges" transform="translate(0.5,0.5)"/>
<rect x="1344" y="49" width="141" height="81" fill="none" stroke="#ffffff" stroke-width="1" shape-rendering="crispEdges" transform="translate(0.5,0.5)" stroke-opacity="0.9"/>
<rect x="1348.6" y="46" width="61.0" height="5" fill="#f0f0f0" />
<text x="1350.6" y="52.7" font-size="13" fill="#000" font-weight="bold" textLength="57.0" lengthAdjust="spacingAndGlyphs" >Estimation</text>
<text x="1365.3" y="70.2" font-size="14" fill="#000" font-weight="bold" textLength="71.0" lengthAdjust="spacingAndGlyphs" >Magnitude</text>
<text x="1360.5" y="80.1" font-size="12" fill="#000" textLength="24.0" lengthAdjust="spacingAndGlyphs" >Mag.</text>
<text x="1416.8" y="80.1" font-size="12" fill="#000" textLength="62.0" lengthAdjust="spacingAndGlyphs" >Error Margin</text>
<rect x="1358" y="84" width="40" height="19" fill="#fff" />
<rect x="1358" y="84" width="40" height="1" fill="#a0a0a0" />
<rect x="1358" y="84" width="1" height="19" fill="#a0a0a0" />
<rect x="1358" y="102" width="40" height="1" fill="#ffffff" />
<rect x="1397" y="84" width="1" height="19" fill="#ffffff" />
<rect x="1359" y="85" width="38" height="1" fill="#696969" />
<rect x="1359" y="85" width="1" height="17" fill="#696969" />
<rect x="1359" y="101" width="38" height="1" fill="#e3e3e3" />
<rect x="1396" y="85" width="1" height="17" fill="#e3e3e3" />
<text x="1361.3" y="98.6" font-size="13" fill="#000" font-weight="bold" textLength="29.3" lengthAdjust="spacingAndGlyphs" >13.41</text>
<text x="1403.9" y="100.3" font-size="12" fill="#000" font-weight="bold" textLength="17.0" lengthAdjust="spacingAndGlyphs" >+/-</text>
<rect x="1430" y="84" width="40" height="19" fill="#fff" />
<rect x="1430" y="84" width="40" height="1" fill="#a0a0a0" />
<rect x="1430" y="84" width="1" height="19" fill="#a0a0a0" />
<rect x="1430" y="102" width="40" height="1" fill="#ffffff" />
<rect x="1469" y="84" width="1" height="19" fill="#ffffff" />
<rect x="1431" y="85" width="38" height="1" fill="#696969" />
<rect x="1431" y="85" width="1" height="17" fill="#696969" />
<rect x="1431" y="101" width="38" height="1" fill="#e3e3e3" />
<rect x="1468" y="85" width="1" height="17" fill="#e3e3e3" />
<text x="1433.0" y="98.6" font-size="13" fill="#000" font-weight="bold" textLength="22.8" lengthAdjust="spacingAndGlyphs" >1.44</text>
<rect x="1358" y="108" width="40" height="19" fill="#fff" />
<rect x="1358" y="108" width="40" height="1" fill="#a0a0a0" />
<rect x="1358" y="108" width="1" height="19" fill="#a0a0a0" />
<rect x="1358" y="126" width="40" height="1" fill="#ffffff" />
<rect x="1397" y="108" width="1" height="19" fill="#ffffff" />
<rect x="1359" y="109" width="38" height="1" fill="#696969" />
<rect x="1359" y="109" width="1" height="17" fill="#696969" />
<rect x="1359" y="125" width="38" height="1" fill="#e3e3e3" />
<rect x="1396" y="109" width="1" height="17" fill="#e3e3e3" />
<text x="1361.3" y="121.8" font-size="13" fill="#000" font-weight="bold" textLength="22.8" lengthAdjust="spacingAndGlyphs" >8.29</text>
<text x="1403.9" y="123.5" font-size="12" fill="#000" font-weight="bold" textLength="17.0" lengthAdjust="spacingAndGlyphs" >+/-</text>
<rect x="1430" y="108" width="40" height="19" fill="#fff" />
<rect x="1430" y="108" width="40" height="1" fill="#a0a0a0" />
<rect x="1430" y="108" width="1" height="19" fill="#a0a0a0" />
<rect x="1430" y="126" width="40" height="1" fill="#ffffff" />
<rect x="1469" y="108" width="1" height="19" fill="#ffffff" />
<rect x="1431" y="109" width="38" height="1" fill="#696969" />
<rect x="1431" y="109" width="1" height="17" fill="#696969" />
<rect x="1431" y="125" width="38" height="1" fill="#e3e3e3" />
<rect x="1468" y="109" width="1" height="17" fill="#e3e3e3" />
<text x="1433.0" y="121.8" font-size="13" fill="#000" font-weight="bold" textLength="22.8" lengthAdjust="spacingAndGlyphs" >0.09</text>
<text x="1340.8" y="143.5" font-size="13" fill="#000" font-weight="bold" textLength="149.0" lengthAdjust="spacingAndGlyphs" >Assuming Pair's Mag. as:</text>
<rect x="1357" y="150" width="39" height="17" fill="#fff" />
<rect x="1357" y="150" width="39" height="1" fill="#a0a0a0" />
<rect x="1357" y="150" width="1" height="17" fill="#a0a0a0" />
<rect x="1357" y="166" width="39" height="1" fill="#ffffff" />
<rect x="1395" y="150" width="1" height="17" fill="#ffffff" />
<rect x="1358" y="151" width="37" height="1" fill="#696969" />
<rect x="1358" y="151" width="1" height="15" fill="#696969" />
<rect x="1358" y="165" width="37" height="1" fill="#e3e3e3" />
<rect x="1394" y="151" width="1" height="15" fill="#e3e3e3" />
<text x="1359.8" y="163.2" font-size="13" fill="#000" font-weight="bold" textLength="23.0" lengthAdjust="spacingAndGlyphs" >8.30</text>
<rect x="1396" y="147" width="16" height="11" fill="#f0f0f0" />
<rect x="1396" y="147" width="16" height="1" fill="#ffffff" />
<rect x="1396" y="147" width="1" height="11" fill="#ffffff" />
<rect x="1396" y="157" width="16" height="1" fill="#696969" />
<rect x="1411" y="147" width="1" height="11" fill="#696969" />
<rect x="1397" y="148" width="14" height="1" fill="#ffffff" />
<rect x="1397" y="148" width="1" height="9" fill="#ffffff" />
<rect x="1397" y="156" width="14" height="1" fill="#a0a0a0" />
<rect x="1410" y="148" width="1" height="9" fill="#a0a0a0" />
<polygon points="1401.0,154.0 1407.0,154.0 1404.0,151.0" fill="#000"/>
<rect x="1396" y="158" width="16" height="11" fill="#f0f0f0" />
<rect x="1396" y="158" width="16" height="1" fill="#ffffff" />
<rect x="1396" y="158" width="1" height="11" fill="#ffffff" />
<rect x="1396" y="168" width="16" height="1" fill="#696969" />
<rect x="1411" y="158" width="1" height="11" fill="#696969" />
<rect x="1397" y="159" width="14" height="1" fill="#ffffff" />
<rect x="1397" y="159" width="1" height="9" fill="#ffffff" />
<rect x="1397" y="167" width="14" height="1" fill="#a0a0a0" />
<rect x="1410" y="159" width="1" height="9" fill="#a0a0a0" />
<polygon points="1401.0,162.25 1407.0,162.25 1404.0,165.25" fill="#000"/>
<rect x="1412" y="147" width="16" height="11" fill="#f0f0f0" />
<rect x="1412" y="147" width="16" height="1" fill="#ffffff" />
<rect x="1412" y="147" width="1" height="11" fill="#ffffff" />
<rect x="1412" y="157" width="16" height="1" fill="#696969" />
<rect x="1427" y="147" width="1" height="11" fill="#696969" />
<rect x="1413" y="148" width="14" height="1" fill="#ffffff" />
<rect x="1413" y="148" width="1" height="9" fill="#ffffff" />
<rect x="1413" y="156" width="14" height="1" fill="#a0a0a0" />
<rect x="1426" y="148" width="1" height="9" fill="#a0a0a0" />
<polygon points="1417.0,154.0 1423.0,154.0 1420.0,151.0" fill="#000"/>
<rect x="1412" y="158" width="16" height="11" fill="#f0f0f0" />
<rect x="1412" y="158" width="16" height="1" fill="#ffffff" />
<rect x="1412" y="158" width="1" height="11" fill="#ffffff" />
<rect x="1412" y="168" width="16" height="1" fill="#696969" />
<rect x="1427" y="158" width="1" height="11" fill="#696969" />
<rect x="1413" y="159" width="14" height="1" fill="#ffffff" />
<rect x="1413" y="159" width="1" height="9" fill="#ffffff" />
<rect x="1413" y="167" width="14" height="1" fill="#a0a0a0" />
<rect x="1426" y="159" width="1" height="9" fill="#a0a0a0" />
<polygon points="1417.0,162.25 1423.0,162.25 1420.0,165.25" fill="#000"/>
<rect x="1428" y="147" width="16" height="11" fill="#f0f0f0" />
<rect x="1428" y="147" width="16" height="1" fill="#ffffff" />
<rect x="1428" y="147" width="1" height="11" fill="#ffffff" />
<rect x="1428" y="157" width="16" height="1" fill="#696969" />
<rect x="1443" y="147" width="1" height="11" fill="#696969" />
<rect x="1429" y="148" width="14" height="1" fill="#ffffff" />
<rect x="1429" y="148" width="1" height="9" fill="#ffffff" />
<rect x="1429" y="156" width="14" height="1" fill="#a0a0a0" />
<rect x="1442" y="148" width="1" height="9" fill="#a0a0a0" />
<polygon points="1433.0,154.0 1439.0,154.0 1436.0,151.0" fill="#000"/>
<rect x="1428" y="158" width="16" height="11" fill="#f0f0f0" />
<rect x="1428" y="158" width="16" height="1" fill="#ffffff" />
<rect x="1428" y="158" width="1" height="11" fill="#ffffff" />
<rect x="1428" y="168" width="16" height="1" fill="#696969" />
<rect x="1443" y="158" width="1" height="11" fill="#696969" />
<rect x="1429" y="159" width="14" height="1" fill="#ffffff" />
<rect x="1429" y="159" width="1" height="9" fill="#ffffff" />
<rect x="1429" y="167" width="14" height="1" fill="#a0a0a0" />
<rect x="1442" y="159" width="1" height="9" fill="#a0a0a0" />
<polygon points="1433.0,162.25 1439.0,162.25 1436.0,165.25" fill="#000"/>
<line x1="1050" y1="173.5" x2="1275" y2="173.5" stroke="#99c2e8" stroke-width="2" />
<rect x="1043" y="186" width="237" height="111" fill="none" stroke="#a0a0a0" stroke-width="1" shape-rendering="crispEdges" transform="translate(0.5,0.5)"/>
<rect x="1044" y="187" width="237" height="111" fill="none" stroke="#ffffff" stroke-width="1" shape-rendering="crispEdges" transform="translate(0.5,0.5)" stroke-opacity="0.9"/>
<rect x="1048.7" y="184" width="174.0" height="5" fill="#f0f0f0" />
<text x="1050.7" y="190.5" font-size="12.5" fill="#000" textLength="170.0" lengthAdjust="spacingAndGlyphs" >Select the BaseTime for Event Time</text>
<text x="1062.4" y="211.1" font-size="12.5" fill="#000" textLength="130.0" lengthAdjust="spacingAndGlyphs" >Selected frame (Base) : No.</text>
<rect x="1199" y="196" width="76" height="18" fill="#fff" />
<rect x="1199" y="196" width="76" height="1" fill="#a0a0a0" />
<rect x="1199" y="196" width="1" height="18" fill="#a0a0a0" />
<rect x="1199" y="213" width="76" height="1" fill="#ffffff" />
<rect x="1274" y="196" width="1" height="18" fill="#ffffff" />
<rect x="1200" y="197" width="74" height="1" fill="#696969" />
<rect x="1200" y="197" width="1" height="16" fill="#696969" />
<rect x="1200" y="212" width="74" height="1" fill="#e3e3e3" />
<rect x="1273" y="197" width="1" height="16" fill="#e3e3e3" />
<circle cx="1064.3" cy="224.2" r="5" fill="#fff" stroke="#a0a0a0" stroke-width="1"/>
<path d="M1059.8,224.2 A4.5,4.5 0 0 1 1064.3,219.7" fill="none" stroke="#696969" stroke-width="1.5"/>
<circle cx="1064.3" cy="224.2" r="2" fill="#000"/>
<text x="1076.2" y="228.3" font-size="12.5" fill="#000" textLength="41.0" lengthAdjust="spacingAndGlyphs" >First field</text>
<circle cx="1152.4" cy="224.2" r="5" fill="#fff" stroke="#a0a0a0" stroke-width="1"/>
<path d="M1147.9,224.2 A4.5,4.5 0 0 1 1152.4,219.7" fill="none" stroke="#696969" stroke-width="1.5"/>
<text x="1164.5" y="228.3" font-size="12.5" fill="#000" textLength="58.0" lengthAdjust="spacingAndGlyphs" >Second field</text>
<text x="1250.3" y="227.5" font-size="12.5" fill="#000" textLength="29.0" lengthAdjust="spacingAndGlyphs" >Graph</text>
<rect x="1059" y="236" width="17" height="18" fill="#fff" />
<rect x="1059" y="236" width="17" height="1" fill="#a0a0a0" />
<rect x="1059" y="236" width="1" height="18" fill="#a0a0a0" />
<rect x="1059" y="253" width="17" height="1" fill="#ffffff" />
<rect x="1075" y="236" width="1" height="18" fill="#ffffff" />
<rect x="1060" y="237" width="15" height="1" fill="#696969" />
<rect x="1060" y="237" width="1" height="16" fill="#696969" />
<rect x="1060" y="252" width="15" height="1" fill="#e3e3e3" />
<rect x="1074" y="237" width="1" height="16" fill="#e3e3e3" />
<text x="1061.6" y="249.7" font-size="12.5" fill="#000" textLength="13.2" lengthAdjust="spacingAndGlyphs" >17</text>
<rect x="1078" y="236" width="18" height="18" fill="#fff" />
<rect x="1078" y="236" width="18" height="1" fill="#a0a0a0" />
<rect x="1078" y="236" width="1" height="18" fill="#a0a0a0" />
<rect x="1078" y="253" width="18" height="1" fill="#ffffff" />
<rect x="1095" y="236" width="1" height="18" fill="#ffffff" />
<rect x="1079" y="237" width="16" height="1" fill="#696969" />
<rect x="1079" y="237" width="1" height="16" fill="#696969" />
<rect x="1079" y="252" width="16" height="1" fill="#e3e3e3" />
<rect x="1094" y="237" width="1" height="16" fill="#e3e3e3" />
<text x="1081.3" y="249.7" font-size="12.5" fill="#000" textLength="13.2" lengthAdjust="spacingAndGlyphs" >26</text>
<rect x="1099" y="236" width="45" height="18" fill="#fff" />
<rect x="1099" y="236" width="45" height="1" fill="#a0a0a0" />
<rect x="1099" y="236" width="1" height="18" fill="#a0a0a0" />
<rect x="1099" y="253" width="45" height="1" fill="#ffffff" />
<rect x="1143" y="236" width="1" height="18" fill="#ffffff" />
<rect x="1100" y="237" width="43" height="1" fill="#696969" />
<rect x="1100" y="237" width="1" height="16" fill="#696969" />
<rect x="1100" y="252" width="43" height="1" fill="#e3e3e3" />
<rect x="1142" y="237" width="1" height="16" fill="#e3e3e3" />
<text x="1101.6" y="249.7" font-size="12.5" fill="#000" textLength="36.3" lengthAdjust="spacingAndGlyphs" >4.7153</text>
<rect x="1162" y="236" width="18" height="18" fill="#fff" />
<rect x="1162" y="236" width="18" height="1" fill="#a0a0a0" />
<rect x="1162" y="236" width="1" height="18" fill="#a0a0a0" />
<rect x="1162" y="253" width="18" height="1" fill="#ffffff" />
<rect x="1179" y="236" width="1" height="18" fill="#ffffff" />
<rect x="1163" y="237" width="16" height="1" fill="#696969" />
<rect x="1163" y="237" width="1" height="16" fill="#696969" />
<rect x="1163" y="252" width="16" height="1" fill="#e3e3e3" />
<rect x="1178" y="237" width="1" height="16" fill="#e3e3e3" />
<text x="1165.4" y="249.7" font-size="12.5" fill="#000" textLength="13.2" lengthAdjust="spacingAndGlyphs" >17</text>
<rect x="1183" y="236" width="17" height="18" fill="#fff" />
<rect x="1183" y="236" width="17" height="1" fill="#a0a0a0" />
<rect x="1183" y="236" width="1" height="18" fill="#a0a0a0" />
<rect x="1183" y="253" width="17" height="1" fill="#ffffff" />
<rect x="1199" y="236" width="1" height="18" fill="#ffffff" />
<rect x="1184" y="237" width="15" height="1" fill="#696969" />
<rect x="1184" y="237" width="1" height="16" fill="#696969" />
<rect x="1184" y="252" width="15" height="1" fill="#e3e3e3" />
<rect x="1198" y="237" width="1" height="16" fill="#e3e3e3" />
<text x="1185.8" y="249.7" font-size="12.5" fill="#000" textLength="13.2" lengthAdjust="spacingAndGlyphs" >26</text>
<rect x="1203" y="236" width="46" height="18" fill="#fff" />
<rect x="1203" y="236" width="46" height="1" fill="#a0a0a0" />
<rect x="1203" y="236" width="1" height="18" fill="#a0a0a0" />
<rect x="1203" y="253" width="46" height="1" fill="#ffffff" />
<rect x="1248" y="236" width="1" height="18" fill="#ffffff" />
<rect x="1204" y="237" width="44" height="1" fill="#696969" />
<rect x="1204" y="237" width="1" height="16" fill="#696969" />
<rect x="1204" y="252" width="44" height="1" fill="#e3e3e3" />
<rect x="1247" y="237" width="1" height="16" fill="#e3e3e3" />
<text x="1205.6" y="249.7" font-size="12.5" fill="#000" textLength="36.3" lengthAdjust="spacingAndGlyphs" >4.8163</text>
<rect x="1258" y="232" width="16" height="21" fill="#f0f0f0" />
<rect x="1258" y="232" width="16" height="1" fill="#ffffff" />
<rect x="1258" y="232" width="1" height="21" fill="#ffffff" />
<rect x="1258" y="252" width="16" height="1" fill="#696969" />
<rect x="1273" y="232" width="1" height="21" fill="#696969" />
<rect x="1259" y="233" width="14" height="1" fill="#ffffff" />
<rect x="1259" y="233" width="1" height="19" fill="#ffffff" />
<rect x="1259" y="251" width="14" height="1" fill="#a0a0a0" />
<rect x="1272" y="233" width="1" height="19" fill="#a0a0a0" />
<polygon points="1260.8,245.15 1271.8,245.15 1266.3,239.65" fill="#000"/>
<rect x="1258" y="257" width="16" height="20" fill="#f0f0f0" />
<rect x="1258" y="257" width="16" height="1" fill="#ffffff" />
<rect x="1258" y="257" width="1" height="20" fill="#ffffff" />
<rect x="1258" y="276" width="16" height="1" fill="#696969" />
<rect x="1273" y="257" width="1" height="20" fill="#696969" />
<rect x="1259" y="258" width="14" height="1" fill="#ffffff" />
<rect x="1259" y="258" width="1" height="18" fill="#ffffff" />
<rect x="1259" y="275" width="14" height="1" fill="#a0a0a0" />
<rect x="1272" y="258" width="1" height="18" fill="#a0a0a0" />
<polygon points="1260.8,264.29999999999995 1271.8,264.29999999999995 1266.3,269.79999999999995" fill="#000"/>
<rect x="1051" y="261" width="199" height="15" fill="#f0f0f0" />
<rect x="1051" y="261" width="199" height="1" fill="#ffffff" />
<rect x="1051" y="261" width="1" height="15" fill="#ffffff" />
<rect x="1051" y="275" width="199" height="1" fill="#696969" />
<rect x="1249" y="261" width="1" height="15" fill="#696969" />
<rect x="1052" y="262" width="197" height="1" fill="#ffffff" />
<rect x="1052" y="262" width="1" height="13" fill="#ffffff" />
<rect x="1052" y="274" width="197" height="1" fill="#a0a0a0" />
<rect x="1248" y="262" width="1" height="13" fill="#a0a0a0" />
<text x="1150.5" y="273.1" font-size="12.5" fill="#000" text-anchor="middle" textLength="181.0" lengthAdjust="spacingAndGlyphs" >Apply the edit time and Re-open graph</text>
<rect x="1051" y="280" width="199" height="15" fill="#f0f0f0" />
<rect x="1051" y="280" width="199" height="1" fill="#ffffff" />
<rect x="1051" y="280" width="1" height="15" fill="#ffffff" />
<rect x="1051" y="294" width="199" height="1" fill="#696969" />
<rect x="1249" y="280" width="1" height="15" fill="#696969" />
<rect x="1052" y="281" width="197" height="1" fill="#ffffff" />
<rect x="1052" y="281" width="1" height="13" fill="#ffffff" />
<rect x="1052" y="293" width="197" height="1" fill="#a0a0a0" />
<rect x="1248" y="281" width="1" height="13" fill="#a0a0a0" />
<text x="1150.5" y="292.1" font-size="12.5" fill="#000" text-anchor="middle" textLength="188.0" lengthAdjust="spacingAndGlyphs" >Re-read  Time Stamp from current frame</text>
<text x="1255.2" y="290.4" font-size="12.5" fill="#000" textLength="22.0" lengthAdjust="spacingAndGlyphs" >Time</text>
<rect x="1298" y="176" width="201" height="19" fill="#f0f0f0" />
<rect x="1298" y="176" width="201" height="1" fill="#ffffff" />
<rect x="1298" y="176" width="1" height="19" fill="#ffffff" />
<rect x="1298" y="194" width="201" height="1" fill="#696969" />
<rect x="1498" y="176" width="1" height="19" fill="#696969" />
<rect x="1299" y="177" width="199" height="1" fill="#ffffff" />
<rect x="1299" y="177" width="1" height="17" fill="#ffffff" />
<rect x="1299" y="193" width="199" height="1" fill="#a0a0a0" />
<rect x="1497" y="177" width="1" height="17" fill="#a0a0a0" />
<text x="1398.5" y="190.5" font-size="13" fill="#000" font-weight="bold" text-anchor="middle" textLength="178.0" lengthAdjust="spacingAndGlyphs" >Add doublestar result to Report</text>
<line x1="1289.5" y1="197.5" x2="1498" y2="197.5" stroke="#99c2e8" stroke-width="2" />
<text x="1290.3" y="213.6" font-size="12.5" fill="#000" textLength="48.0" lengthAdjust="spacingAndGlyphs" >Integrated</text>
<text x="1290.3" y="225.7" font-size="12.5" fill="#000" textLength="31.0" lengthAdjust="spacingAndGlyphs" >frames</text>
<rect x="1346" y="210" width="32" height="19" fill="#fff" />
<rect x="1346" y="210" width="32" height="1" fill="#a0a0a0" />
<rect x="1346" y="210" width="1" height="19" fill="#a0a0a0" />
<rect x="1346" y="228" width="32" height="1" fill="#ffffff" />
<rect x="1377" y="210" width="1" height="19" fill="#ffffff" />
<rect x="1347" y="211" width="30" height="1" fill="#696969" />
<rect x="1347" y="211" width="1" height="17" fill="#696969" />
<rect x="1347" y="227" width="30" height="1" fill="#e3e3e3" />
<rect x="1376" y="211" width="1" height="17" fill="#e3e3e3" />
<text x="1349.4" y="223.8" font-size="12.5" fill="#000" >0</text>
<rect x="1378" y="209" width="17" height="12" fill="#f0f0f0" />
<rect x="1378" y="209" width="17" height="1" fill="#ffffff" />
<rect x="1378" y="209" width="1" height="12" fill="#ffffff" />
<rect x="1378" y="220" width="17" height="1" fill="#696969" />
<rect x="1394" y="209" width="1" height="12" fill="#696969" />
<rect x="1379" y="210" width="15" height="1" fill="#ffffff" />
<rect x="1379" y="210" width="1" height="10" fill="#ffffff" />
<rect x="1379" y="219" width="15" height="1" fill="#a0a0a0" />
<rect x="1393" y="210" width="1" height="10" fill="#a0a0a0" />
<polygon points="1383.5,216.4 1389.5,216.4 1386.5,213.4" fill="#000"/>
<rect x="1378" y="222" width="17" height="11" fill="#f0f0f0" />
<rect x="1378" y="222" width="17" height="1" fill="#ffffff" />
<rect x="1378" y="222" width="1" height="11" fill="#ffffff" />
<rect x="1378" y="232" width="17" height="1" fill="#696969" />
<rect x="1394" y="222" width="1" height="11" fill="#696969" />
<rect x="1379" y="223" width="15" height="1" fill="#ffffff" />
<rect x="1379" y="223" width="1" height="9" fill="#ffffff" />
<rect x="1379" y="231" width="15" height="1" fill="#a0a0a0" />
<rect x="1393" y="223" width="1" height="9" fill="#a0a0a0" />
<polygon points="1383.5,225.9 1389.5,225.9 1386.5,228.9" fill="#000"/>
<text x="1402.4" y="220.5" font-size="12.5" fill="#000" textLength="26.0" lengthAdjust="spacingAndGlyphs" >Digits</text>
<rect x="1434" y="210" width="24" height="19" fill="#fff" />
<rect x="1434" y="210" width="24" height="1" fill="#a0a0a0" />
<rect x="1434" y="210" width="1" height="19" fill="#a0a0a0" />
<rect x="1434" y="228" width="24" height="1" fill="#ffffff" />
<rect x="1457" y="210" width="1" height="19" fill="#ffffff" />
<rect x="1435" y="211" width="22" height="1" fill="#696969" />
<rect x="1435" y="211" width="1" height="17" fill="#696969" />
<rect x="1435" y="227" width="22" height="1" fill="#e3e3e3" />
<rect x="1456" y="211" width="1" height="17" fill="#e3e3e3" />
<text x="1437.3" y="223.8" font-size="12.5" fill="#000" >3</text>
<rect x="1458" y="209" width="17" height="12" fill="#f0f0f0" />
<rect x="1458" y="209" width="17" height="1" fill="#ffffff" />
<rect x="1458" y="209" width="1" height="12" fill="#ffffff" />
<rect x="1458" y="220" width="17" height="1" fill="#696969" />
<rect x="1474" y="209" width="1" height="12" fill="#696969" />
<rect x="1459" y="210" width="15" height="1" fill="#ffffff" />
<rect x="1459" y="210" width="1" height="10" fill="#ffffff" />
<rect x="1459" y="219" width="15" height="1" fill="#a0a0a0" />
<rect x="1473" y="210" width="1" height="10" fill="#a0a0a0" />
<polygon points="1463.4,216.4 1469.4,216.4 1466.4,213.4" fill="#000"/>
<rect x="1458" y="222" width="17" height="11" fill="#f0f0f0" />
<rect x="1458" y="222" width="17" height="1" fill="#ffffff" />
<rect x="1458" y="222" width="1" height="11" fill="#ffffff" />
<rect x="1458" y="232" width="17" height="1" fill="#696969" />
<rect x="1474" y="222" width="1" height="11" fill="#696969" />
<rect x="1459" y="223" width="15" height="1" fill="#ffffff" />
<rect x="1459" y="223" width="1" height="9" fill="#ffffff" />
<rect x="1459" y="231" width="15" height="1" fill="#a0a0a0" />
<rect x="1473" y="223" width="1" height="9" fill="#a0a0a0" />
<polygon points="1463.4,225.9 1469.4,225.9 1466.4,228.9" fill="#000"/>
<rect x="1290" y="241" width="12" height="12" fill="#fff" />
<rect x="1290" y="241" width="12" height="1" fill="#a0a0a0" />
<rect x="1290" y="241" width="1" height="12" fill="#a0a0a0" />
<rect x="1290" y="252" width="12" height="1" fill="#ffffff" />
<rect x="1301" y="241" width="1" height="12" fill="#ffffff" />
<rect x="1291" y="242" width="10" height="1" fill="#696969" />
<rect x="1291" y="242" width="1" height="10" fill="#696969" />
<rect x="1291" y="251" width="10" height="1" fill="#e3e3e3" />
<rect x="1300" y="242" width="1" height="10" fill="#e3e3e3" />
<text x="1308.4" y="250.7" font-size="12.5" fill="#000" textLength="177.0" lengthAdjust="spacingAndGlyphs" >Consider step hight for time estimation</text>
<rect x="1290" y="263" width="215" height="43" fill="none" stroke="#a0a0a0" stroke-width="1" shape-rendering="crispEdges" transform="translate(0.5,0.5)"/>
<rect x="1291" y="264" width="215" height="43" fill="none" stroke="#ffffff" stroke-width="1" shape-rendering="crispEdges" transform="translate(0.5,0.5)" stroke-opacity="0.9"/>
<rect x="1295.6" y="261" width="149.0" height="5" fill="#f0f0f0" />
<text x="1297.6" y="267.7" font-size="13" fill="#000" font-weight="bold" textLength="145.0" lengthAdjust="spacingAndGlyphs" >Calculation for event time</text>
<circle cx="1305.4" cy="280.7" r="5" fill="#fff" stroke="#a0a0a0" stroke-width="1"/>
<path d="M1300.9,280.7 A4.5,4.5 0 0 1 1305.4,276.2" fill="none" stroke="#696969" stroke-width="1.5"/>
<text x="1317.6" y="285.2" font-size="12.5" fill="#000" textLength="18.0" lengthAdjust="spacingAndGlyphs" >OFF</text>
<circle cx="1351.5" cy="280.7" r="5" fill="#fff" stroke="#a0a0a0" stroke-width="1"/>
<path d="M1347.0,280.7 A4.5,4.5 0 0 1 1351.5,276.2" fill="none" stroke="#696969" stroke-width="1.5"/>
<text x="1363.1" y="285.2" font-size="12.5" fill="#000" textLength="50.0" lengthAdjust="spacingAndGlyphs" >WAT120N</text>
<circle cx="1431.8" cy="280.7" r="5" fill="#fff" stroke="#a0a0a0" stroke-width="1"/>
<path d="M1427.3,280.7 A4.5,4.5 0 0 1 1431.8,276.2" fill="none" stroke="#696969" stroke-width="1.5"/>
<text x="1443.0" y="285.2" font-size="12.5" fill="#000" textLength="55.0" lengthAdjust="spacingAndGlyphs" >WAT910HX</text>
<circle cx="1350.7" cy="296.5" r="5" fill="#fff" stroke="#a0a0a0" stroke-width="1"/>
<path d="M1346.2,296.5 A4.5,4.5 0 0 1 1350.7,292.0" fill="none" stroke="#696969" stroke-width="1.5"/>
<circle cx="1350.7" cy="296.5" r="2" fill="#000"/>
<text x="1362.8" y="301.3" font-size="13" fill="#000" font-weight="bold" textLength="110.0" lengthAdjust="spacingAndGlyphs" >CMOS or WAT100N</text>
<rect x="1043" y="315" width="463" height="46" fill="#fff" />
<rect x="1043" y="315" width="463" height="1" fill="#a0a0a0" />
<rect x="1043" y="315" width="1" height="46" fill="#a0a0a0" />
<rect x="1043" y="360" width="463" height="1" fill="#fff" />
<rect x="1505" y="315" width="1" height="46" fill="#fff" />
<rect x="1044" y="316" width="461" height="1" fill="#696969" />
<rect x="1044" y="316" width="1" height="44" fill="#696969" />
<rect x="1044" y="359" width="461" height="1" fill="#e3e3e3" />
<rect x="1504" y="316" width="1" height="44" fill="#e3e3e3" />
<rect x="1443" y="347" width="64" height="23" fill="#f0f0f0" />
<rect x="1443" y="347" width="64" height="1" fill="#ffffff" />
<rect x="1443" y="347" width="1" height="23" fill="#ffffff" />
<rect x="1443" y="369" width="64" height="1" fill="#696969" />
<rect x="1506" y="347" width="1" height="23" fill="#696969" />
<rect x="1444" y="348" width="62" height="1" fill="#ffffff" />
<rect x="1444" y="348" width="1" height="21" fill="#ffffff" />
<rect x="1444" y="368" width="62" height="1" fill="#a0a0a0" />
<rect x="1505" y="348" width="1" height="21" fill="#a0a0a0" />
<text x="1474.6" y="362.9" font-size="12" fill="#000" text-anchor="middle" textLength="52.0" lengthAdjust="spacingAndGlyphs" >-&gt; Clip brd.</text>
<rect x="1045" y="377" width="461" height="256" fill="#fff" />
<rect x="1045" y="377" width="461" height="1" fill="#a0a0a0" />
<rect x="1045" y="377" width="1" height="256" fill="#a0a0a0" />
<rect x="1045" y="632" width="461" height="1" fill="#fff" />
<rect x="1505" y="377" width="1" height="256" fill="#fff" />
<rect x="1046" y="378" width="459" height="1" fill="#696969" />
<rect x="1046" y="378" width="1" height="254" fill="#696969" />
<rect x="1046" y="631" width="459" height="1" fill="#e3e3e3" />
<rect x="1504" y="378" width="1" height="254" fill="#e3e3e3" />
<rect x="1046.8" y="617" width="457.20000000000005" height="15" fill="#f0f0f0" />
<rect x="1063" y="624" width="381" height="2" fill="#707070" />
<rect x="1489" y="378.6" width="15" height="238.39999999999998" fill="#f0f0f0" />
<polygon points="1492.8,389.0 1500.8,389.0 1496.8,385.0" fill="#a0a0a0"/>
<polygon points="1492.8,605.4 1500.8,605.4 1496.8,609.4" fill="#a0a0a0"/>
<text x="1051.6" y="391.5" font-size="14" fill="#000" font-family="'Liberation Mono', monospace" textLength="432.7" lengthAdjust="spacingAndGlyphs" >2025-8-3 / (533)Sara / TYC 1271-00679-1 V=8.30  R=7.92</text>
<text x="1051.6" y="421.5" font-size="14" fill="#000" font-family="'Liberation Mono', monospace" textLength="384.4" lengthAdjust="spacingAndGlyphs" >Event Time : 17h26m04.904s  +/- 0.087s  S/N=4.45</text>
<text x="1051.6" y="436.5" font-size="14" fill="#000" font-family="'Liberation Mono', monospace" textLength="263.8" lengthAdjust="spacingAndGlyphs" >Mag Drop (predicted):  7.6   Mag.</text>
<text x="1051.6" y="451.5" font-size="14" fill="#000" font-family="'Liberation Mono', monospace" textLength="263.8" lengthAdjust="spacingAndGlyphs" >Mag Drop (measured ):  6.90  Mag.</text>
<text x="1051.6" y="481.5" font-size="14" fill="#000" font-family="'Liberation Mono', monospace" textLength="328.1" lengthAdjust="spacingAndGlyphs" >-Statistical analysis of Light Intensity-</text>
<text x="1051.6" y="496.5" font-size="14" fill="#000" font-family="'Liberation Mono', monospace" textLength="320.1" lengthAdjust="spacingAndGlyphs" >Light intensity    Average   Stdv      n</text>
<text x="1051.6" y="511.5" font-size="14" fill="#000" font-family="'Liberation Mono', monospace" textLength="328.1" lengthAdjust="spacingAndGlyphs" >  Combined  :      2346.7    526.7     22</text>
<text x="1051.6" y="526.5" font-size="14" fill="#000" font-family="'Liberation Mono', monospace" textLength="328.1" lengthAdjust="spacingAndGlyphs" >  Background:         4.1    132.2      5</text>
<text x="1051.6" y="541.5" font-size="14" fill="#000" font-family="'Liberation Mono', monospace" textLength="328.1" lengthAdjust="spacingAndGlyphs" >Noise Level (N/S)  Upper    Lower   (S/N)</text>
<text x="1051.6" y="556.5" font-size="14" fill="#000" font-family="'Liberation Mono', monospace" textLength="271.9" lengthAdjust="spacingAndGlyphs" >  First event:     0.0000   6.2203</text>
<text x="1051.6" y="571.5" font-size="14" fill="#000" font-family="'Liberation Mono', monospace" textLength="328.1" lengthAdjust="spacingAndGlyphs" >  Total event:     0.2248   0.0565   4.45</text>
<text x="1051.6" y="586.5" font-size="14" fill="#000" font-family="'Liberation Mono', monospace" textLength="54.8" lengthAdjust="spacingAndGlyphs" >1.00636</text>
<rect x="1045" y="648" width="174" height="64" fill="none" stroke="#a0a0a0" stroke-width="1" shape-rendering="crispEdges" transform="translate(0.5,0.5)"/>
<rect x="1046" y="649" width="174" height="64" fill="none" stroke="#ffffff" stroke-width="1" shape-rendering="crispEdges" transform="translate(0.5,0.5)" stroke-opacity="0.9"/>
<rect x="1050.7" y="646" width="86.0" height="5" fill="#f0f0f0" />
<text x="1052.7" y="652.5" font-size="12.5" fill="#000" textLength="82.0" lengthAdjust="spacingAndGlyphs" >Text out to Graph</text>
<circle cx="1058.5" cy="664.1" r="5" fill="#fff" stroke="#a0a0a0" stroke-width="1"/>
<path d="M1054.0,664.1 A4.5,4.5 0 0 1 1058.5,659.6" fill="none" stroke="#696969" stroke-width="1.5"/>
<text x="1070.6" y="669.0" font-size="12.5" fill="#000" textLength="19.0" lengthAdjust="spacingAndGlyphs" >OFF</text>
<circle cx="1058.5" cy="681.9" r="5" fill="#fff" stroke="#a0a0a0" stroke-width="1"/>
<path d="M1054.0,681.9 A4.5,4.5 0 0 1 1058.5,677.4" fill="none" stroke="#696969" stroke-width="1.5"/>
<circle cx="1058.5" cy="681.9" r="2" fill="#000"/>
<text x="1070.6" y="686.4" font-size="12.5" fill="#000" textLength="131.0" lengthAdjust="spacingAndGlyphs" >Text with transparency BKG</text>
<circle cx="1058.5" cy="700.1" r="5" fill="#fff" stroke="#a0a0a0" stroke-width="1"/>
<path d="M1054.0,700.1 A4.5,4.5 0 0 1 1058.5,695.6" fill="none" stroke="#696969" stroke-width="1.5"/>
<text x="1070.6" y="704.6" font-size="12.5" fill="#000" textLength="141.0" lengthAdjust="spacingAndGlyphs" >Text with opaque background</text>
<rect x="1226" y="648" width="87" height="64" fill="none" stroke="#a0a0a0" stroke-width="1" shape-rendering="crispEdges" transform="translate(0.5,0.5)"/>
<rect x="1227" y="649" width="87" height="64" fill="none" stroke="#ffffff" stroke-width="1" shape-rendering="crispEdges" transform="translate(0.5,0.5)" stroke-opacity="0.9"/>
<rect x="1232.3" y="646" width="31.0" height="5" fill="#f0f0f0" />
<text x="1234.3" y="652.5" font-size="12.5" fill="#000" textLength="27.0" lengthAdjust="spacingAndGlyphs" >Mode</text>
<circle cx="1240.3" cy="664.1" r="5" fill="#fff" stroke="#a0a0a0" stroke-width="1"/>
<path d="M1235.8,664.1 A4.5,4.5 0 0 1 1240.3,659.6" fill="none" stroke="#696969" stroke-width="1.5"/>
<circle cx="1240.3" cy="664.1" r="2" fill="#000"/>
<text x="1252.3" y="669.0" font-size="12.5" fill="#000" textLength="23.0" lengthAdjust="spacingAndGlyphs" >Time</text>
<circle cx="1240.3" cy="681.9" r="5" fill="#fff" stroke="#a0a0a0" stroke-width="1"/>
<path d="M1235.8,681.9 A4.5,4.5 0 0 1 1240.3,677.4" fill="none" stroke="#696969" stroke-width="1.5"/>
<text x="1252.3" y="686.4" font-size="12.5" fill="#000" textLength="49.0" lengthAdjust="spacingAndGlyphs" >Info. Right</text>
<circle cx="1240.3" cy="700.1" r="5" fill="#fff" stroke="#a0a0a0" stroke-width="1"/>
<path d="M1235.8,700.1 A4.5,4.5 0 0 1 1240.3,695.6" fill="none" stroke="#696969" stroke-width="1.5"/>
<text x="1252.3" y="704.6" font-size="12.5" fill="#000" textLength="43.0" lengthAdjust="spacingAndGlyphs" >Info. Left</text>
<rect x="1321.3" y="644.7" width="161.5" height="17.399999999999977" fill="url(#dith)" />
<rect x="1321" y="645" width="18" height="17" fill="#f0f0f0" />
<rect x="1321" y="645" width="18" height="1" fill="#ffffff" />
<rect x="1321" y="645" width="1" height="17" fill="#ffffff" />
<rect x="1321" y="661" width="18" height="1" fill="#696969" />
<rect x="1338" y="645" width="1" height="17" fill="#696969" />
<rect x="1322" y="646" width="16" height="1" fill="#ffffff" />
<rect x="1322" y="646" width="1" height="15" fill="#ffffff" />
<rect x="1322" y="660" width="16" height="1" fill="#a0a0a0" />
<rect x="1337" y="646" width="1" height="15" fill="#a0a0a0" />
<polygon points="1331.8,649.9000000000001 1331.8,656.9000000000001 1328.3,653.4000000000001" fill="#000"/>
<rect x="1399" y="645" width="17" height="17" fill="#f0f0f0" />
<rect x="1399" y="645" width="17" height="1" fill="#ffffff" />
<rect x="1399" y="645" width="1" height="17" fill="#ffffff" />
<rect x="1399" y="661" width="17" height="1" fill="#696969" />
<rect x="1415" y="645" width="1" height="17" fill="#696969" />
<rect x="1400" y="646" width="15" height="1" fill="#ffffff" />
<rect x="1400" y="646" width="1" height="15" fill="#ffffff" />
<rect x="1400" y="660" width="15" height="1" fill="#a0a0a0" />
<rect x="1414" y="646" width="1" height="15" fill="#a0a0a0" />
<rect x="1466" y="645" width="17" height="17" fill="#f0f0f0" />
<rect x="1466" y="645" width="17" height="1" fill="#ffffff" />
<rect x="1466" y="645" width="1" height="17" fill="#ffffff" />
<rect x="1466" y="661" width="17" height="1" fill="#696969" />
<rect x="1482" y="645" width="1" height="17" fill="#696969" />
<rect x="1467" y="646" width="15" height="1" fill="#ffffff" />
<rect x="1467" y="646" width="1" height="15" fill="#ffffff" />
<rect x="1467" y="660" width="15" height="1" fill="#a0a0a0" />
<rect x="1481" y="646" width="1" height="15" fill="#a0a0a0" />
<polygon points="1472.85,649.9000000000001 1472.85,656.9000000000001 1476.35,653.4000000000001" fill="#000"/>
<rect x="1322" y="672" width="55" height="41" fill="none" stroke="#a0a0a0" stroke-width="1" shape-rendering="crispEdges" transform="translate(0.5,0.5)"/>
<rect x="1323" y="673" width="55" height="41" fill="none" stroke="#ffffff" stroke-width="1" shape-rendering="crispEdges" transform="translate(0.5,0.5)" stroke-opacity="0.9"/>
<rect x="1328.4" y="670" width="46.0" height="5" fill="#f0f0f0" />
<text x="1330.4" y="676.5" font-size="12.5" fill="#000" textLength="42.0" lengthAdjust="spacingAndGlyphs" >Font size</text>
<rect x="1330" y="683" width="16" height="11" fill="#f0f0f0" />
<rect x="1330" y="683" width="16" height="1" fill="#ffffff" />
<rect x="1330" y="683" width="1" height="11" fill="#ffffff" />
<rect x="1330" y="693" width="16" height="1" fill="#696969" />
<rect x="1345" y="683" width="1" height="11" fill="#696969" />
<rect x="1331" y="684" width="14" height="1" fill="#ffffff" />
<rect x="1331" y="684" width="1" height="9" fill="#ffffff" />
<rect x="1331" y="692" width="14" height="1" fill="#a0a0a0" />
<rect x="1344" y="684" width="1" height="9" fill="#a0a0a0" />
<polygon points="1335.1999999999998,690.05 1341.1999999999998,690.05 1338.1999999999998,687.05" fill="#000"/>
<rect x="1330" y="695" width="16" height="11" fill="#f0f0f0" />
<rect x="1330" y="695" width="16" height="1" fill="#ffffff" />
<rect x="1330" y="695" width="1" height="11" fill="#ffffff" />
<rect x="1330" y="705" width="16" height="1" fill="#696969" />
<rect x="1345" y="695" width="1" height="11" fill="#696969" />
<rect x="1331" y="696" width="14" height="1" fill="#ffffff" />
<rect x="1331" y="696" width="1" height="9" fill="#ffffff" />
<rect x="1331" y="704" width="14" height="1" fill="#a0a0a0" />
<rect x="1344" y="696" width="1" height="9" fill="#a0a0a0" />
<polygon points="1335.1999999999998,699.3499999999999 1341.1999999999998,699.3499999999999 1338.1999999999998,702.3499999999999" fill="#000"/>
<rect x="1347" y="683" width="23" height="19" fill="#fff" />
<rect x="1347" y="683" width="23" height="1" fill="#a0a0a0" />
<rect x="1347" y="683" width="1" height="19" fill="#a0a0a0" />
<rect x="1347" y="701" width="23" height="1" fill="#ffffff" />
<rect x="1369" y="683" width="1" height="19" fill="#ffffff" />
<rect x="1348" y="684" width="21" height="1" fill="#696969" />
<rect x="1348" y="684" width="1" height="17" fill="#696969" />
<rect x="1348" y="700" width="21" height="1" fill="#e3e3e3" />
<rect x="1368" y="684" width="1" height="17" fill="#e3e3e3" />
<text x="1349.6" y="697.1" font-size="12.5" fill="#000" textLength="12.0" lengthAdjust="spacingAndGlyphs" >10</text>
<rect x="1389" y="667" width="97" height="19" fill="#fff" />
<rect x="1389" y="667" width="97" height="1" fill="#a0a0a0" />
<rect x="1389" y="667" width="1" height="19" fill="#a0a0a0" />
<rect x="1389" y="685" width="97" height="1" fill="#ffffff" />
<rect x="1485" y="667" width="1" height="19" fill="#ffffff" />
<rect x="1390" y="668" width="95" height="1" fill="#696969" />
<rect x="1390" y="668" width="1" height="17" fill="#696969" />
<rect x="1390" y="684" width="95" height="1" fill="#e3e3e3" />
<rect x="1484" y="668" width="1" height="17" fill="#e3e3e3" />
<text x="1392.0" y="680.8" font-size="12.5" fill="#000" textLength="30.0" lengthAdjust="spacingAndGlyphs" >Edit16</text>
<rect x="1388" y="691" width="97" height="19" fill="#fff" />
<rect x="1388" y="691" width="97" height="1" fill="#a0a0a0" />
<rect x="1388" y="691" width="1" height="19" fill="#a0a0a0" />
<rect x="1388" y="709" width="97" height="1" fill="#ffffff" />
<rect x="1484" y="691" width="1" height="19" fill="#ffffff" />
<rect x="1389" y="692" width="95" height="1" fill="#696969" />
<rect x="1389" y="692" width="1" height="17" fill="#696969" />
<rect x="1389" y="708" width="95" height="1" fill="#e3e3e3" />
<rect x="1483" y="692" width="1" height="17" fill="#e3e3e3" />
<text x="1391.3" y="704.6" font-size="12.5" fill="#000" textLength="30.0" lengthAdjust="spacingAndGlyphs" >Edit25</text>
<rect x="1492" y="626.4" width="17" height="143.60000000000002" fill="#e8e8e8" />
<rect x="1492" y="626" width="17" height="16" fill="#f0f0f0" />
<rect x="1492" y="626" width="17" height="1" fill="#ffffff" />
<rect x="1492" y="626" width="1" height="16" fill="#ffffff" />
<rect x="1492" y="641" width="17" height="1" fill="#696969" />
<rect x="1508" y="626" width="1" height="16" fill="#696969" />
<rect x="1493" y="627" width="15" height="1" fill="#ffffff" />
<rect x="1493" y="627" width="1" height="14" fill="#ffffff" />
<rect x="1493" y="640" width="15" height="1" fill="#a0a0a0" />
<rect x="1507" y="627" width="1" height="14" fill="#a0a0a0" />
<polygon points="1496.35,635.95 1504.35,635.95 1500.35,631.95" fill="#000"/>
<rect x="1492" y="656" width="17" height="15" fill="#f0f0f0" />
<rect x="1492" y="656" width="17" height="1" fill="#ffffff" />
<rect x="1492" y="656" width="1" height="15" fill="#ffffff" />
<rect x="1492" y="670" width="17" height="1" fill="#696969" />
<rect x="1508" y="656" width="1" height="15" fill="#696969" />
<rect x="1493" y="657" width="15" height="1" fill="#ffffff" />
<rect x="1493" y="657" width="1" height="13" fill="#ffffff" />
<rect x="1493" y="669" width="15" height="1" fill="#a0a0a0" />
<rect x="1507" y="657" width="1" height="13" fill="#a0a0a0" />
<rect x="1492" y="755" width="16" height="15" fill="#f0f0f0" />
<rect x="1492" y="755" width="16" height="1" fill="#ffffff" />
<rect x="1492" y="755" width="1" height="15" fill="#ffffff" />
<rect x="1492" y="769" width="16" height="1" fill="#696969" />
<rect x="1507" y="755" width="1" height="15" fill="#696969" />
<rect x="1493" y="756" width="14" height="1" fill="#ffffff" />
<rect x="1493" y="756" width="1" height="13" fill="#ffffff" />
<rect x="1493" y="768" width="14" height="1" fill="#a0a0a0" />
<rect x="1506" y="756" width="1" height="13" fill="#a0a0a0" />
<polygon points="1495.75,760.65 1503.75,760.65 1499.75,764.65" fill="#000"/>
<rect x="1051" y="723" width="431" height="71" fill="#fff" />
<rect x="1051" y="723" width="431" height="1" fill="#a0a0a0" />
<rect x="1051" y="723" width="1" height="71" fill="#a0a0a0" />
<rect x="1051" y="793" width="431" height="1" fill="#fff" />
<rect x="1481" y="723" width="1" height="71" fill="#fff" />
<rect x="1052" y="724" width="429" height="1" fill="#696969" />
<rect x="1052" y="724" width="1" height="69" fill="#696969" />
<rect x="1052" y="792" width="429" height="1" fill="#e3e3e3" />
<rect x="1480" y="724" width="1" height="69" fill="#e3e3e3" />
<text x="1054.3" y="738.4" font-size="15" fill="#000" textLength="355.0" lengthAdjust="spacingAndGlyphs" >1  17 26 03.562 +/- 0.092s,  S/N= 4.17 D   Main change</text>
<rect x="1052" y="741.5" width="429" height="16.299999999999955" fill="#0078d7" />
<text x="1054.3" y="755.2" font-size="15" fill="#fff" textLength="355.0" lengthAdjust="spacingAndGlyphs" >2  17 26 04.904 +/- 0.087s,  S/N= 4.45 R   Main change</text>
<rect x="1074" y="803" width="192" height="23" fill="#f0f0f0" />
<rect x="1074" y="803" width="192" height="1" fill="#ffffff" />
<rect x="1074" y="803" width="1" height="23" fill="#ffffff" />
<rect x="1074" y="825" width="192" height="1" fill="#696969" />
<rect x="1265" y="803" width="1" height="23" fill="#696969" />
<rect x="1075" y="804" width="190" height="1" fill="#ffffff" />
<rect x="1075" y="804" width="1" height="21" fill="#ffffff" />
<rect x="1075" y="824" width="190" height="1" fill="#a0a0a0" />
<rect x="1264" y="804" width="1" height="21" fill="#a0a0a0" />
<text x="1170.5" y="819.0" font-size="12.5" fill="#000" text-anchor="middle" textLength="166.0" lengthAdjust="spacingAndGlyphs" >Miss Disappearance  (approx. time)</text>
<rect x="1274" y="803" width="184" height="23" fill="#f0f0f0" />
<rect x="1274" y="803" width="184" height="1" fill="#ffffff" />
<rect x="1274" y="803" width="1" height="23" fill="#ffffff" />
<rect x="1274" y="825" width="184" height="1" fill="#696969" />
<rect x="1457" y="803" width="1" height="23" fill="#696969" />
<rect x="1275" y="804" width="182" height="1" fill="#ffffff" />
<rect x="1275" y="804" width="1" height="21" fill="#ffffff" />
<rect x="1275" y="824" width="182" height="1" fill="#a0a0a0" />
<rect x="1456" y="804" width="1" height="21" fill="#a0a0a0" />
<text x="1366.5" y="819.1" font-size="12.5" fill="#000" text-anchor="middle" textLength="168.0" lengthAdjust="spacingAndGlyphs" >Miss  Reapppearance [approx. tine]</text>
<rect x="1051" y="842" width="110" height="20" fill="#fff" />
<rect x="1051" y="842" width="110" height="1" fill="#a0a0a0" />
<rect x="1051" y="842" width="1" height="20" fill="#a0a0a0" />
<rect x="1051" y="861" width="110" height="1" fill="#ffffff" />
<rect x="1160" y="842" width="1" height="20" fill="#ffffff" />
<rect x="1052" y="843" width="108" height="1" fill="#696969" />
<rect x="1052" y="843" width="1" height="18" fill="#696969" />
<rect x="1052" y="860" width="108" height="1" fill="#e3e3e3" />
<rect x="1159" y="843" width="1" height="18" fill="#e3e3e3" />
<text x="1053.6" y="856.5" font-size="12.5" fill="#000" textLength="84.0" lengthAdjust="spacingAndGlyphs" >Main light change</text>
<rect x="1144" y="844" width="15" height="16" fill="#f0f0f0" />
<rect x="1144" y="844" width="15" height="1" fill="#ffffff" />
<rect x="1144" y="844" width="1" height="16" fill="#ffffff" />
<rect x="1144" y="859" width="15" height="1" fill="#696969" />
<rect x="1158" y="844" width="1" height="16" fill="#696969" />
<rect x="1145" y="845" width="13" height="1" fill="#ffffff" />
<rect x="1145" y="845" width="1" height="14" fill="#ffffff" />
<rect x="1145" y="858" width="13" height="1" fill="#a0a0a0" />
<rect x="1157" y="845" width="1" height="14" fill="#a0a0a0" />
<polygon points="1147.5,850.0 1155.5,850.0 1151.5,854.0" fill="#000"/>
<rect x="1171" y="835" width="56" height="35" fill="#f0f0f0" />
<rect x="1171" y="835" width="56" height="1" fill="#ffffff" />
<rect x="1171" y="835" width="1" height="35" fill="#ffffff" />
<rect x="1171" y="869" width="56" height="1" fill="#696969" />
<rect x="1226" y="835" width="1" height="35" fill="#696969" />
<rect x="1172" y="836" width="54" height="1" fill="#ffffff" />
<rect x="1172" y="836" width="1" height="33" fill="#ffffff" />
<rect x="1172" y="868" width="54" height="1" fill="#a0a0a0" />
<rect x="1225" y="836" width="1" height="33" fill="#a0a0a0" />
<text x="1198.6" y="855.8" font-size="16" fill="#000" text-anchor="middle" textLength="42.0" lengthAdjust="spacingAndGlyphs" >Delete</text>
<rect x="1233" y="834" width="47" height="36" fill="#f0f0f0" />
<rect x="1233" y="834" width="47" height="1" fill="#ffffff" />
<rect x="1233" y="834" width="1" height="36" fill="#ffffff" />
<rect x="1233" y="869" width="47" height="1" fill="#696969" />
<rect x="1279" y="834" width="1" height="36" fill="#696969" />
<rect x="1234" y="835" width="45" height="1" fill="#ffffff" />
<rect x="1234" y="835" width="1" height="34" fill="#ffffff" />
<rect x="1234" y="868" width="45" height="1" fill="#a0a0a0" />
<rect x="1278" y="835" width="1" height="34" fill="#a0a0a0" />
<text x="1256.6" y="855.2" font-size="14.5" fill="#000" text-anchor="middle" textLength="24.0" lengthAdjust="spacingAndGlyphs" >Sort</text>
<rect x="1291.4" y="833.4" width="113.59999999999991" height="36.60000000000002" fill="#202020" />
<rect x="1292" y="834" width="112" height="36" fill="#f0f0f0" />
<rect x="1292" y="834" width="112" height="1" fill="#ffffff" />
<rect x="1292" y="834" width="1" height="36" fill="#ffffff" />
<rect x="1292" y="869" width="112" height="1" fill="#696969" />
<rect x="1403" y="834" width="1" height="36" fill="#696969" />
<rect x="1293" y="835" width="110" height="1" fill="#ffffff" />
<rect x="1293" y="835" width="1" height="34" fill="#ffffff" />
<rect x="1293" y="868" width="110" height="1" fill="#a0a0a0" />
<rect x="1402" y="835" width="1" height="34" fill="#a0a0a0" />
<rect x="1402" y="834.4" width="2" height="35.60000000000002" fill="#606060" />
<text x="1348.2" y="855.4" font-size="15" fill="#101010" font-weight="bold" text-anchor="middle" textLength="93.0" lengthAdjust="spacingAndGlyphs" >Add to report</text>
<rect x="1296" y="838" width="104" height="26" fill="none" stroke="#000" stroke-width="1" stroke-dasharray="1,1" shape-rendering="crispEdges"/>
<rect x="1419" y="834" width="88" height="36" fill="#f0f0f0" />
<rect x="1419" y="834" width="88" height="1" fill="#ffffff" />
<rect x="1419" y="834" width="1" height="36" fill="#ffffff" />
<rect x="1419" y="869" width="88" height="1" fill="#696969" />
<rect x="1506" y="834" width="1" height="36" fill="#696969" />
<rect x="1420" y="835" width="86" height="1" fill="#ffffff" />
<rect x="1420" y="835" width="1" height="34" fill="#ffffff" />
<rect x="1420" y="868" width="86" height="1" fill="#a0a0a0" />
<rect x="1505" y="835" width="1" height="34" fill="#a0a0a0" />
<text x="1461.5" y="854.9" font-size="13.5" fill="#000" font-weight="bold" text-anchor="middle" textLength="77.0" lengthAdjust="spacingAndGlyphs" >Apply &amp; Close</text>
</g>
<rect x="1042.5" y="12.5" width="466" height="854" rx="8" fill="none" stroke="#555" stroke-opacity="0.6"/>
<g transform="translate(35,847)"><path d="M3,2 H18 L24,8 V24 H3 Z" fill="#f4f4f4" stroke="#c8c8c8"/><rect x="0" y="4" width="12" height="11" fill="#4a6fbf"/><text x="2" y="13" font-size="9" fill="#fff" font-weight="bold">W</text><rect x="7" y="17" width="14" height="1" fill="#bbb"/><rect x="7" y="20" width="14" height="1" fill="#bbb"/></g>
</svg>
</body></html>
